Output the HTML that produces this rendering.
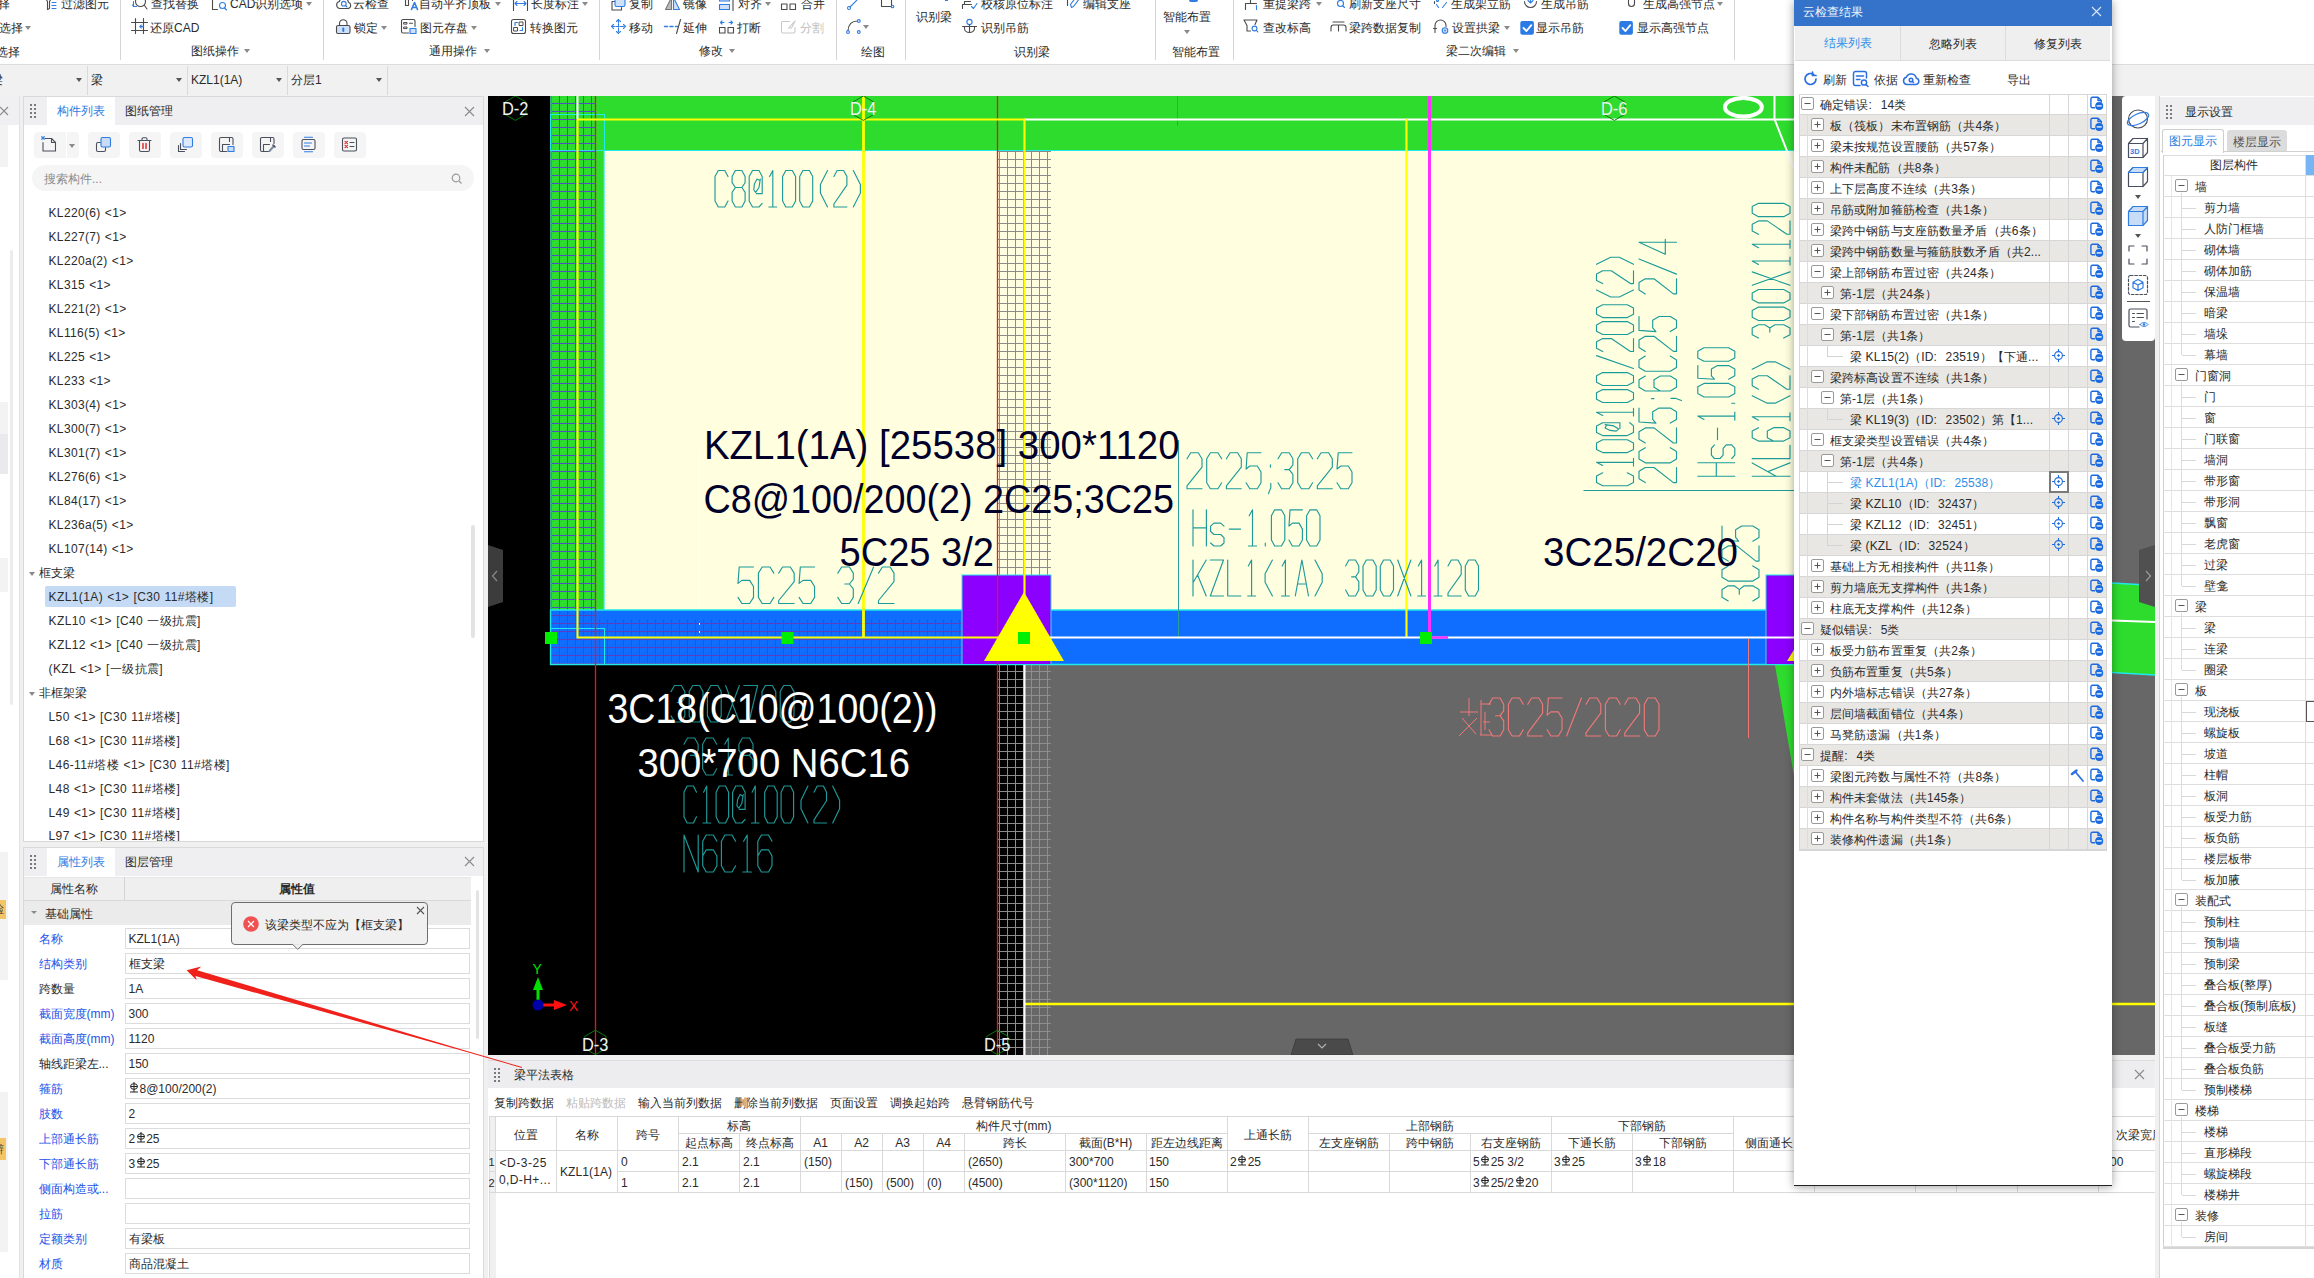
<!DOCTYPE html><html><head><meta charset="utf-8"><title>GTJ</title><style>html,body{margin:0;padding:0}body{width:2314px;height:1278px;position:relative;overflow:hidden;background:#fff;font-family:"Liberation Sans",sans-serif;font-size:12px}</style></head><body><div style="position:absolute;left:0px;top:0px;width:2314px;height:64px;background:#fff"></div><div style="position:absolute;left:0px;top:64px;width:2314px;height:1px;background:#dcdcdc"></div><div style="position:absolute;left:0px;top:65px;width:2314px;height:31px;background:#f1f1f1"></div><div style="position:absolute;left:120px;top:0px;width:1px;height:60px;background:#d4d4d4"></div><div style="position:absolute;left:323px;top:0px;width:1px;height:60px;background:#d4d4d4"></div><div style="position:absolute;left:599px;top:0px;width:1px;height:60px;background:#d4d4d4"></div><div style="position:absolute;left:836px;top:0px;width:1px;height:60px;background:#d4d4d4"></div><div style="position:absolute;left:905px;top:0px;width:1px;height:60px;background:#d4d4d4"></div><div style="position:absolute;left:1155px;top:0px;width:1px;height:60px;background:#d4d4d4"></div><div style="position:absolute;left:1233px;top:0px;width:1px;height:60px;background:#d4d4d4"></div><div style="position:absolute;left:1734px;top:0px;width:1px;height:60px;background:#d4d4d4"></div><span style="position:absolute;left:-2.5px;top:-4.5px;line-height:16px;font-size:12px;color:#2b2b2b;white-space:nowrap;">择</span><svg style="position:absolute;left:43px;top:-5px;overflow:visible" width="16" height="16" viewBox="-0.5 -0.5 16 16" fill="none" stroke-width="1.100" stroke-linecap="round" stroke-linejoin="round"><path d="M1 1H9L6 6V13L4 14V6Z" stroke="#4a4a4a"/><path d="M8.500 7H12.500M8.500 10H12.500M8.500 13H12.500" stroke="#2f7de1"/></svg><span style="position:absolute;left:61px;top:-4.5px;line-height:16px;font-size:12px;color:#2b2b2b;white-space:nowrap;">过滤图元</span><svg style="position:absolute;left:131px;top:-5px;overflow:visible" width="16" height="16" viewBox="-0.5 -0.5 16 16" fill="none" stroke-width="1.100" stroke-linecap="round" stroke-linejoin="round"><circle cx="9" cy="6" r="5" stroke="#4a4a4a"/><path d="M13 10L15.5 13.5" stroke="#4a4a4a"/><path d="M2 6V11H5M2 11L1 9.5" stroke="#2f7de1"/></svg><span style="position:absolute;left:151px;top:-4.5px;line-height:16px;font-size:12px;color:#2b2b2b;white-space:nowrap;">查找替换</span><svg style="position:absolute;left:211px;top:-5px;overflow:visible" width="16" height="16" viewBox="-0.5 -0.5 16 16" fill="none" stroke-width="1.100" stroke-linecap="round" stroke-linejoin="round"><path d="M6 14H1V1H12" stroke="#4a4a4a"/><circle cx="11" cy="10" r="3" stroke="#2f7de1"/><path d="M13 12.5L15 14.5M5 3H10" stroke="#2f7de1"/></svg><span style="position:absolute;left:230px;top:-4.5px;line-height:16px;font-size:12px;color:#2b2b2b;white-space:nowrap;">CAD识别选项</span><div style="position:absolute;left:306px;top:1.5px;border-left:3.5px solid transparent;border-right:3.5px solid transparent;border-top:4px solid #8a8a8a"></div><svg style="position:absolute;left:335px;top:-5px;overflow:visible" width="16" height="16" viewBox="-0.5 -0.5 16 16" fill="none" stroke-width="1.100" stroke-linecap="round" stroke-linejoin="round"><path d="M4 13H12.5A3.2 3.2 0 0 0 13 6.8A4.8 4.8 0 0 0 3.8 6A3.6 3.6 0 0 0 4 13Z" stroke="#4a4a4a"/><circle cx="8.3" cy="8.2" r="2.3" stroke="#2f7de1"/><path d="M10 10L11.5 11.5" stroke="#2f7de1"/></svg><span style="position:absolute;left:353px;top:-4.5px;line-height:16px;font-size:12px;color:#2b2b2b;white-space:nowrap;">云检查</span><svg style="position:absolute;left:403px;top:-5px;overflow:visible" width="16" height="16" viewBox="-0.5 -0.5 16 16" fill="none" stroke-width="1.100" stroke-linecap="round" stroke-linejoin="round"><path d="M2 1V10H5V1M9 1V5" stroke="#4a4a4a"/><path d="M8 14L11 7L14 14M9 12H13" stroke="#2f7de1" stroke-width="1.6"/></svg><span style="position:absolute;left:419px;top:-4.5px;line-height:16px;font-size:12px;color:#2b2b2b;white-space:nowrap;">自动平齐顶板</span><div style="position:absolute;left:495px;top:1.5px;border-left:3.5px solid transparent;border-right:3.5px solid transparent;border-top:4px solid #8a8a8a"></div><svg style="position:absolute;left:512px;top:-5px;overflow:visible" width="16" height="16" viewBox="-0.5 -0.5 16 16" fill="none" stroke-width="1.100" stroke-linecap="round" stroke-linejoin="round"><path d="M1 1V15M15 1V15" stroke="#4a4a4a"/><path d="M2.5 8H13.5M4.5 6L2.5 8L4.5 10M11.5 6L13.5 8L11.5 10" stroke="#2f7de1"/></svg><span style="position:absolute;left:531px;top:-4.5px;line-height:16px;font-size:12px;color:#2b2b2b;white-space:nowrap;">长度标注</span><div style="position:absolute;left:582px;top:1.5px;border-left:3.5px solid transparent;border-right:3.5px solid transparent;border-top:4px solid #8a8a8a"></div><svg style="position:absolute;left:610px;top:-5px;overflow:visible" width="16" height="16" viewBox="-0.5 -0.5 16 16" fill="none" stroke-width="1.100" stroke-linecap="round" stroke-linejoin="round"><path d="M4 6H1.5V14.5H11V12" stroke="#4a4a4a"/><rect x="4.5" y="1" width="10" height="10" rx="1.5" fill="#cfe0fa" stroke="#2f7de1"/></svg><span style="position:absolute;left:629px;top:-4.5px;line-height:16px;font-size:12px;color:#2b2b2b;white-space:nowrap;">复制</span><svg style="position:absolute;left:664px;top:-5px;overflow:visible" width="16" height="16" viewBox="-0.5 -0.5 16 16" fill="none" stroke-width="1.100" stroke-linecap="round" stroke-linejoin="round"><path d="M7 2L1 14H7Z" stroke="#777" fill="#bbb"/><path d="M9 2L15 14H9Z" stroke="#2f7de1" fill="#cfe0fa"/></svg><span style="position:absolute;left:683px;top:-4.5px;line-height:16px;font-size:12px;color:#2b2b2b;white-space:nowrap;">镜像</span><svg style="position:absolute;left:718px;top:-5px;overflow:visible" width="16" height="16" viewBox="-0.5 -0.5 16 16" fill="none" stroke-width="1.100" stroke-linecap="round" stroke-linejoin="round"><rect x="1" y="1" width="10" height="4.5" fill="#cfe0fa" stroke="#2f7de1"/><rect x="1" y="9" width="10" height="5" fill="#cfe0fa" stroke="#2f7de1"/><path d="M14.5 0V15" stroke="#4a4a4a"/></svg><span style="position:absolute;left:737.5px;top:-4.5px;line-height:16px;font-size:12px;color:#2b2b2b;white-space:nowrap;">对齐</span><div style="position:absolute;left:765px;top:1.5px;border-left:3.5px solid transparent;border-right:3.5px solid transparent;border-top:4px solid #8a8a8a"></div><svg style="position:absolute;left:780px;top:-5px;overflow:visible" width="16" height="16" viewBox="-0.5 -0.5 16 16" fill="none" stroke-width="1.100" stroke-linecap="round" stroke-linejoin="round"><rect x="1" y="8.5" width="5.5" height="5.5" stroke="#4a4a4a"/><rect x="9.5" y="8.5" width="5.5" height="5.5" stroke="#4a4a4a"/><path d="M3 4H6M10 4H13" stroke="#2f7de1"/></svg><span style="position:absolute;left:800.5px;top:-4.5px;line-height:16px;font-size:12px;color:#2b2b2b;white-space:nowrap;">合并</span><svg style="position:absolute;left:961px;top:-5px;overflow:visible" width="16" height="16" viewBox="-0.5 -0.5 16 16" fill="none" stroke-width="1.100" stroke-linecap="round" stroke-linejoin="round"><path d="M1 13V9H10M3 9V6H9" stroke="#4a4a4a"/><path d="M10 11L12 13L15.5 8" stroke="#2f7de1"/></svg><span style="position:absolute;left:981px;top:-4.5px;line-height:16px;font-size:12px;color:#2b2b2b;white-space:nowrap;">校核原位标注</span><svg style="position:absolute;left:1066px;top:-5px;overflow:visible" width="16" height="16" viewBox="-0.5 -0.5 16 16" fill="none" stroke-width="1.100" stroke-linecap="round" stroke-linejoin="round"><path d="M1 1V10" stroke="#4a4a4a"/><path d="M5 12L4 9L10 1L13 3L7 11Z" stroke="#2f7de1"/></svg><span style="position:absolute;left:1083px;top:-4.5px;line-height:16px;font-size:12px;color:#2b2b2b;white-space:nowrap;">编辑支座</span><svg style="position:absolute;left:1244px;top:-5px;overflow:visible" width="16" height="16" viewBox="-0.5 -0.5 16 16" fill="none" stroke-width="1.100" stroke-linecap="round" stroke-linejoin="round"><path d="M1 14V8H12M6 8V4L10 1" stroke="#4a4a4a"/><path d="M12 10V14" stroke="#2f7de1"/></svg><span style="position:absolute;left:1263.2px;top:-4.5px;line-height:16px;font-size:12px;color:#2b2b2b;white-space:nowrap;">重提梁跨</span><div style="position:absolute;left:1315.5px;top:1.5px;border-left:3.5px solid transparent;border-right:3.5px solid transparent;border-top:4px solid #8a8a8a"></div><svg style="position:absolute;left:1330px;top:-5px;overflow:visible" width="16" height="16" viewBox="-0.5 -0.5 16 16" fill="none" stroke-width="1.100" stroke-linecap="round" stroke-linejoin="round"><path d="M1 3L3 1M3 4L6 2" stroke="#4a4a4a"/><circle cx="10" cy="8" r="3" stroke="#2f7de1"/><path d="M12.5 10.5L14 12" stroke="#2f7de1"/></svg><span style="position:absolute;left:1348.8px;top:-4.5px;line-height:16px;font-size:12px;color:#2b2b2b;white-space:nowrap;">刷新支座尺寸</span><svg style="position:absolute;left:1433px;top:-5px;overflow:visible" width="16" height="16" viewBox="-0.5 -0.5 16 16" fill="none" stroke-width="1.100" stroke-linecap="round" stroke-linejoin="round"><path d="M1 8V1H14V4" stroke="#4a4a4a" stroke-dasharray="2 2"/><path d="M3 9L5 12M9 12L13 7" stroke="#2f7de1"/><circle cx="4" cy="5" r="1" stroke="#2f7de1"/></svg><span style="position:absolute;left:1451.3px;top:-4.5px;line-height:16px;font-size:12px;color:#2b2b2b;white-space:nowrap;">生成架立筋</span><svg style="position:absolute;left:1522px;top:-5px;overflow:visible" width="16" height="16" viewBox="-0.5 -0.5 16 16" fill="none" stroke-width="1.100" stroke-linecap="round" stroke-linejoin="round"><path d="M2 6A6 6 0 0 0 14 6" stroke="#4a4a4a"/><path d="M8 1V7M5.5 5L8 7.5L10.5 5" stroke="#2f7de1"/></svg><span style="position:absolute;left:1540.7px;top:-4.5px;line-height:16px;font-size:12px;color:#2b2b2b;white-space:nowrap;">生成吊筋</span><svg style="position:absolute;left:1623px;top:-5px;overflow:visible" width="16" height="16" viewBox="-0.5 -0.5 16 16" fill="none" stroke-width="1.100" stroke-linecap="round" stroke-linejoin="round"><path d="M2 1H14M5 1V8A3 3 0 0 0 11 8V1" stroke="#4a4a4a"/></svg><span style="position:absolute;left:1643px;top:-4.5px;line-height:16px;font-size:12px;color:#2b2b2b;white-space:nowrap;">生成高强节点</span><div style="position:absolute;left:1717px;top:1.5px;border-left:3.5px solid transparent;border-right:3.5px solid transparent;border-top:4px solid #8a8a8a"></div><svg style="position:absolute;left:846px;top:-6px;overflow:visible" width="16" height="16" viewBox="-0.5 -0.5 16 16" fill="none" stroke-width="1.100" stroke-linecap="round" stroke-linejoin="round"><path d="M3.5 12.5L14 2" stroke="#2f7de1"/><circle cx="2.5" cy="13.5" r="1.5" stroke="#2f7de1"/></svg><svg style="position:absolute;left:880px;top:-3px;overflow:visible" width="16" height="16" viewBox="-0.5 -0.5 16 16" fill="none" stroke-width="1.100" stroke-linecap="round" stroke-linejoin="round"><path d="M1 0V9H11V0" stroke="#4a4a4a"/><circle cx="12" cy="9" r="1.3" stroke="#2f7de1"/></svg><span style="position:absolute;left:-1px;top:19.5px;line-height:16px;font-size:12px;color:#2b2b2b;white-space:nowrap;">选择</span><div style="position:absolute;left:25px;top:25.5px;border-left:3.5px solid transparent;border-right:3.5px solid transparent;border-top:4px solid #8a8a8a"></div><svg style="position:absolute;left:131px;top:18px;overflow:visible" width="16" height="16" viewBox="-0.5 -0.5 16 16" fill="none" stroke-width="1.100" stroke-linecap="round" stroke-linejoin="round"><path d="M4 0V15M12 0V15M0 4H16M0 12H16" stroke="#4a4a4a"/><path d="M7.5 8L10 5.5V7.2H12.5V8.8H10V10.5Z" fill="#2f7de1" stroke="none"/></svg><span style="position:absolute;left:150px;top:19.5px;line-height:16px;font-size:12px;color:#2b2b2b;white-space:nowrap;">还原CAD</span><svg style="position:absolute;left:335px;top:18px;overflow:visible" width="16" height="16" viewBox="-0.5 -0.5 16 16" fill="none" stroke-width="1.100" stroke-linecap="round" stroke-linejoin="round"><path d="M4 7V4.5A3.8 3.8 0 0 1 11.5 4.5V7" stroke="#4a4a4a"/><rect x="1" y="7" width="13.5" height="8" rx="1.5" fill="#cfe0fa" stroke="#4a4a4a"/><path d="M7.8 10V12.5" stroke="#2f7de1" stroke-width="2"/></svg><span style="position:absolute;left:354px;top:19.5px;line-height:16px;font-size:12px;color:#2b2b2b;white-space:nowrap;">锁定</span><div style="position:absolute;left:381px;top:25.5px;border-left:3.5px solid transparent;border-right:3.5px solid transparent;border-top:4px solid #8a8a8a"></div><svg style="position:absolute;left:400px;top:18px;overflow:visible" width="16" height="16" viewBox="-0.5 -0.5 16 16" fill="none" stroke-width="1.100" stroke-linecap="round" stroke-linejoin="round"><path d="M8 14.5H2.5A1.5 1.5 0 0 1 1 13V2.5A1.5 1.5 0 0 1 2.5 1H13A1.5 1.5 0 0 1 14.5 2.5V8" stroke="#4a4a4a"/><rect x="3.5" y="4" width="3" height="1.6" stroke="#4a4a4a" stroke-width="1"/><path d="M9 4.8H12" stroke="#4a4a4a"/><rect x="3.5" y="8.5" width="3" height="1.6" stroke="#4a4a4a" stroke-width="1"/><rect x="9.5" y="10" width="6" height="5" fill="#cfe0fa" stroke="#2f7de1"/></svg><span style="position:absolute;left:420px;top:19.5px;line-height:16px;font-size:12px;color:#2b2b2b;white-space:nowrap;">图元存盘</span><div style="position:absolute;left:471px;top:25.5px;border-left:3.5px solid transparent;border-right:3.5px solid transparent;border-top:4px solid #8a8a8a"></div><svg style="position:absolute;left:510px;top:18px;overflow:visible" width="16" height="16" viewBox="-0.5 -0.5 16 16" fill="none" stroke-width="1.100" stroke-linecap="round" stroke-linejoin="round"><rect x="1" y="1" width="14" height="14" rx="2" stroke="#4a4a4a"/><rect x="9" y="3.5" width="3.5" height="3.5" stroke="#4a4a4a" stroke-width="1"/><rect x="3.5" y="9" width="3.5" height="3.5" stroke="#4a4a4a" stroke-width="1"/><path d="M7 4H4.5V7M12 9V12H9.5" stroke="#2f7de1"/></svg><span style="position:absolute;left:530px;top:19.5px;line-height:16px;font-size:12px;color:#2b2b2b;white-space:nowrap;">转换图元</span><svg style="position:absolute;left:610px;top:18px;overflow:visible" width="16" height="16" viewBox="-0.5 -0.5 16 16" fill="none" stroke-width="1.100" stroke-linecap="round" stroke-linejoin="round"><path d="M8 1V15M1 8H15M6 3L8 1L10 3M6 13L8 15L10 13M3 6L1 8L3 10M13 6L15 8L13 10" stroke="#2f7de1" stroke-dasharray="3.2 1.2"/></svg><span style="position:absolute;left:629.3px;top:19.5px;line-height:16px;font-size:12px;color:#2b2b2b;white-space:nowrap;">移动</span><svg style="position:absolute;left:664px;top:18px;overflow:visible" width="16" height="16" viewBox="-0.5 -0.5 16 16" fill="none" stroke-width="1.100" stroke-linecap="round" stroke-linejoin="round"><path d="M0 8H3M5.5 8H8.5M11 8H13" stroke="#2f7de1" stroke-width="1.5"/><path d="M16 1L12 15" stroke="#4a4a4a"/></svg><span style="position:absolute;left:683px;top:19.5px;line-height:16px;font-size:12px;color:#2b2b2b;white-space:nowrap;">延伸</span><svg style="position:absolute;left:718px;top:18px;overflow:visible" width="16" height="16" viewBox="-0.5 -0.5 16 16" fill="none" stroke-width="1.100" stroke-linecap="round" stroke-linejoin="round"><rect x="1" y="9" width="5.5" height="5.5" stroke="#4a4a4a"/><rect x="9.5" y="9" width="5.5" height="5.5" stroke="#4a4a4a"/><path d="M2 4H5.5M3.5 2.5L2 4L3.5 5.5M10.5 4H14M12.5 2.5L14 4L12.5 5.5" stroke="#2f7de1"/></svg><span style="position:absolute;left:737px;top:19.5px;line-height:16px;font-size:12px;color:#2b2b2b;white-space:nowrap;">打断</span><svg style="position:absolute;left:780px;top:18px;overflow:visible" width="16" height="16" viewBox="-0.5 -0.5 16 16" fill="none" stroke-width="1.100" stroke-linecap="round" stroke-linejoin="round"><path d="M9 3H2.5A1.5 1.5 0 0 0 1 4.5V13A1.5 1.5 0 0 0 2.5 14.5H13A1.5 1.5 0 0 0 14.5 13V9M8 9.5L14.5 2.5L11 9.5Z" stroke="#c9c9c9"/></svg><span style="position:absolute;left:800.3px;top:19.5px;line-height:16px;font-size:12px;color:#bdbdbd;white-space:nowrap;">分割</span><svg style="position:absolute;left:961px;top:18px;overflow:visible" width="16" height="16" viewBox="-0.5 -0.5 16 16" fill="none" stroke-width="1.100" stroke-linecap="round" stroke-linejoin="round"><circle cx="8" cy="3.500" r="2.600" stroke="#2f7de1"/><path d="M1 8H15M3 8V10A5 4 0 0 0 13 10V8M8 6.200V14" stroke="#4a4a4a"/></svg><span style="position:absolute;left:981px;top:19.5px;line-height:16px;font-size:12px;color:#2b2b2b;white-space:nowrap;">识别吊筋</span><svg style="position:absolute;left:1243px;top:18px;overflow:visible" width="16" height="16" viewBox="-0.5 -0.5 16 16" fill="none" stroke-width="1.100" stroke-linecap="round" stroke-linejoin="round"><path d="M0.500 1.500H13.500L11.500 6M0.500 1.500L3.500 7V12.500H7" stroke="#4a4a4a"/><circle cx="11" cy="10" r="2.400" stroke="#2f7de1"/><path d="M12.800 11.800L14.300 13.300" stroke="#2f7de1"/></svg><span style="position:absolute;left:1262.5px;top:19.5px;line-height:16px;font-size:12px;color:#2b2b2b;white-space:nowrap;">查改标高</span><svg style="position:absolute;left:1330px;top:18px;overflow:visible" width="16" height="16" viewBox="-0.5 -0.5 16 16" fill="none" stroke-width="1.100" stroke-linecap="round" stroke-linejoin="round"><path d="M2.500 3.500H13.500M0.500 12.500V9A2.500 2.500 0 0 1 3 6.500H13A2.500 2.500 0 0 1 15.500 9V12.500M8 6.500V12.500" stroke="#4a4a4a"/></svg><span style="position:absolute;left:1348.8px;top:19.5px;line-height:16px;font-size:12px;color:#2b2b2b;white-space:nowrap;">梁跨数据复制</span><svg style="position:absolute;left:1433px;top:18px;overflow:visible" width="16" height="16" viewBox="-0.5 -0.5 16 16" fill="none" stroke-width="1.100" stroke-linecap="round" stroke-linejoin="round"><path d="M1.500 14V7A5.500 5.500 0 0 1 12.500 7V8" stroke="#4a4a4a"/><path d="M0 10H3" stroke="#4a4a4a"/><circle cx="11.500" cy="12" r="2.800" stroke="#2f7de1" fill="#cfe0fa"/><circle cx="11.500" cy="12" r="0.900" fill="#2f7de1" stroke="none"/></svg><span style="position:absolute;left:1452.3px;top:19.5px;line-height:16px;font-size:12px;color:#2b2b2b;white-space:nowrap;">设置拱梁</span><div style="position:absolute;left:1504px;top:25.5px;border-left:3.5px solid transparent;border-right:3.5px solid transparent;border-top:4px solid #8a8a8a"></div><svg style="position:absolute;left:845px;top:18px;overflow:visible" width="16" height="16" viewBox="-0.5 -0.5 16 16" fill="none" stroke-width="1.100" stroke-linecap="round" stroke-linejoin="round"><path d="M2.5 12C3 6 6 2.5 12 2.5" stroke="#4a4a4a"/><circle cx="2.5" cy="13.5" r="1.4" stroke="#2f7de1"/><circle cx="13.3" cy="2.5" r="1.4" stroke="#2f7de1"/><circle cx="13.3" cy="13.5" r="1.4" stroke="#2f7de1"/></svg><div style="position:absolute;left:863px;top:24.5px;border-left:3.5px solid transparent;border-right:3.5px solid transparent;border-top:4px solid #8a8a8a"></div><svg style="position:absolute;left:1520px;top:20px;overflow:visible" width="15" height="15" viewBox="-0.5 -0.5 15 15" fill="none" stroke-width="1.100" stroke-linecap="round" stroke-linejoin="round"><rect x="-0.200" y="0.600" width="13.600" height="13.700" rx="2" fill="#2c7be5" stroke="none"/><path d="M3 7.500L6 10.500L10.800 4.600" stroke="#fff" stroke-width="1.800"/></svg><span style="position:absolute;left:1536.4px;top:20.0px;line-height:16px;font-size:12px;color:#2b2b2b;white-space:nowrap;">显示吊筋</span><svg style="position:absolute;left:1619px;top:20px;overflow:visible" width="15" height="15" viewBox="-0.5 -0.5 15 15" fill="none" stroke-width="1.100" stroke-linecap="round" stroke-linejoin="round"><rect x="-0.200" y="0.600" width="13.600" height="13.700" rx="2" fill="#2c7be5" stroke="none"/><path d="M3 7.500L6 10.500L10.800 4.600" stroke="#fff" stroke-width="1.800"/></svg><span style="position:absolute;left:1637px;top:20.0px;line-height:16px;font-size:12px;color:#2b2b2b;white-space:nowrap;">显示高强节点</span><span style="position:absolute;left:916px;top:8.5px;line-height:16px;font-size:12px;color:#2b2b2b;white-space:nowrap;">识别梁</span><div style="position:absolute;left:945px;top:0px;width:3px;height:1px;background:#2f7de1"></div><span style="position:absolute;left:1163px;top:9.0px;line-height:16px;font-size:12px;color:#2b2b2b;white-space:nowrap;">智能布置</span><div style="position:absolute;left:1184px;top:29.5px;border-left:3.5px solid transparent;border-right:3.5px solid transparent;border-top:4px solid #8a8a8a"></div><div style="position:absolute;left:1189px;top:0px;width:9px;height:2px;background:#2f7de1;border-radius:0 0 4px 4px"></div><span style="position:absolute;left:-4px;top:44.0px;line-height:16px;font-size:12px;color:#2b2b2b;white-space:nowrap;">选择</span><span style="position:absolute;left:191px;top:42.5px;line-height:16px;font-size:12px;color:#2b2b2b;white-space:nowrap;">图纸操作</span><div style="position:absolute;left:244px;top:48.5px;border-left:3.5px solid transparent;border-right:3.5px solid transparent;border-top:4px solid #8a8a8a"></div><span style="position:absolute;left:429px;top:42.5px;line-height:16px;font-size:12px;color:#2b2b2b;white-space:nowrap;">通用操作</span><div style="position:absolute;left:484px;top:48.5px;border-left:3.5px solid transparent;border-right:3.5px solid transparent;border-top:4px solid #8a8a8a"></div><span style="position:absolute;left:699px;top:42.5px;line-height:16px;font-size:12px;color:#2b2b2b;white-space:nowrap;">修改</span><div style="position:absolute;left:729px;top:48.5px;border-left:3.5px solid transparent;border-right:3.5px solid transparent;border-top:4px solid #8a8a8a"></div><span style="position:absolute;left:861px;top:44.0px;line-height:16px;font-size:12px;color:#2b2b2b;white-space:nowrap;">绘图</span><span style="position:absolute;left:1014px;top:44.0px;line-height:16px;font-size:12px;color:#2b2b2b;white-space:nowrap;">识别梁</span><span style="position:absolute;left:1172px;top:44.0px;line-height:16px;font-size:12px;color:#2b2b2b;white-space:nowrap;">智能布置</span><span style="position:absolute;left:1445.8px;top:42.5px;line-height:16px;font-size:12px;color:#2b2b2b;white-space:nowrap;">梁二次编辑</span><div style="position:absolute;left:1513px;top:48.5px;border-left:3.5px solid transparent;border-right:3.5px solid transparent;border-top:4px solid #8a8a8a"></div><div style="position:absolute;left:87px;top:66px;width:1px;height:29px;background:#dadada"></div><div style="position:absolute;left:187px;top:66px;width:1px;height:29px;background:#dadada"></div><div style="position:absolute;left:287px;top:66px;width:1px;height:29px;background:#dadada"></div><div style="position:absolute;left:386.5px;top:66px;width:1px;height:29px;background:#dadada"></div><span style="position:absolute;left:-9px;top:72.0px;line-height:16px;font-size:12px;color:#2b2b2b;white-space:nowrap;">梁</span><div style="position:absolute;left:76px;top:78px;border-left:3.5px solid transparent;border-right:3.5px solid transparent;border-top:4px solid #555"></div><span style="position:absolute;left:91px;top:72.0px;line-height:16px;font-size:12px;color:#2b2b2b;white-space:nowrap;">梁</span><div style="position:absolute;left:176px;top:78px;border-left:3.5px solid transparent;border-right:3.5px solid transparent;border-top:4px solid #555"></div><span style="position:absolute;left:191px;top:72.0px;line-height:16px;font-size:12px;color:#2b2b2b;white-space:nowrap;">KZL1(1A)</span><div style="position:absolute;left:276px;top:78px;border-left:3.5px solid transparent;border-right:3.5px solid transparent;border-top:4px solid #555"></div><span style="position:absolute;left:291px;top:72.0px;line-height:16px;font-size:12px;color:#2b2b2b;white-space:nowrap;">分层1</span><div style="position:absolute;left:376px;top:78px;border-left:3.5px solid transparent;border-right:3.5px solid transparent;border-top:4px solid #555"></div>
<div style="position:absolute;left:0px;top:96px;width:488px;height:1182px;background:#f0f0f0"></div><div style="position:absolute;left:0px;top:96px;width:19px;height:1182px;background:#fff"></div><div style="position:absolute;left:19px;top:96px;width:1px;height:1182px;background:#e2e2e2"></div><div style="position:absolute;left:0px;top:96px;width:19px;height:29px;background:#f0f0f2"></div><svg style="position:absolute;left:0px;top:107px;overflow:visible" width="8" height="8"><path d="M0 0L8 8M8 0L0 8" stroke="#8a8a8a" stroke-width="1.1"/></svg><div style="position:absolute;left:0px;top:125px;width:8px;height:42px;background:#f3f3f3"></div><div style="position:absolute;left:0px;top:402px;width:8px;height:34px;background:#f3f3f3"></div><div style="position:absolute;left:0px;top:434px;width:8px;height:40px;background:#e9e9ee"></div><div style="position:absolute;left:0px;top:558px;width:8px;height:34px;background:#f3f3f3"></div><div style="position:absolute;left:0px;top:852px;width:8px;height:128px;background:#f3f3f3"></div><div style="position:absolute;left:0px;top:1092px;width:8px;height:160px;background:#f3f3f3"></div><div style="position:absolute;left:10px;top:250px;width:3px;height:455px;background:#ececec;border-radius:2px"></div><div style="position:absolute;left:0px;top:900px;width:6px;height:19px;background:#f3c565"></div><div style="position:absolute;left:0px;top:1138px;width:6px;height:22px;background:#f3c565"></div><span style="position:absolute;left:-7px;top:901.0px;line-height:16px;font-size:11px;color:#444;white-space:nowrap;">检</span><span style="position:absolute;left:-7px;top:1141.0px;line-height:16px;font-size:11px;color:#444;white-space:nowrap;">辩</span><div style="position:absolute;left:23px;top:96px;width:461px;height:746px;background:#fff;border:1px solid #d9d9d9;box-sizing:border-box"></div><div style="position:absolute;left:24px;top:97px;width:459px;height:28px;background:#efeff1"></div><div style="position:absolute;left:47px;top:97px;width:68px;height:28px;background:#fff"></div><svg style="position:absolute;left:30px;top:104px" width="6" height="14"><rect x="0" y="0" width="2" height="2" fill="#7a7a7a"/><rect x="0" y="4" width="2" height="2" fill="#7a7a7a"/><rect x="0" y="8" width="2" height="2" fill="#7a7a7a"/><rect x="0" y="12" width="2" height="2" fill="#7a7a7a"/><rect x="4" y="0" width="2" height="2" fill="#7a7a7a"/><rect x="4" y="4" width="2" height="2" fill="#7a7a7a"/><rect x="4" y="8" width="2" height="2" fill="#7a7a7a"/><rect x="4" y="12" width="2" height="2" fill="#7a7a7a"/></svg><span style="position:absolute;left:57px;top:103.0px;line-height:16px;font-size:12px;color:#2f7de1;white-space:nowrap;">构件列表</span><span style="position:absolute;left:125px;top:103.0px;line-height:16px;font-size:12px;color:#2b2b2b;white-space:nowrap;">图纸管理</span><svg style="position:absolute;left:464.5px;top:106.5px;overflow:visible" width="9.0" height="9.0"><path d="M0 0L9.0 9.0M9.0 0L0 9.0" stroke="#8a8a8a" stroke-width="1.1"/></svg><div style="position:absolute;left:34px;top:132px;width:32px;height:26px;background:#f5f5f5;border-radius:4px 0 0 4px"></div><div style="position:absolute;left:66.5px;top:132px;width:12.5px;height:26px;background:#f5f5f5;border-radius:0 4px 4px 0"></div><div style="position:absolute;left:69px;top:143.5px;border-left:3.5px solid transparent;border-right:3.5px solid transparent;border-top:4px solid #8a8a8a"></div><svg style="position:absolute;left:41px;top:136px;overflow:visible" width="16" height="16" viewBox="-0.5 -0.5 16 16" fill="none" stroke-width="1.100" stroke-linecap="round" stroke-linejoin="round"><path d="M3.5 2H10L14 6V14.5H1.5V6" stroke="#4a4f5c"/><path d="M10 2V6H14" stroke="#4a4f5c"/><path d="M0 0L3 3M3 0L0 3M1.5 0V3M0 1.5H3" stroke="#2f7de1" stroke-width="0.9"/></svg><div style="position:absolute;left:88px;top:132px;width:32px;height:26px;background:#f5f5f5;border-radius:4px"></div><svg style="position:absolute;left:95px;top:136px;overflow:visible" width="16" height="16" viewBox="-0.5 -0.5 16 16" fill="none" stroke-width="1.100" stroke-linecap="round" stroke-linejoin="round"><path d="M5 6H2.5A1.5 1.5 0 0 0 1 7.5V13.5A1.5 1.5 0 0 0 2.5 15H8.5A1.5 1.5 0 0 0 10 13.5V11" stroke="#4a4f5c"/><rect x="5.5" y="1" width="9.5" height="9.5" rx="1.5" fill="#c9dcf7" stroke="#2f7de1"/></svg><div style="position:absolute;left:129px;top:132px;width:32px;height:26px;background:#f5f5f5;border-radius:4px"></div><svg style="position:absolute;left:136px;top:136px;overflow:visible" width="16" height="16" viewBox="-0.5 -0.5 16 16" fill="none" stroke-width="1.100" stroke-linecap="round" stroke-linejoin="round"><path d="M1.5 4H14.5M5.5 4V2.5A1.2 1.2 0 0 1 6.7 1.3H9.3A1.2 1.2 0 0 1 10.5 2.5V4M3 4V13.5A1.5 1.5 0 0 0 4.5 15H11.5A1.5 1.5 0 0 0 13 13.5V4" stroke="#4a4f5c"/><path d="M6.5 7V12M9.5 7V12" stroke="#e02020" stroke-width="1.4"/></svg><div style="position:absolute;left:170px;top:132px;width:32px;height:26px;background:#f5f5f5;border-radius:4px"></div><svg style="position:absolute;left:177px;top:136px;overflow:visible" width="16" height="16" viewBox="-0.5 -0.5 16 16" fill="none" stroke-width="1.100" stroke-linecap="round" stroke-linejoin="round"><path d="M3 7V13H9M1 9V15H7" stroke="#4a4f5c"/><rect x="5.5" y="1" width="9.5" height="9.5" rx="1.5" fill="#ddeafd" stroke="#2f7de1"/></svg><div style="position:absolute;left:211px;top:132px;width:32px;height:26px;background:#f5f5f5;border-radius:4px"></div><svg style="position:absolute;left:218px;top:136px;overflow:visible" width="16" height="16" viewBox="-0.5 -0.5 16 16" fill="none" stroke-width="1.100" stroke-linecap="round" stroke-linejoin="round"><path d="M8 15H2.5A1.5 1.5 0 0 1 1 13.500V2.500A1.5 1.5 0 0 1 2.5 1H13A1.5 1.5 0 0 1 14.5 2.500V8M4 15V8H11M11 1V5" stroke="#4a4f5c"/><rect x="9.500" y="10" width="6" height="5" fill="#c9dcf7" stroke="#2f7de1"/></svg><div style="position:absolute;left:252px;top:132px;width:32px;height:26px;background:#f5f5f5;border-radius:4px"></div><svg style="position:absolute;left:259px;top:136px;overflow:visible" width="16" height="16" viewBox="-0.5 -0.5 16 16" fill="none" stroke-width="1.100" stroke-linecap="round" stroke-linejoin="round"><path d="M9 15H2.5A1.5 1.5 0 0 1 1 13.500V2.500A1.5 1.5 0 0 1 2.5 1H13A1.5 1.5 0 0 1 14.5 2.500V7M4 15V8H10M11 1V5" stroke="#4a4f5c"/><path d="M10 14.500L14.500 9.500" stroke="#7d8aa3" stroke-width="2"/><path d="M13.5 8.500L15.500 10.500" stroke="#4a4f5c" stroke-width="1.6"/></svg><div style="position:absolute;left:293px;top:132px;width:32px;height:26px;background:#f5f5f5;border-radius:4px"></div><svg style="position:absolute;left:300px;top:136px;overflow:visible" width="16" height="16" viewBox="-0.5 -0.5 16 16" fill="none" stroke-width="1.100" stroke-linecap="round" stroke-linejoin="round"><rect x="1.5" y="3" width="13" height="10" rx="1.5" stroke="#4a4f5c"/><path d="M4 6.500H11M4 9.500H9" stroke="#2f7de1"/><path d="M4 0.700H12M4 15.300H12" stroke="#2f7de1"/></svg><div style="position:absolute;left:334px;top:132px;width:32px;height:26px;background:#f5f5f5;border-radius:4px"></div><svg style="position:absolute;left:341px;top:136px;overflow:visible" width="16" height="16" viewBox="-0.5 -0.5 16 16" fill="none" stroke-width="1.100" stroke-linecap="round" stroke-linejoin="round"><rect x="1" y="1.5" width="14" height="13" rx="1.5" stroke="#4a4f5c"/><path d="M8.500 6H12.500M8.500 10H12.500" stroke="#4a4f5c"/><path d="M3.500 4.800L6 7.200M6 4.800L3.500 7.200M3.500 8.800L6 11.200M6 8.800L3.500 11.200" stroke="#e02020" stroke-width="1.1"/></svg><div style="position:absolute;left:32px;top:165px;width:442px;height:26px;background:#f5f5f5;border-radius:13px"></div><span style="position:absolute;left:44px;top:170.5px;line-height:16px;font-size:12px;color:#8c8c8c;white-space:nowrap;">搜索构件...</span><svg style="position:absolute;left:451px;top:173px" width="12" height="12" fill="none" stroke="#9a9a9a" stroke-width="1.2"><circle cx="5" cy="5" r="3.800"/><path d="M8 8L10.500 10.500"/></svg><span style="position:absolute;left:48.5px;top:204.5px;line-height:16px;font-size:12px;color:#2b2b2b;white-space:nowrap;letter-spacing:0.35px;word-spacing:0.500px">KL220(6) &lt;1&gt;</span><span style="position:absolute;left:48.5px;top:228.5px;line-height:16px;font-size:12px;color:#2b2b2b;white-space:nowrap;letter-spacing:0.35px;word-spacing:0.500px">KL227(7) &lt;1&gt;</span><span style="position:absolute;left:48.5px;top:252.5px;line-height:16px;font-size:12px;color:#2b2b2b;white-space:nowrap;letter-spacing:0.35px;word-spacing:0.500px">KL220a(2) &lt;1&gt;</span><span style="position:absolute;left:48.5px;top:276.5px;line-height:16px;font-size:12px;color:#2b2b2b;white-space:nowrap;letter-spacing:0.35px;word-spacing:0.500px">KL315 &lt;1&gt;</span><span style="position:absolute;left:48.5px;top:300.5px;line-height:16px;font-size:12px;color:#2b2b2b;white-space:nowrap;letter-spacing:0.35px;word-spacing:0.500px">KL221(2) &lt;1&gt;</span><span style="position:absolute;left:48.5px;top:324.5px;line-height:16px;font-size:12px;color:#2b2b2b;white-space:nowrap;letter-spacing:0.35px;word-spacing:0.500px">KL116(5) &lt;1&gt;</span><span style="position:absolute;left:48.5px;top:348.5px;line-height:16px;font-size:12px;color:#2b2b2b;white-space:nowrap;letter-spacing:0.35px;word-spacing:0.500px">KL225 &lt;1&gt;</span><span style="position:absolute;left:48.5px;top:372.5px;line-height:16px;font-size:12px;color:#2b2b2b;white-space:nowrap;letter-spacing:0.35px;word-spacing:0.500px">KL233 &lt;1&gt;</span><span style="position:absolute;left:48.5px;top:396.5px;line-height:16px;font-size:12px;color:#2b2b2b;white-space:nowrap;letter-spacing:0.35px;word-spacing:0.500px">KL303(4) &lt;1&gt;</span><span style="position:absolute;left:48.5px;top:420.5px;line-height:16px;font-size:12px;color:#2b2b2b;white-space:nowrap;letter-spacing:0.35px;word-spacing:0.500px">KL300(7) &lt;1&gt;</span><span style="position:absolute;left:48.5px;top:444.5px;line-height:16px;font-size:12px;color:#2b2b2b;white-space:nowrap;letter-spacing:0.35px;word-spacing:0.500px">KL301(7) &lt;1&gt;</span><span style="position:absolute;left:48.5px;top:468.5px;line-height:16px;font-size:12px;color:#2b2b2b;white-space:nowrap;letter-spacing:0.35px;word-spacing:0.500px">KL276(6) &lt;1&gt;</span><span style="position:absolute;left:48.5px;top:492.5px;line-height:16px;font-size:12px;color:#2b2b2b;white-space:nowrap;letter-spacing:0.35px;word-spacing:0.500px">KL84(17) &lt;1&gt;</span><span style="position:absolute;left:48.5px;top:516.5px;line-height:16px;font-size:12px;color:#2b2b2b;white-space:nowrap;letter-spacing:0.35px;word-spacing:0.500px">KL236a(5) &lt;1&gt;</span><span style="position:absolute;left:48.5px;top:540.5px;line-height:16px;font-size:12px;color:#2b2b2b;white-space:nowrap;letter-spacing:0.35px;word-spacing:0.500px">KL107(14) &lt;1&gt;</span><div style="position:absolute;left:29px;top:571.5px;border-left:3.5px solid transparent;border-right:3.5px solid transparent;border-top:4px solid #8a8a8a"></div><span style="position:absolute;left:39px;top:564.5px;line-height:16px;font-size:12px;color:#2b2b2b;white-space:nowrap;">框支梁</span><div style="position:absolute;left:45px;top:586px;width:191px;height:21px;background:#c4daf5;border-radius:2px"></div><span style="position:absolute;left:48.5px;top:588.5px;line-height:16px;font-size:12px;color:#2b2b2b;white-space:nowrap;letter-spacing:0.4px;word-spacing:0.500px">KZL1(1A) &lt;1&gt; [C30 11#塔楼]</span><span style="position:absolute;left:48.5px;top:612.5px;line-height:16px;font-size:12px;color:#2b2b2b;white-space:nowrap;letter-spacing:0.4px;word-spacing:0.500px">KZL10 &lt;1&gt; [C40 一级抗震]</span><span style="position:absolute;left:48.5px;top:636.5px;line-height:16px;font-size:12px;color:#2b2b2b;white-space:nowrap;letter-spacing:0.4px;word-spacing:0.500px">KZL12 &lt;1&gt; [C40 一级抗震]</span><span style="position:absolute;left:48.5px;top:660.5px;line-height:16px;font-size:12px;color:#2b2b2b;white-space:nowrap;letter-spacing:0.4px;word-spacing:0.500px">(KZL &lt;1&gt; [一级抗震]</span><div style="position:absolute;left:29px;top:691.5px;border-left:3.5px solid transparent;border-right:3.5px solid transparent;border-top:4px solid #8a8a8a"></div><span style="position:absolute;left:39px;top:684.5px;line-height:16px;font-size:12px;color:#2b2b2b;white-space:nowrap;">非框架梁</span><span style="position:absolute;left:48.5px;top:708.5px;line-height:16px;font-size:12px;color:#2b2b2b;white-space:nowrap;letter-spacing:0.4px;word-spacing:0.500px">L50 &lt;1&gt; [C30 11#塔楼]</span><span style="position:absolute;left:48.5px;top:732.5px;line-height:16px;font-size:12px;color:#2b2b2b;white-space:nowrap;letter-spacing:0.4px;word-spacing:0.500px">L68 &lt;1&gt; [C30 11#塔楼]</span><span style="position:absolute;left:48.5px;top:756.5px;line-height:16px;font-size:12px;color:#2b2b2b;white-space:nowrap;letter-spacing:0.4px;word-spacing:0.500px">L46-11#塔楼 &lt;1&gt; [C30 11#塔楼]</span><span style="position:absolute;left:48.5px;top:780.5px;line-height:16px;font-size:12px;color:#2b2b2b;white-space:nowrap;letter-spacing:0.4px;word-spacing:0.500px">L48 &lt;1&gt; [C30 11#塔楼]</span><span style="position:absolute;left:48.5px;top:804.5px;line-height:16px;font-size:12px;color:#2b2b2b;white-space:nowrap;letter-spacing:0.4px;word-spacing:0.500px">L49 &lt;1&gt; [C30 11#塔楼]</span><div style="position:absolute;left:48.5px;top:828px;height:13px;overflow:hidden;width:300px"><span style="position:absolute;left:0;top:0;line-height:16px;font-size:12px;color:#2b2b2b;white-space:nowrap;letter-spacing:0.4px;word-spacing:0.500px">L97 &lt;1&gt; [C30 11#塔楼]</span></div><div style="position:absolute;left:471px;top:525px;width:4px;height:113px;background:#e3e3e3;border-radius:2px"></div><div style="position:absolute;left:23px;top:847px;width:461px;height:440px;background:#fff;border:1px solid #d9d9d9;box-sizing:border-box"></div><div style="position:absolute;left:24px;top:848px;width:459px;height:28px;background:#efeff1"></div><div style="position:absolute;left:47px;top:848px;width:68px;height:28px;background:#fff"></div><svg style="position:absolute;left:30px;top:854.5px" width="6" height="14"><rect x="0" y="0" width="2" height="2" fill="#7a7a7a"/><rect x="0" y="4" width="2" height="2" fill="#7a7a7a"/><rect x="0" y="8" width="2" height="2" fill="#7a7a7a"/><rect x="0" y="12" width="2" height="2" fill="#7a7a7a"/><rect x="4" y="0" width="2" height="2" fill="#7a7a7a"/><rect x="4" y="4" width="2" height="2" fill="#7a7a7a"/><rect x="4" y="8" width="2" height="2" fill="#7a7a7a"/><rect x="4" y="12" width="2" height="2" fill="#7a7a7a"/></svg><span style="position:absolute;left:57px;top:853.5px;line-height:16px;font-size:12px;color:#2f7de1;white-space:nowrap;">属性列表</span><span style="position:absolute;left:125px;top:853.5px;line-height:16px;font-size:12px;color:#2b2b2b;white-space:nowrap;">图层管理</span><svg style="position:absolute;left:464.5px;top:857.0px;overflow:visible" width="9.0" height="9.0"><path d="M0 0L9.0 9.0M9.0 0L0 9.0" stroke="#8a8a8a" stroke-width="1.1"/></svg><div style="position:absolute;left:24px;top:877px;width:447px;height:24px;background:#efefef;border-bottom:1px solid #d9d9d9;border-top:1px solid #e6e6e6;box-sizing:border-box"></div><div style="position:absolute;left:124px;top:877px;width:1px;height:23px;background:#d4d4d4"></div><span style="position:absolute;left:50px;top:881.0px;line-height:16px;font-size:12px;color:#2b2b2b;white-space:nowrap;">属性名称</span><span style="position:absolute;left:278.5px;top:881.0px;line-height:16px;font-size:12px;color:#2b2b2b;white-space:nowrap;font-weight:bold">属性值</span><div style="position:absolute;left:24px;top:901px;width:447px;height:23.5px;background:#ebebeb"></div><div style="position:absolute;left:31px;top:911px;border-left:3px solid transparent;border-right:3px solid transparent;border-top:3.500px solid #8a8a8a"></div><span style="position:absolute;left:44.5px;top:906.0px;line-height:16px;font-size:12px;color:#2b2b2b;white-space:nowrap;">基础属性</span><span style="position:absolute;left:38.5px;top:930.5px;line-height:16px;font-size:12px;color:#2352e8;white-space:nowrap;">名称</span><div style="position:absolute;left:125px;top:928.0px;width:345px;height:21px;border:1px solid #dcdcdc;box-sizing:border-box;background:#fff"></div><span style="position:absolute;left:128.5px;top:930.5px;line-height:16px;font-size:12px;color:#2b2b2b;white-space:nowrap;">KZL1(1A)</span><span style="position:absolute;left:38.5px;top:955.5px;line-height:16px;font-size:12px;color:#2352e8;white-space:nowrap;">结构类别</span><div style="position:absolute;left:125px;top:953.0px;width:345px;height:21px;border:1px solid #dcdcdc;box-sizing:border-box;background:#fff"></div><span style="position:absolute;left:128.5px;top:955.5px;line-height:16px;font-size:12px;color:#2b2b2b;white-space:nowrap;">框支梁</span><span style="position:absolute;left:38.5px;top:980.5px;line-height:16px;font-size:12px;color:#2b2b2b;white-space:nowrap;">跨数量</span><div style="position:absolute;left:125px;top:978.0px;width:345px;height:21px;border:1px solid #dcdcdc;box-sizing:border-box;background:#fff"></div><span style="position:absolute;left:128.5px;top:980.5px;line-height:16px;font-size:12px;color:#2b2b2b;white-space:nowrap;">1A</span><span style="position:absolute;left:38.5px;top:1005.5px;line-height:16px;font-size:12px;color:#2352e8;white-space:nowrap;">截面宽度(mm)</span><div style="position:absolute;left:125px;top:1003.0px;width:345px;height:21px;border:1px solid #dcdcdc;box-sizing:border-box;background:#fff"></div><span style="position:absolute;left:128.5px;top:1005.5px;line-height:16px;font-size:12px;color:#2b2b2b;white-space:nowrap;">300</span><span style="position:absolute;left:38.5px;top:1030.5px;line-height:16px;font-size:12px;color:#2352e8;white-space:nowrap;">截面高度(mm)</span><div style="position:absolute;left:125px;top:1028.0px;width:345px;height:21px;border:1px solid #dcdcdc;box-sizing:border-box;background:#fff"></div><span style="position:absolute;left:128.5px;top:1030.5px;line-height:16px;font-size:12px;color:#2b2b2b;white-space:nowrap;">1120</span><span style="position:absolute;left:38.5px;top:1055.5px;line-height:16px;font-size:12px;color:#2b2b2b;white-space:nowrap;">轴线距梁左...</span><div style="position:absolute;left:125px;top:1053.0px;width:345px;height:21px;border:1px solid #dcdcdc;box-sizing:border-box;background:#fff"></div><span style="position:absolute;left:128.5px;top:1055.5px;line-height:16px;font-size:12px;color:#2b2b2b;white-space:nowrap;">150</span><span style="position:absolute;left:38.5px;top:1080.5px;line-height:16px;font-size:12px;color:#2352e8;white-space:nowrap;">箍筋</span><div style="position:absolute;left:125px;top:1078.0px;width:345px;height:21px;border:1px solid #dcdcdc;box-sizing:border-box;background:#fff"></div><svg style="position:absolute;left:129.0px;top:1081.5px" width="10" height="11" viewBox="0 0 10 11" fill="none" stroke="#222" stroke-width="1"><path d="M5 0V10M1 10H9"/><ellipse cx="5" cy="4.500" rx="3.500" ry="2.800"/><path d="M1.500 4.500H8.500"/></svg><span style="position:absolute;left:139.5px;top:1080.5px;line-height:16px;font-size:12px;color:#2b2b2b;white-space:nowrap;">8@100/200(2)</span><span style="position:absolute;left:38.5px;top:1105.5px;line-height:16px;font-size:12px;color:#2352e8;white-space:nowrap;">肢数</span><div style="position:absolute;left:125px;top:1103.0px;width:345px;height:21px;border:1px solid #dcdcdc;box-sizing:border-box;background:#fff"></div><span style="position:absolute;left:128.5px;top:1105.5px;line-height:16px;font-size:12px;color:#2b2b2b;white-space:nowrap;">2</span><span style="position:absolute;left:38.5px;top:1130.5px;line-height:16px;font-size:12px;color:#2352e8;white-space:nowrap;">上部通长筋</span><div style="position:absolute;left:125px;top:1128.0px;width:345px;height:21px;border:1px solid #dcdcdc;box-sizing:border-box;background:#fff"></div><span style="position:absolute;left:128.5px;top:1130.5px;line-height:16px;font-size:12px;color:#2b2b2b;white-space:nowrap;">2</span><svg style="position:absolute;left:135.67px;top:1131.5px" width="10" height="11" viewBox="0 0 10 11" fill="none" stroke="#222" stroke-width="1"><path d="M5 0V10M1 10H9"/><ellipse cx="5" cy="4.500" rx="3.500" ry="2.800"/><path d="M1.500 4.500H8.500"/></svg><span style="position:absolute;left:146.17px;top:1130.5px;line-height:16px;font-size:12px;color:#2b2b2b;white-space:nowrap;">25</span><span style="position:absolute;left:38.5px;top:1155.5px;line-height:16px;font-size:12px;color:#2352e8;white-space:nowrap;">下部通长筋</span><div style="position:absolute;left:125px;top:1153.0px;width:345px;height:21px;border:1px solid #dcdcdc;box-sizing:border-box;background:#fff"></div><span style="position:absolute;left:128.5px;top:1155.5px;line-height:16px;font-size:12px;color:#2b2b2b;white-space:nowrap;">3</span><svg style="position:absolute;left:135.67px;top:1156.5px" width="10" height="11" viewBox="0 0 10 11" fill="none" stroke="#222" stroke-width="1"><path d="M5 0V10M1 10H9"/><ellipse cx="5" cy="4.500" rx="3.500" ry="2.800"/><path d="M1.500 4.500H8.500"/></svg><span style="position:absolute;left:146.17px;top:1155.5px;line-height:16px;font-size:12px;color:#2b2b2b;white-space:nowrap;">25</span><span style="position:absolute;left:38.5px;top:1180.5px;line-height:16px;font-size:12px;color:#2352e8;white-space:nowrap;">侧面构造或...</span><div style="position:absolute;left:125px;top:1178.0px;width:345px;height:21px;border:1px solid #dcdcdc;box-sizing:border-box;background:#fff"></div><span style="position:absolute;left:38.5px;top:1205.5px;line-height:16px;font-size:12px;color:#2352e8;white-space:nowrap;">拉筋</span><div style="position:absolute;left:125px;top:1203.0px;width:345px;height:21px;border:1px solid #dcdcdc;box-sizing:border-box;background:#fff"></div><span style="position:absolute;left:38.5px;top:1230.5px;line-height:16px;font-size:12px;color:#2352e8;white-space:nowrap;">定额类别</span><div style="position:absolute;left:125px;top:1228.0px;width:345px;height:21px;border:1px solid #dcdcdc;box-sizing:border-box;background:#fff"></div><span style="position:absolute;left:128.5px;top:1230.5px;line-height:16px;font-size:12px;color:#2b2b2b;white-space:nowrap;">有梁板</span><span style="position:absolute;left:38.5px;top:1255.5px;line-height:16px;font-size:12px;color:#2352e8;white-space:nowrap;">材质</span><div style="position:absolute;left:125px;top:1253.0px;width:345px;height:21px;border:1px solid #dcdcdc;box-sizing:border-box;background:#fff"></div><span style="position:absolute;left:128.5px;top:1255.5px;line-height:16px;font-size:12px;color:#2b2b2b;white-space:nowrap;">商品混凝土</span><div style="position:absolute;left:476px;top:890px;width:3px;height:149px;background:#e3e3e3;border-radius:2px"></div><div style="position:absolute;left:231px;top:902px;width:197px;height:43px;background:#f0f0f0;border:1px solid #6e6e6e;border-radius:4px;box-sizing:border-box"></div><svg style="position:absolute;left:290px;top:943px" width="16" height="8"><path d="M2.500 1.300L7.700 6.300L13 1.300" fill="#f0f0f0" stroke="#6e6e6e" stroke-width="1"/><path d="M3.300 0.800H12.200" stroke="#f0f0f0" stroke-width="1.800"/></svg><svg style="position:absolute;left:243px;top:916px" width="16" height="16"><circle cx="8" cy="8" r="7.800" fill="#f05252"/><path d="M5 5L11 11M11 5L5 11" stroke="#fff" stroke-width="1.150"/></svg><span style="position:absolute;left:264.5px;top:916.5px;line-height:16px;font-size:12px;color:#2b2b2b;white-space:nowrap;">该梁类型不应为【框支梁】</span><svg style="position:absolute;left:416.5px;top:906.5px;overflow:visible" width="7.0" height="7.0"><path d="M0 0L7.0 7.0M7.0 0L0 7.0" stroke="#555" stroke-width="1.1"/></svg>
<svg style="position:absolute;left:488px;top:96px" width="1667" height="959" viewBox="488 96 1667 959"><defs><pattern id="hg" x="547" y="99" width="8" height="8" patternUnits="userSpaceOnUse"><path d="M4.5 0V8M0 4.5H8" stroke="#5050c0" stroke-width="1" fill="none" shape-rendering="crispEdges"/></pattern><pattern id="hc" x="547" y="99" width="8" height="8" patternUnits="userSpaceOnUse"><path d="M4.5 0V8M0 4.5H8" stroke="#8a8a8a" stroke-width="1" fill="none" shape-rendering="crispEdges"/></pattern><pattern id="hk" x="547" y="99" width="8" height="8" patternUnits="userSpaceOnUse"><path d="M4.5 0V8M0 4.5H8" stroke="#8c8c8c" stroke-width="1" fill="none" shape-rendering="crispEdges"/></pattern><pattern id="hy" x="547" y="99" width="8" height="8" patternUnits="userSpaceOnUse"><path d="M4.5 0V8M0 4.5H8" stroke="#8e8e8e" stroke-width="1" fill="none" shape-rendering="crispEdges"/></pattern><pattern id="hb" x="547" y="99" width="8" height="8" patternUnits="userSpaceOnUse"><path d="M4.5 0V8M0 4.5H8" stroke="#5a40c0" stroke-width="1" fill="none" shape-rendering="crispEdges"/></pattern></defs><rect x="488" y="96" width="1667" height="959" fill="#000"/><rect x="1024" y="665" width="1131" height="390" fill="#676767"/><rect x="1800" y="96" width="355" height="600" fill="#676767"/><rect x="550" y="96" width="1250" height="55" fill="#2edc2e"/><rect x="550" y="151" width="54" height="459" fill="#2edc2e"/><rect x="604" y="151" width="1196" height="459" fill="#ffffdf"/><rect x="550.5" y="96" width="1.500" height="514" fill="#3a8ae0"/><rect x="552" y="96" width="43" height="514" fill="url(#hg)"/><rect x="998" y="151" width="53" height="424" fill="url(#hc)"/><rect x="998" y="665" width="26" height="390" fill="url(#hk)"/><rect x="1024" y="665" width="27" height="390" fill="url(#hy)"/><polygon points="2112,583 2155,585.5 2155,675 2112,672.5" fill="#2edc2e"/><path d="M2112 583 L2155 585.5 M2112 672.5 L2155 675" stroke="#1fe9e9" stroke-width="1.5"/><path d="M2112 620.5 L2155 622" stroke="#fff" stroke-width="2"/><polygon points="1775,665 1800,665 1800,800 1794,776" fill="#2edc2e"/><path d="M595 150.5 H1800" stroke="#1fe9e9" stroke-width="1.2"/><path d="M604 151 V610" stroke="#1fe9e9" stroke-width="1.2"/><rect x="550.5" y="114.5" width="54" height="36" fill="none" stroke="#1fe9e9" stroke-width="1"/><rect x="550" y="610" width="1250" height="55" fill="#0f6eff"/><rect x="552" y="611" width="43" height="53" fill="url(#hb)"/><rect x="595" y="619.500" width="367" height="44.500" fill="url(#hb)"/><path d="M550 610 H1800 M550 664.5 H1800 M550.5 610 V665" stroke="#1fe9e9" stroke-width="1.3" fill="none"/><rect x="550.5" y="628.5" width="54" height="36" fill="none" stroke="#1fe9e9" stroke-width="1"/><rect x="962" y="575" width="89" height="89.5" fill="#8c00ff" stroke="#1fe9e9" stroke-width="1"/><rect x="1766" y="575" width="40" height="89.5" fill="#8c00ff" stroke="#1fe9e9" stroke-width="1"/><path d="M595.5 96 V1055 M997.5 96 V1055" stroke="#f01414" stroke-width="1.3"/><path d="M1177.5 96 V126 M1178.5 440 V639" stroke="#2a9d9d" stroke-width="1"/><path d="M577.5 96 V119 M1024 119.5 H1794 M1774.5 96 V119 L1794.5 170" stroke="#fff" stroke-width="2" fill="none"/><ellipse cx="1743.4" cy="107.2" rx="18.400" ry="9.300" fill="none" stroke="#fff" stroke-width="4"/><path d="M699.5 452 V609" stroke="#fff" stroke-width="1"/><path d="M699.5 623 V625 M699.5 631 V633" stroke="#fff" stroke-width="1"/><path d="M577.5 119.5 H1024.5 V638 M577.5 119 V637.5 H1024 M1406.5 119 V638" stroke="#ffff00" stroke-width="2.100" fill="none"/><path d="M863.5 96 V638" stroke="#ffff00" stroke-width="2.800" fill="none"/><path d="M1024 1004 H2155" stroke="#ffff00" stroke-width="2.6"/><path d="M1429.5 96 V637.5" stroke="#ff30ff" stroke-width="3" fill="none"/><path d="M1040 637.5 H1800" stroke="#fff" stroke-width="2"/><path d="M1024.5 665 V1055" stroke="#fff" stroke-width="2"/><path d="M1429 637.5 H1448" stroke="#ff30ff" stroke-width="2.500"/><polygon points="1024,592 1064,661 984,661" fill="#ffff00"/><polygon points="1787,661 1800,640 1800,661" fill="#ffff00"/><rect x="545" y="632" width="12" height="12" fill="#00ef00"/><rect x="781.5" y="632" width="12" height="12" fill="#00ef00"/><rect x="1018" y="632" width="12" height="12" fill="#00ef00"/><rect x="1420" y="632" width="12" height="12" fill="#00ef00"/><path d="M1748.5 639 V738" stroke="#f07878" stroke-width="1"/><polygon points="515.4,96.0 526.0,102.10000000000001 526.0,114.3 515.4,120.4 504.79999999999995,114.3 504.79999999999995,102.10000000000001" fill="none" stroke="#0a7a0a" stroke-width="1"/><polygon points="863.4,96.0 874.0,102.10000000000001 874.0,114.3 863.4,120.4 852.8,114.3 852.8,102.10000000000001" fill="none" stroke="#0a7a0a" stroke-width="1"/><polygon points="1614.4,96.0 1625.0,102.10000000000001 1625.0,114.3 1614.4,120.4 1603.8000000000002,114.3 1603.8000000000002,102.10000000000001" fill="none" stroke="#0a7a0a" stroke-width="1"/><polygon points="595.4,1030.2 606.0,1036.3000000000002 606.0,1048.5 595.4,1054.6000000000001 584.8,1048.5 584.8,1036.3000000000002" fill="none" stroke="#0a7a0a" stroke-width="1"/><polygon points="997.4,1030.2 1008.0,1036.3000000000002 1008.0,1048.5 997.4,1054.6000000000001 986.8,1048.5 986.8,1036.3000000000002" fill="none" stroke="#0a7a0a" stroke-width="1"/><path transform="translate(715 207)" d="M13.0 -30.4 L9.8 -36.5 L3.3 -36.5 L0.0 -30.4 L0.0 -6.1 L3.3 0.0 L9.8 0.0 L13.0 -6.1 M20.4 -19.5 L17.1 -24.3 L17.1 -30.4 L20.4 -36.5 L26.9 -36.5 L30.1 -30.4 L30.1 -24.3 L26.9 -19.5 L20.4 -19.5 L17.1 -14.6 L17.1 -6.1 L20.4 0.0 L26.9 0.0 L30.1 -6.1 L30.1 -14.6 L26.9 -19.5 M47.2 -3.6 L44.0 0.0 L37.5 0.0 L34.2 -6.1 L34.2 -30.4 L37.5 -36.5 L44.0 -36.5 L47.2 -30.4 L47.2 -13.4 L41.4 -13.4 M44.6 -26.8 L42.0 -28.0 L39.4 -23.1 L38.8 -17.0 L40.7 -14.6 L44.0 -19.5 L45.3 -28.0 M54.6 -30.4 L57.8 -36.5 L57.8 0.0 M53.9 0.0 L61.7 0.0 M70.8 0.0 L77.3 0.0 L80.6 -6.1 L80.6 -30.4 L77.3 -36.5 L70.8 -36.5 L67.6 -30.4 L67.6 -6.1 L70.8 0.0 M87.9 0.0 L94.4 0.0 L97.7 -6.1 L97.7 -30.4 L94.4 -36.5 L87.9 -36.5 L84.7 -30.4 L84.7 -6.1 L87.9 0.0 M112.5 -36.5 L105.4 -22.5 L105.4 -14.0 L112.5 0.0 M118.9 -30.4 L122.1 -36.5 L128.6 -36.5 L131.9 -30.4 L131.9 -21.9 L118.9 -3.0 L118.9 0.0 L131.9 0.0 M138.3 -36.5 L145.4 -22.5 L145.4 -14.0 L138.3 0.0" fill="none" stroke="#1d9a9a" stroke-width="1.15" stroke-linecap="round" stroke-linejoin="round"/><path transform="translate(738 603.5)" d="M15.5 -36.5 L1.2 -36.5 L0.0 -20.1 L3.9 -23.1 L11.6 -23.1 L15.5 -17.0 L15.5 -6.1 L11.6 0.0 L3.9 0.0 L0.0 -6.1 M35.8 -30.4 L32.0 -36.5 L24.2 -36.5 L20.4 -30.4 L20.4 -6.1 L24.2 0.0 L32.0 0.0 L35.8 -6.1 M40.7 -30.4 L44.6 -36.5 L52.3 -36.5 L56.2 -30.4 L56.2 -21.9 L40.7 -3.0 L40.7 0.0 L56.2 0.0 M76.6 -36.5 L62.3 -36.5 L61.1 -20.1 L65.0 -23.1 L72.7 -23.1 L76.6 -17.0 L76.6 -6.1 L72.7 0.0 L65.0 0.0 L61.1 -6.1 M99.8 -30.4 L103.7 -36.5 L111.4 -36.5 L115.3 -30.4 L115.3 -24.3 L111.4 -19.5 L106.8 -19.5 M111.4 -19.5 L115.3 -14.6 L115.3 -6.1 L111.4 0.0 L103.7 0.0 L99.8 -6.1 M120.2 0.0 L135.6 -36.5 M140.5 -30.4 L144.4 -36.5 L152.1 -36.5 L156.0 -30.4 L156.0 -21.9 L140.5 -3.0 L140.5 0.0 L156.0 0.0" fill="none" stroke="#1d9a9a" stroke-width="1.15" stroke-linecap="round" stroke-linejoin="round"/><path transform="translate(1187 488.8)" d="M0.0 -30.0 L3.7 -36.0 L11.2 -36.0 L15.0 -30.0 L15.0 -21.6 L0.0 -3.0 L0.0 0.0 L15.0 0.0 M34.7 -30.0 L30.9 -36.0 L23.4 -36.0 L19.7 -30.0 L19.7 -6.0 L23.4 0.0 L30.9 0.0 L34.7 -6.0 M39.4 -30.0 L43.1 -36.0 L50.6 -36.0 L54.3 -30.0 L54.3 -21.6 L39.4 -3.0 L39.4 0.0 L54.3 0.0 M74.0 -36.0 L60.2 -36.0 L59.1 -19.8 L62.8 -22.8 L70.3 -22.8 L74.0 -16.8 L74.0 -6.0 L70.3 0.0 L62.8 0.0 L59.1 -6.0 M83.4 -21.6 L83.4 -24.0 M83.8 -5.4 L83.8 -1.2 L81.5 4.8 M91.0 -30.0 L94.7 -36.0 L102.2 -36.0 L105.9 -30.0 L105.9 -24.0 L102.2 -19.2 L97.7 -19.2 M102.2 -19.2 L105.9 -14.4 L105.9 -6.0 L102.2 0.0 L94.7 0.0 L91.0 -6.0 M125.6 -30.0 L121.9 -36.0 L114.4 -36.0 L110.7 -30.0 L110.7 -6.0 L114.4 0.0 L121.9 0.0 L125.6 -6.0 M130.3 -30.0 L134.1 -36.0 L141.6 -36.0 L145.3 -30.0 L145.3 -21.6 L130.3 -3.0 L130.3 0.0 L145.3 0.0 M165.0 -36.0 L151.2 -36.0 L150.0 -19.8 L153.8 -22.8 L161.3 -22.8 L165.0 -16.8 L165.0 -6.0 L161.3 0.0 L153.8 0.0 L150.0 -6.0" fill="none" stroke="#1d9a9a" stroke-width="1.15" stroke-linecap="round" stroke-linejoin="round"/><path transform="translate(1193 546)" d="M0.0 0.0 L0.0 -36.2 M13.4 0.0 L13.4 -36.2 M0.0 -18.1 L13.4 -18.1 M31.0 -19.9 L27.7 -22.9 L21.0 -22.9 L17.6 -19.9 L17.6 -14.5 L21.0 -11.5 L27.7 -11.5 L31.0 -8.4 L31.0 -3.0 L27.7 0.0 L21.0 0.0 L17.6 -3.0 M36.2 -16.9 L47.6 -16.9 M56.2 -30.2 L59.5 -36.2 L59.5 0.0 M55.5 0.0 L63.6 0.0 M72.3 0.0 L72.3 -3.0 M81.7 0.0 L88.4 0.0 L91.8 -6.0 L91.8 -30.2 L88.4 -36.2 L81.7 -36.2 L78.4 -30.2 L78.4 -6.0 L81.7 0.0 M109.4 -36.2 L97.0 -36.2 L96.0 -19.9 L99.3 -22.9 L106.0 -22.9 L109.4 -16.9 L109.4 -6.0 L106.0 0.0 L99.3 0.0 L96.0 -6.0 M117.0 0.0 L123.7 0.0 L127.0 -6.0 L127.0 -30.2 L123.7 -36.2 L117.0 -36.2 L113.6 -30.2 L113.6 -6.0 L117.0 0.0" fill="none" stroke="#1d9a9a" stroke-width="1.15" stroke-linecap="round" stroke-linejoin="round"/><path transform="translate(1193 596)" d="M0.0 0.0 L0.0 -36.0 M13.2 -36.0 L0.0 -13.2 M4.6 -21.0 L13.2 0.0 M17.3 -36.0 L30.5 -36.0 L17.3 0.0 L30.5 0.0 M34.7 -36.0 L34.7 0.0 L47.9 0.0 M55.3 -30.0 L58.6 -36.0 L58.6 0.0 M54.7 0.0 L62.6 0.0 M79.4 -36.0 L72.1 -22.2 L72.1 -13.8 L79.4 0.0 M89.2 -30.0 L92.4 -36.0 L92.4 0.0 M88.5 0.0 L96.4 0.0 M102.3 0.0 L108.9 -36.0 L115.5 0.0 M104.6 -12.0 L113.2 -12.0 M122.0 -36.0 L129.2 -22.2 L129.2 -13.8 L122.0 0.0 M152.6 -30.0 L155.9 -36.0 L162.5 -36.0 L165.8 -30.0 L165.8 -24.0 L162.5 -19.2 L158.6 -19.2 M162.5 -19.2 L165.8 -14.4 L165.8 -6.0 L162.5 0.0 L155.9 0.0 L152.6 -6.0 M173.3 0.0 L179.9 0.0 L183.2 -6.0 L183.2 -30.0 L179.9 -36.0 L173.3 -36.0 L170.0 -30.0 L170.0 -6.0 L173.3 0.0 M190.6 0.0 L197.2 0.0 L200.5 -6.0 L200.5 -30.0 L197.2 -36.0 L190.6 -36.0 L187.3 -30.0 L187.3 -6.0 L190.6 0.0 M204.7 0.0 L217.9 -36.0 M204.7 -36.0 L217.9 0.0 M225.3 -30.0 L228.6 -36.0 L228.6 0.0 M224.7 0.0 L232.6 0.0 M241.8 -30.0 L245.1 -36.0 L245.1 0.0 M241.1 0.0 L249.0 0.0 M255.0 -30.0 L258.3 -36.0 L264.9 -36.0 L268.2 -30.0 L268.2 -21.6 L255.0 -3.0 L255.0 0.0 L268.2 0.0 M275.6 0.0 L282.2 0.0 L285.5 -6.0 L285.5 -30.0 L282.2 -36.0 L275.6 -36.0 L272.3 -30.0 L272.3 -6.0 L275.6 0.0" fill="none" stroke="#1d9a9a" stroke-width="1.15" stroke-linecap="round" stroke-linejoin="round"/><path transform="translate(671 722)" d="M0.0 -30.4 L3.5 -36.5 L10.4 -36.5 L13.8 -30.4 L13.8 -24.3 L10.4 -19.5 L6.2 -19.5 M10.4 -19.5 L13.8 -14.6 L13.8 -6.1 L10.4 0.0 L3.5 0.0 L0.0 -6.1 M21.7 0.0 L28.6 0.0 L32.0 -6.1 L32.0 -30.4 L28.6 -36.5 L21.7 -36.5 L18.2 -30.4 L18.2 -6.1 L21.7 0.0 M39.8 0.0 L46.8 0.0 L50.2 -6.1 L50.2 -30.4 L46.8 -36.5 L39.8 -36.5 L36.4 -30.4 L36.4 -6.1 L39.8 0.0 M54.6 0.0 L68.4 -36.5 M54.6 -36.5 L68.4 0.0 M72.8 -36.5 L86.6 -36.5 L78.0 0.0 M94.4 0.0 L101.3 0.0 L104.8 -6.1 L104.8 -30.4 L101.3 -36.5 L94.4 -36.5 L91.0 -30.4 L91.0 -6.1 L94.4 0.0 M112.6 0.0 L119.5 0.0 L123.0 -6.1 L123.0 -30.4 L119.5 -36.5 L112.6 -36.5 L109.2 -30.4 L109.2 -6.1 L112.6 0.0" fill="none" stroke="#1f8f8f" stroke-width="1.15" stroke-linecap="round" stroke-linejoin="round"/><path transform="translate(684 775)" d="M0.0 -30.8 L3.5 -37.0 L10.6 -37.0 L14.1 -30.8 L14.1 -24.7 L10.6 -19.7 L6.4 -19.7 M10.6 -19.7 L14.1 -14.8 L14.1 -6.2 L10.6 0.0 L3.5 0.0 L0.0 -6.2 M32.7 -30.8 L29.2 -37.0 L22.1 -37.0 L18.6 -30.8 L18.6 -6.2 L22.1 0.0 L29.2 0.0 L32.7 -6.2 M40.7 -30.8 L44.3 -37.0 L44.3 0.0 M40.0 0.0 L48.5 0.0 M58.4 -19.7 L54.9 -24.7 L54.9 -30.8 L58.4 -37.0 L65.5 -37.0 L69.0 -30.8 L69.0 -24.7 L65.5 -19.7 L58.4 -19.7 L54.9 -14.8 L54.9 -6.2 L58.4 0.0 L65.5 0.0 L69.0 -6.2 L69.0 -14.8 L65.5 -19.7" fill="none" stroke="#1f8f8f" stroke-width="1.15" stroke-linecap="round" stroke-linejoin="round"/><path transform="translate(684 823)" d="M12.5 -30.8 L9.4 -37.0 L3.1 -37.0 L0.0 -30.8 L0.0 -6.2 L3.1 0.0 L9.4 0.0 L12.5 -6.2 M19.6 -30.8 L22.7 -37.0 L22.7 0.0 M19.0 0.0 L26.5 0.0 M35.2 0.0 L41.5 0.0 L44.6 -6.2 L44.6 -30.8 L41.5 -37.0 L35.2 -37.0 L32.1 -30.8 L32.1 -6.2 L35.2 0.0 M61.1 -3.7 L57.9 0.0 L51.7 0.0 L48.6 -6.2 L48.6 -30.8 L51.7 -37.0 L57.9 -37.0 L61.1 -30.8 L61.1 -13.6 L55.4 -13.6 M58.6 -27.1 L56.1 -28.4 L53.6 -23.4 L52.9 -17.3 L54.8 -14.8 L57.9 -19.7 L59.2 -28.4 M68.1 -30.8 L71.3 -37.0 L71.3 0.0 M67.5 0.0 L75.0 0.0 M83.8 0.0 L90.0 0.0 L93.2 -6.2 L93.2 -30.8 L90.0 -37.0 L83.8 -37.0 L80.7 -30.8 L80.7 -6.2 L83.8 0.0 M100.2 0.0 L106.5 0.0 L109.6 -6.2 L109.6 -30.8 L106.5 -37.0 L100.2 -37.0 L97.1 -30.8 L97.1 -6.2 L100.2 0.0 M123.9 -37.0 L117.0 -22.8 L117.0 -14.2 L123.9 0.0 M130.0 -30.8 L133.2 -37.0 L139.4 -37.0 L142.5 -30.8 L142.5 -22.2 L130.0 -3.1 L130.0 0.0 L142.5 0.0 M148.7 -37.0 L155.6 -22.8 L155.6 -14.2 L148.7 0.0" fill="none" stroke="#1f9a9a" stroke-width="1.15" stroke-linecap="round" stroke-linejoin="round"/><path transform="translate(684 872)" d="M0.0 0.0 L0.0 -37.0 L14.2 0.0 L14.2 -37.0 M32.9 -30.8 L29.3 -37.0 L22.2 -37.0 L18.7 -30.8 L18.7 -6.2 L22.2 0.0 L29.3 0.0 L32.9 -6.2 L32.9 -16.0 L29.3 -22.2 L22.2 -22.2 L18.7 -16.0 M51.6 -30.8 L48.0 -37.0 L40.9 -37.0 L37.4 -30.8 L37.4 -6.2 L40.9 0.0 L48.0 0.0 L51.6 -6.2 M59.6 -30.8 L63.2 -37.0 L63.2 0.0 M58.9 0.0 L67.4 0.0 M88.0 -30.8 L84.5 -37.0 L77.4 -37.0 L73.8 -30.8 L73.8 -6.2 L77.4 0.0 L84.5 0.0 L88.0 -6.2 L88.0 -16.0 L84.5 -22.2 L77.4 -22.2 L73.8 -16.0" fill="none" stroke="#1f9a9a" stroke-width="1.15" stroke-linecap="round" stroke-linejoin="round"/><path transform="translate(1489 736)" d="M0.0 -31.7 L3.7 -38.0 L11.1 -38.0 L14.7 -31.7 L14.7 -25.3 L11.1 -20.3 L6.6 -20.3 M11.1 -20.3 L14.7 -15.2 L14.7 -6.3 L11.1 0.0 L3.7 0.0 L0.0 -6.3 M34.2 -31.7 L30.5 -38.0 L23.1 -38.0 L19.4 -31.7 L19.4 -6.3 L23.1 0.0 L30.5 0.0 L34.2 -6.3 M38.8 -31.7 L42.5 -38.0 L49.9 -38.0 L53.6 -31.7 L53.6 -22.8 L38.8 -3.2 L38.8 0.0 L53.6 0.0 M73.0 -38.0 L59.3 -38.0 L58.2 -20.9 L61.9 -24.1 L69.3 -24.1 L73.0 -17.7 L73.0 -6.3 L69.3 0.0 L61.9 0.0 L58.2 -6.3 M77.6 0.0 L92.4 -38.0 M97.0 -31.7 L100.7 -38.0 L108.1 -38.0 L111.8 -31.7 L111.8 -22.8 L97.0 -3.2 L97.0 0.0 L111.8 0.0 M131.2 -31.7 L127.5 -38.0 L120.1 -38.0 L116.4 -31.7 L116.4 -6.3 L120.1 0.0 L127.5 0.0 L131.2 -6.3 M135.8 -31.7 L139.5 -38.0 L146.9 -38.0 L150.6 -31.7 L150.6 -22.8 L135.8 -3.2 L135.8 0.0 L150.6 0.0 M158.9 0.0 L166.3 0.0 L170.0 -6.3 L170.0 -31.7 L166.3 -38.0 L158.9 -38.0 L155.3 -31.7 L155.3 -6.3 L158.9 0.0" fill="none" stroke="#f07878" stroke-width="1.15" stroke-linecap="round" stroke-linejoin="round"/><path d="M1460 712 H1478 M1469 698 V716 M1462 718 L1476 734 M1477 718 L1459 736 M1481 700 V735 M1481 704 H1491 M1485 712 V730 M1483 722 H1490 M1480 735 H1492" stroke="#f07878" stroke-width="1" fill="none"/><path transform="translate(1633.5 485.7) rotate(-90)" d="M12.9 -30.8 L9.7 -37.0 L3.2 -37.0 L0.0 -30.8 L0.0 -6.2 L3.2 0.0 L9.7 0.0 L12.9 -6.2 M20.2 -30.8 L23.4 -37.0 L23.4 0.0 M19.6 0.0 L27.3 0.0 M36.3 0.0 L42.8 0.0 L46.0 -6.2 L46.0 -30.8 L42.8 -37.0 L36.3 -37.0 L33.1 -30.8 L33.1 -6.2 L36.3 0.0 M63.0 -3.7 L59.8 0.0 L53.3 0.0 L50.1 -6.2 L50.1 -30.8 L53.3 -37.0 L59.8 -37.0 L63.0 -30.8 L63.0 -13.6 L57.2 -13.6 M60.4 -27.1 L57.8 -28.4 L55.3 -23.4 L54.6 -17.3 L56.6 -14.8 L59.8 -19.7 L61.1 -28.4 M70.3 -30.8 L73.5 -37.0 L73.5 0.0 M69.7 0.0 L77.4 0.0 M86.4 0.0 L92.9 0.0 L96.1 -6.2 L96.1 -30.8 L92.9 -37.0 L86.4 -37.0 L83.2 -30.8 L83.2 -6.2 L86.4 0.0 M103.4 0.0 L109.9 0.0 L113.1 -6.2 L113.1 -30.8 L109.9 -37.0 L103.4 -37.0 L100.2 -30.8 L100.2 -6.2 L103.4 0.0 M117.2 0.0 L130.1 -37.0 M134.2 -30.8 L137.4 -37.0 L143.9 -37.0 L147.1 -30.8 L147.1 -22.2 L134.2 -3.1 L134.2 0.0 L147.1 0.0 M154.4 0.0 L160.8 0.0 L164.1 -6.2 L164.1 -30.8 L160.8 -37.0 L154.4 -37.0 L151.2 -30.8 L151.2 -6.2 L154.4 0.0 M171.4 0.0 L177.8 0.0 L181.0 -6.2 L181.0 -30.8 L177.8 -37.0 L171.4 -37.0 L168.1 -30.8 L168.1 -6.2 L171.4 0.0 M195.8 -37.0 L188.7 -22.8 L188.7 -14.2 L195.8 0.0 M202.1 -30.8 L205.3 -37.0 L211.8 -37.0 L215.0 -30.8 L215.0 -22.2 L202.1 -3.1 L202.1 0.0 L215.0 0.0 M221.4 -37.0 L228.5 -22.8 L228.5 -14.2 L221.4 0.0" fill="none" stroke="#1d9a9a" stroke-width="1.15" stroke-linecap="round" stroke-linejoin="round"/><path transform="translate(1676.5 482.6) rotate(-90)" d="M0.0 -31.2 L3.8 -37.5 L11.3 -37.5 L15.1 -31.2 L15.1 -22.5 L0.0 -3.1 L0.0 0.0 L15.1 0.0 M34.9 -31.2 L31.1 -37.5 L23.6 -37.5 L19.8 -31.2 L19.8 -6.2 L23.6 0.0 L31.1 0.0 L34.9 -6.2 M39.6 -31.2 L43.4 -37.5 L50.9 -37.5 L54.7 -31.2 L54.7 -22.5 L39.6 -3.1 L39.6 0.0 L54.7 0.0 M74.5 -37.5 L60.6 -37.5 L59.5 -20.6 L63.2 -23.8 L70.8 -23.8 L74.5 -17.5 L74.5 -6.2 L70.8 0.0 L63.2 0.0 L59.5 -6.2 M84.0 -22.5 L84.0 -25.0 M84.3 -5.6 L84.3 -1.2 L82.1 5.0 M106.6 -31.2 L102.9 -37.5 L95.3 -37.5 L91.6 -31.2 L91.6 -6.2 L95.3 0.0 L102.9 0.0 L106.6 -6.2 L106.6 -16.2 L102.9 -22.5 L95.3 -22.5 L91.6 -16.2 M126.5 -31.2 L122.7 -37.5 L115.2 -37.5 L111.4 -31.2 L111.4 -6.2 L115.2 0.0 L122.7 0.0 L126.5 -6.2 M131.2 -31.2 L135.0 -37.5 L142.5 -37.5 L146.3 -31.2 L146.3 -22.5 L131.2 -3.1 L131.2 0.0 L146.3 0.0 M166.1 -37.5 L152.2 -37.5 L151.0 -20.6 L154.8 -23.8 L162.3 -23.8 L166.1 -17.5 L166.1 -6.2 L162.3 0.0 L154.8 0.0 L151.0 -6.2 M188.7 -31.2 L192.5 -37.5 L200.0 -37.5 L203.8 -31.2 L203.8 -22.5 L188.7 -3.1 L188.7 0.0 L203.8 0.0 M208.5 0.0 L223.6 -37.5 M240.4 0.0 L240.4 -37.5 L228.3 -11.2 L243.4 -11.2" fill="none" stroke="#1d9a9a" stroke-width="1.15" stroke-linecap="round" stroke-linejoin="round"/><path transform="translate(1734.8 476.3) rotate(-90)" d="M0.0 0.0 L0.0 -37.0 M13.5 0.0 L13.5 -37.0 M0.0 -18.5 L13.5 -18.5 M31.4 -20.4 L28.0 -23.4 L21.2 -23.4 L17.8 -20.4 L17.8 -14.8 L21.2 -11.7 L28.0 -11.7 L31.4 -8.6 L31.4 -3.1 L28.0 0.0 L21.2 0.0 L17.8 -3.1 M36.7 -17.3 L48.2 -17.3 M56.9 -30.8 L60.2 -37.0 L60.2 0.0 M56.2 0.0 L64.3 0.0 M73.1 0.0 L73.1 -3.1 M82.7 0.0 L89.5 0.0 L92.9 -6.2 L92.9 -30.8 L89.5 -37.0 L82.7 -37.0 L79.3 -30.8 L79.3 -6.2 L82.7 0.0 M110.7 -37.0 L98.1 -37.0 L97.1 -20.4 L100.5 -23.4 L107.3 -23.4 L110.7 -17.3 L110.7 -6.2 L107.3 0.0 L100.5 0.0 L97.1 -6.2 M118.3 0.0 L125.1 0.0 L128.5 -6.2 L128.5 -30.8 L125.1 -37.0 L118.3 -37.0 L115.0 -30.8 L115.0 -6.2 L118.3 0.0" fill="none" stroke="#1d9a9a" stroke-width="1.15" stroke-linecap="round" stroke-linejoin="round"/><path transform="translate(1790 476.3) rotate(-90)" d="M0.0 0.0 L0.0 -37.8 M13.4 -37.8 L0.0 -13.9 M4.7 -22.1 L13.4 0.0 M17.6 -37.8 L17.6 0.0 L31.0 0.0 M48.6 -31.5 L45.2 -37.8 L38.5 -37.8 L35.2 -31.5 L35.2 -6.3 L38.5 0.0 L45.2 0.0 L48.6 -6.3 L48.6 -16.4 L45.2 -22.7 L38.5 -22.7 L35.2 -16.4 M56.1 -31.5 L59.5 -37.8 L59.5 0.0 M55.5 0.0 L63.5 0.0 M80.6 -37.8 L73.2 -23.3 L73.2 -14.5 L80.6 0.0 M87.1 -31.5 L90.5 -37.8 L97.2 -37.8 L100.5 -31.5 L100.5 -22.7 L87.1 -3.1 L87.1 0.0 L100.5 0.0 M107.1 -37.8 L114.4 -23.3 L114.4 -14.5 L107.1 0.0 M138.2 -31.5 L141.5 -37.8 L148.2 -37.8 L151.5 -31.5 L151.5 -25.2 L148.2 -20.2 L144.2 -20.2 M148.2 -20.2 L151.5 -15.1 L151.5 -6.3 L148.2 0.0 L141.5 0.0 L138.2 -6.3 M159.1 0.0 L165.8 0.0 L169.2 -6.3 L169.2 -31.5 L165.8 -37.8 L159.1 -37.8 L155.8 -31.5 L155.8 -6.3 L159.1 0.0 M176.7 0.0 L183.4 0.0 L186.8 -6.3 L186.8 -31.5 L183.4 -37.8 L176.7 -37.8 L173.4 -31.5 L173.4 -6.3 L176.7 0.0 M191.0 0.0 L204.4 -37.8 M191.0 -37.8 L204.4 0.0 M211.9 -31.5 L215.3 -37.8 L215.3 0.0 M211.3 0.0 L219.3 0.0 M228.6 -31.5 L232.0 -37.8 L232.0 0.0 M228.0 0.0 L236.0 0.0 M242.0 -31.5 L245.4 -37.8 L252.1 -37.8 L255.4 -31.5 L255.4 -22.7 L242.0 -3.1 L242.0 0.0 L255.4 0.0 M263.0 0.0 L269.7 0.0 L273.0 -6.3 L273.0 -31.5 L269.7 -37.8 L263.0 -37.8 L259.6 -31.5 L259.6 -6.3 L263.0 0.0" fill="none" stroke="#1d9a9a" stroke-width="1.15" stroke-linecap="round" stroke-linejoin="round"/><path transform="translate(1759 601) rotate(-90)" d="M0.0 -30.8 L3.8 -37.0 L11.4 -37.0 L15.2 -30.8 L15.2 -24.7 L11.4 -19.7 L6.8 -19.7 M11.4 -19.7 L15.2 -14.8 L15.2 -6.2 L11.4 0.0 L3.8 0.0 L0.0 -6.2 M35.1 -30.8 L31.3 -37.0 L23.7 -37.0 L19.9 -30.8 L19.9 -6.2 L23.7 0.0 L31.3 0.0 L35.1 -6.2 M39.9 -30.8 L43.7 -37.0 L51.3 -37.0 L55.1 -30.8 L55.1 -22.2 L39.9 -3.1 L39.9 0.0 L55.1 0.0 M75.0 -37.0 L61.0 -37.0 L59.8 -20.4 L63.6 -23.4 L71.2 -23.4 L75.0 -17.3 L75.0 -6.2 L71.2 0.0 L63.6 0.0 L59.8 -6.2" fill="none" stroke="#1d9a9a" stroke-width="1.15" stroke-linecap="round" stroke-linejoin="round"/><path d="M1583.5 490.5 H1800" stroke="#1d9a9a" stroke-width="1"/><path d="M538 1005 V988" stroke="#00e000" stroke-width="3"/><polygon points="538,977 533,990 543,990" fill="#00e000"/><path d="M538 1005 H556" stroke="#ff1010" stroke-width="3"/><polygon points="567,1005 554,1000 554,1010" fill="#ff1010"/><circle cx="538" cy="1005" r="5.5" fill="#0000a8"/><polygon points="488,545 503,550 503,602 488,607" fill="#3c3c3c"/><path d="M497 571 L492.5 576 L497 581" stroke="#8a8a8a" stroke-width="1.2" fill="none"/><polygon points="2155,545 2139,550 2139,602 2155,607" fill="#505050"/><path d="M2146 571 L2150.5 576 L2146 581" stroke="#9a9a9a" stroke-width="1.2" fill="none"/><polygon points="1291,1055 1296,1039 1348,1039 1353,1055" fill="#4a4a4a" stroke="#333" stroke-width="0.6"/><path d="M1318 1044 L1322 1048 L1326 1044" stroke="#b0b0b0" stroke-width="1.2" fill="none"/><g font-family='"Liberation Sans", sans-serif'><text x="704" y="458.7" font-size="41" fill="#00002a" textLength="475.5" lengthAdjust="spacingAndGlyphs">KZL1(1A) [25538] 300*1120</text><text x="703.5" y="512.6" font-size="41" fill="#00002a" textLength="470.5" lengthAdjust="spacingAndGlyphs">C8@100/200(2) 2C25;3C25</text><text x="839.5" y="565.6" font-size="41" fill="#00002a" textLength="154.5" lengthAdjust="spacingAndGlyphs">5C25 3/2</text><text x="1543" y="566.2" font-size="41.5" fill="#00002a" textLength="195" lengthAdjust="spacingAndGlyphs">3C25/2C20</text><text x="607.5" y="723.4" font-size="42" fill="#fff" textLength="330" lengthAdjust="spacingAndGlyphs">3C18(C10@100(2))</text><text x="637.5" y="776.7" font-size="41.5" fill="#fff" textLength="272.5" lengthAdjust="spacingAndGlyphs">300*700 N6C16</text><text x="502" y="114.8" font-size="18.600" fill="#f2f2f2" textLength="26.500" lengthAdjust="spacingAndGlyphs">D-2</text><text x="850" y="114.8" font-size="18.600" fill="#f2f2f2" textLength="26.500" lengthAdjust="spacingAndGlyphs">D-4</text><text x="1601" y="114.8" font-size="18.600" fill="#f2f2f2" textLength="26.500" lengthAdjust="spacingAndGlyphs">D-6</text><text x="582" y="1050.8" font-size="18.600" fill="#f2f2f2" textLength="26.500" lengthAdjust="spacingAndGlyphs">D-3</text><text x="984" y="1050.8" font-size="18.600" fill="#f2f2f2" textLength="26.500" lengthAdjust="spacingAndGlyphs">D-5</text><text x="532.5" y="973.5" font-size="14" fill="#00e000">Y</text><text x="569" y="1010.5" font-size="14" fill="#ff1010">X</text></g></svg>
<div style="position:absolute;left:488px;top:1055px;width:1667px;height:223px;background:#fff"></div><div style="position:absolute;left:488px;top:1055px;width:1667px;height:5px;background:#f0f0f0"></div><div style="position:absolute;left:488px;top:1059.5px;width:1667px;height:28px;background:#ededef;border-top:1px solid #dcdcdc;box-sizing:border-box"></div><svg style="position:absolute;left:494px;top:1067.5px" width="6" height="14"><rect x="0" y="0" width="2" height="2" fill="#7a7a7a"/><rect x="0" y="4" width="2" height="2" fill="#7a7a7a"/><rect x="0" y="8" width="2" height="2" fill="#7a7a7a"/><rect x="0" y="12" width="2" height="2" fill="#7a7a7a"/><rect x="4" y="0" width="2" height="2" fill="#7a7a7a"/><rect x="4" y="4" width="2" height="2" fill="#7a7a7a"/><rect x="4" y="8" width="2" height="2" fill="#7a7a7a"/><rect x="4" y="12" width="2" height="2" fill="#7a7a7a"/></svg><span style="position:absolute;left:514px;top:1066.5px;line-height:16px;font-size:12px;color:#2b2b2b;white-space:nowrap;">梁平法表格</span><svg style="position:absolute;left:2134.5px;top:1070.0px;overflow:visible" width="9.0" height="9.0"><path d="M0 0L9.0 9.0M9.0 0L0 9.0" stroke="#8a8a8a" stroke-width="1.1"/></svg><span style="position:absolute;left:494px;top:1094.5px;line-height:16px;font-size:12px;color:#2b2b2b;white-space:nowrap;">复制跨数据</span><span style="position:absolute;left:566px;top:1094.5px;line-height:16px;font-size:12px;color:#bcbcbc;white-space:nowrap;">粘贴跨数据</span><span style="position:absolute;left:638px;top:1094.5px;line-height:16px;font-size:12px;color:#2b2b2b;white-space:nowrap;">输入当前列数据</span><span style="position:absolute;left:734px;top:1094.5px;line-height:16px;font-size:12px;color:#2b2b2b;white-space:nowrap;">删除当前列数据</span><span style="position:absolute;left:830px;top:1094.5px;line-height:16px;font-size:12px;color:#2b2b2b;white-space:nowrap;">页面设置</span><span style="position:absolute;left:890px;top:1094.5px;line-height:16px;font-size:12px;color:#2b2b2b;white-space:nowrap;">调换起始跨</span><span style="position:absolute;left:962px;top:1094.5px;line-height:16px;font-size:12px;color:#2b2b2b;white-space:nowrap;">悬臂钢筋代号</span><div style="position:absolute;left:489px;top:1116.5px;width:6.5px;height:676px;background:#f0f0f0"></div><div style="position:absolute;left:489px;top:1115.5px;width:1666px;height:1px;background:#d9d9d9"></div><div style="position:absolute;left:489px;top:1149.5px;width:1666px;height:1px;background:#d9d9d9"></div><div style="position:absolute;left:617px;top:1170.5px;width:1538px;height:1px;background:#d9d9d9"></div><div style="position:absolute;left:489px;top:1170.5px;width:7px;height:1px;background:#d9d9d9"></div><div style="position:absolute;left:489px;top:1191.5px;width:1666px;height:1px;background:#d9d9d9"></div><div style="position:absolute;left:678px;top:1132.5px;width:122px;height:1px;background:#d9d9d9"></div><div style="position:absolute;left:800px;top:1132.5px;width:427px;height:1px;background:#d9d9d9"></div><div style="position:absolute;left:1308px;top:1132.5px;width:243px;height:1px;background:#d9d9d9"></div><div style="position:absolute;left:1551px;top:1132.5px;width:182px;height:1px;background:#d9d9d9"></div><div style="position:absolute;left:495px;top:1115.5px;width:1px;height:76.0px;background:#d9d9d9"></div><div style="position:absolute;left:556px;top:1115.5px;width:1px;height:76.0px;background:#d9d9d9"></div><div style="position:absolute;left:617px;top:1115.5px;width:1px;height:76.0px;background:#d9d9d9"></div><div style="position:absolute;left:678px;top:1115.5px;width:1px;height:76.0px;background:#d9d9d9"></div><div style="position:absolute;left:739px;top:1132.5px;width:1px;height:59.0px;background:#d9d9d9"></div><div style="position:absolute;left:800px;top:1115.5px;width:1px;height:76.0px;background:#d9d9d9"></div><div style="position:absolute;left:841px;top:1132.5px;width:1px;height:59.0px;background:#d9d9d9"></div><div style="position:absolute;left:882px;top:1132.5px;width:1px;height:59.0px;background:#d9d9d9"></div><div style="position:absolute;left:923px;top:1132.5px;width:1px;height:59.0px;background:#d9d9d9"></div><div style="position:absolute;left:964px;top:1132.5px;width:1px;height:59.0px;background:#d9d9d9"></div><div style="position:absolute;left:1065px;top:1132.5px;width:1px;height:59.0px;background:#d9d9d9"></div><div style="position:absolute;left:1146px;top:1132.5px;width:1px;height:59.0px;background:#d9d9d9"></div><div style="position:absolute;left:1227px;top:1115.5px;width:1px;height:76.0px;background:#d9d9d9"></div><div style="position:absolute;left:1308px;top:1115.5px;width:1px;height:76.0px;background:#d9d9d9"></div><div style="position:absolute;left:1389px;top:1132.5px;width:1px;height:59.0px;background:#d9d9d9"></div><div style="position:absolute;left:1470px;top:1132.5px;width:1px;height:59.0px;background:#d9d9d9"></div><div style="position:absolute;left:1551px;top:1115.5px;width:1px;height:76.0px;background:#d9d9d9"></div><div style="position:absolute;left:1632px;top:1132.5px;width:1px;height:59.0px;background:#d9d9d9"></div><div style="position:absolute;left:1733px;top:1115.5px;width:1px;height:76.0px;background:#d9d9d9"></div><div style="position:absolute;left:1814px;top:1132.5px;width:1px;height:59.0px;background:#d9d9d9"></div><div style="position:absolute;left:1915px;top:1132.5px;width:1px;height:59.0px;background:#d9d9d9"></div><div style="position:absolute;left:1956px;top:1132.5px;width:1px;height:59.0px;background:#d9d9d9"></div><div style="position:absolute;left:2017px;top:1132.5px;width:1px;height:59.0px;background:#d9d9d9"></div><div style="position:absolute;left:2098px;top:1115.5px;width:1px;height:76.0px;background:#d9d9d9"></div><div style="position:absolute;left:489px;top:1115.5px;width:1px;height:756.0px;background:#d9d9d9"></div><span style="position:absolute;left:495px;width:61px;top:1126.5px;line-height:16px;font-size:12px;color:#2b2b2b;text-align:center;white-space:nowrap">位置</span><span style="position:absolute;left:556px;width:61px;top:1126.5px;line-height:16px;font-size:12px;color:#2b2b2b;text-align:center;white-space:nowrap">名称</span><span style="position:absolute;left:617px;width:61px;top:1126.5px;line-height:16px;font-size:12px;color:#2b2b2b;text-align:center;white-space:nowrap">跨号</span><span style="position:absolute;left:678px;width:122px;top:1117.5px;line-height:16px;font-size:12px;color:#2b2b2b;text-align:center;white-space:nowrap">标高</span><span style="position:absolute;left:800px;width:427px;top:1117.5px;line-height:16px;font-size:12px;color:#2b2b2b;text-align:center;white-space:nowrap">构件尺寸(mm)</span><span style="position:absolute;left:1227px;width:81px;top:1126.5px;line-height:16px;font-size:12px;color:#2b2b2b;text-align:center;white-space:nowrap">上通长筋</span><span style="position:absolute;left:1308px;width:243px;top:1117.5px;line-height:16px;font-size:12px;color:#2b2b2b;text-align:center;white-space:nowrap">上部钢筋</span><span style="position:absolute;left:1551px;width:182px;top:1117.5px;line-height:16px;font-size:12px;color:#2b2b2b;text-align:center;white-space:nowrap">下部钢筋</span><span style="position:absolute;left:678px;width:61px;top:1134.5px;line-height:16px;font-size:12px;color:#2b2b2b;text-align:center;white-space:nowrap">起点标高</span><span style="position:absolute;left:739px;width:61px;top:1134.5px;line-height:16px;font-size:12px;color:#2b2b2b;text-align:center;white-space:nowrap">终点标高</span><span style="position:absolute;left:800px;width:41px;top:1134.5px;line-height:16px;font-size:12px;color:#2b2b2b;text-align:center;white-space:nowrap">A1</span><span style="position:absolute;left:841px;width:41px;top:1134.5px;line-height:16px;font-size:12px;color:#2b2b2b;text-align:center;white-space:nowrap">A2</span><span style="position:absolute;left:882px;width:41px;top:1134.5px;line-height:16px;font-size:12px;color:#2b2b2b;text-align:center;white-space:nowrap">A3</span><span style="position:absolute;left:923px;width:41px;top:1134.5px;line-height:16px;font-size:12px;color:#2b2b2b;text-align:center;white-space:nowrap">A4</span><span style="position:absolute;left:964px;width:101px;top:1134.5px;line-height:16px;font-size:12px;color:#2b2b2b;text-align:center;white-space:nowrap">跨长</span><span style="position:absolute;left:1065px;width:81px;top:1134.5px;line-height:16px;font-size:12px;color:#2b2b2b;text-align:center;white-space:nowrap">截面(B*H)</span><span style="position:absolute;left:1146px;width:81px;top:1134.5px;line-height:16px;font-size:12px;color:#2b2b2b;text-align:center;white-space:nowrap">距左边线距离</span><span style="position:absolute;left:1308px;width:81px;top:1134.5px;line-height:16px;font-size:12px;color:#2b2b2b;text-align:center;white-space:nowrap">左支座钢筋</span><span style="position:absolute;left:1389px;width:81px;top:1134.5px;line-height:16px;font-size:12px;color:#2b2b2b;text-align:center;white-space:nowrap">跨中钢筋</span><span style="position:absolute;left:1470px;width:81px;top:1134.5px;line-height:16px;font-size:12px;color:#2b2b2b;text-align:center;white-space:nowrap">右支座钢筋</span><span style="position:absolute;left:1551px;width:81px;top:1134.5px;line-height:16px;font-size:12px;color:#2b2b2b;text-align:center;white-space:nowrap">下通长筋</span><span style="position:absolute;left:1632px;width:101px;top:1134.5px;line-height:16px;font-size:12px;color:#2b2b2b;text-align:center;white-space:nowrap">下部钢筋</span><span style="position:absolute;left:1745px;top:1134.5px;line-height:16px;font-size:12px;color:#2b2b2b;white-space:nowrap;">侧面通长</span><span style="position:absolute;left:2116px;top:1126.5px;line-height:16px;font-size:12px;color:#2b2b2b;white-space:nowrap;">次梁宽度</span><span style="position:absolute;left:488.5px;top:1153.5px;line-height:16px;font-size:11px;color:#2b2b2b;white-space:nowrap;">1</span><span style="position:absolute;left:488.5px;top:1174.5px;line-height:16px;font-size:11px;color:#2b2b2b;white-space:nowrap;">2</span><span style="position:absolute;left:499.5px;top:1154.5px;line-height:16px;font-size:12px;color:#2b2b2b;white-space:nowrap;letter-spacing:0.55px">&lt;D-3-25</span><span style="position:absolute;left:499px;top:1171.5px;line-height:16px;font-size:12px;color:#2b2b2b;white-space:nowrap;letter-spacing:0.4px">0,D-H+...</span><span style="position:absolute;left:560px;top:1163.5px;line-height:16px;font-size:12px;color:#2b2b2b;white-space:nowrap;letter-spacing:0.1px">KZL1(1A)</span><span style="position:absolute;left:621px;top:1153.5px;line-height:16px;font-size:12px;color:#2b2b2b;white-space:nowrap;">0</span><span style="position:absolute;left:682px;top:1153.5px;line-height:16px;font-size:12px;color:#2b2b2b;white-space:nowrap;">2.1</span><span style="position:absolute;left:743px;top:1153.5px;line-height:16px;font-size:12px;color:#2b2b2b;white-space:nowrap;">2.1</span><span style="position:absolute;left:804px;top:1153.5px;line-height:16px;font-size:12px;color:#2b2b2b;white-space:nowrap;">(150)</span><span style="position:absolute;left:968px;top:1153.5px;line-height:16px;font-size:12px;color:#2b2b2b;white-space:nowrap;">(2650)</span><span style="position:absolute;left:1069px;top:1153.5px;line-height:16px;font-size:12px;color:#2b2b2b;white-space:nowrap;">300*700</span><span style="position:absolute;left:1149px;top:1153.5px;line-height:16px;font-size:12px;color:#2b2b2b;white-space:nowrap;">150</span><span style="position:absolute;left:621px;top:1174.5px;line-height:16px;font-size:12px;color:#2b2b2b;white-space:nowrap;">1</span><span style="position:absolute;left:682px;top:1174.5px;line-height:16px;font-size:12px;color:#2b2b2b;white-space:nowrap;">2.1</span><span style="position:absolute;left:743px;top:1174.5px;line-height:16px;font-size:12px;color:#2b2b2b;white-space:nowrap;">2.1</span><span style="position:absolute;left:845px;top:1174.5px;line-height:16px;font-size:12px;color:#2b2b2b;white-space:nowrap;">(150)</span><span style="position:absolute;left:886px;top:1174.5px;line-height:16px;font-size:12px;color:#2b2b2b;white-space:nowrap;">(500)</span><span style="position:absolute;left:927px;top:1174.5px;line-height:16px;font-size:12px;color:#2b2b2b;white-space:nowrap;">(0)</span><span style="position:absolute;left:968px;top:1174.5px;line-height:16px;font-size:12px;color:#2b2b2b;white-space:nowrap;">(4500)</span><span style="position:absolute;left:1069px;top:1174.5px;line-height:16px;font-size:12px;color:#2b2b2b;white-space:nowrap;">(300*1120)</span><span style="position:absolute;left:1149px;top:1174.5px;line-height:16px;font-size:12px;color:#2b2b2b;white-space:nowrap;">150</span><span style="position:absolute;left:1230px;top:1153.5px;line-height:16px;font-size:12px;color:#2b2b2b;white-space:nowrap;">2</span><svg style="position:absolute;left:1237.17px;top:1154.5px" width="10" height="11" viewBox="0 0 10 11" fill="none" stroke="#222" stroke-width="1"><path d="M5 0V10M1 10H9"/><ellipse cx="5" cy="4.500" rx="3.500" ry="2.800"/><path d="M1.500 4.500H8.500"/></svg><span style="position:absolute;left:1247.67px;top:1153.5px;line-height:16px;font-size:12px;color:#2b2b2b;white-space:nowrap;">25</span><span style="position:absolute;left:1473px;top:1153.5px;line-height:16px;font-size:12px;color:#2b2b2b;white-space:nowrap;">5</span><svg style="position:absolute;left:1480.17px;top:1154.5px" width="10" height="11" viewBox="0 0 10 11" fill="none" stroke="#222" stroke-width="1"><path d="M5 0V10M1 10H9"/><ellipse cx="5" cy="4.500" rx="3.500" ry="2.800"/><path d="M1.500 4.500H8.500"/></svg><span style="position:absolute;left:1490.67px;top:1153.5px;line-height:16px;font-size:12px;color:#2b2b2b;white-space:nowrap;">25 3/2</span><span style="position:absolute;left:1554px;top:1153.5px;line-height:16px;font-size:12px;color:#2b2b2b;white-space:nowrap;">3</span><svg style="position:absolute;left:1561.17px;top:1154.5px" width="10" height="11" viewBox="0 0 10 11" fill="none" stroke="#222" stroke-width="1"><path d="M5 0V10M1 10H9"/><ellipse cx="5" cy="4.500" rx="3.500" ry="2.800"/><path d="M1.500 4.500H8.500"/></svg><span style="position:absolute;left:1571.67px;top:1153.5px;line-height:16px;font-size:12px;color:#2b2b2b;white-space:nowrap;">25</span><span style="position:absolute;left:1635px;top:1153.5px;line-height:16px;font-size:12px;color:#2b2b2b;white-space:nowrap;">3</span><svg style="position:absolute;left:1642.17px;top:1154.5px" width="10" height="11" viewBox="0 0 10 11" fill="none" stroke="#222" stroke-width="1"><path d="M5 0V10M1 10H9"/><ellipse cx="5" cy="4.500" rx="3.500" ry="2.800"/><path d="M1.500 4.500H8.500"/></svg><span style="position:absolute;left:1652.67px;top:1153.5px;line-height:16px;font-size:12px;color:#2b2b2b;white-space:nowrap;">18</span><span style="position:absolute;left:1473px;top:1174.5px;line-height:16px;font-size:12px;color:#2b2b2b;white-space:nowrap;">3</span><svg style="position:absolute;left:1480.17px;top:1175.5px" width="10" height="11" viewBox="0 0 10 11" fill="none" stroke="#222" stroke-width="1"><path d="M5 0V10M1 10H9"/><ellipse cx="5" cy="4.500" rx="3.500" ry="2.800"/><path d="M1.500 4.500H8.500"/></svg><span style="position:absolute;left:1490.67px;top:1174.5px;line-height:16px;font-size:12px;color:#2b2b2b;white-space:nowrap;">25/2</span><svg style="position:absolute;left:1514.52px;top:1175.5px" width="10" height="11" viewBox="0 0 10 11" fill="none" stroke="#222" stroke-width="1"><path d="M5 0V10M1 10H9"/><ellipse cx="5" cy="4.500" rx="3.500" ry="2.800"/><path d="M1.500 4.500H8.500"/></svg><span style="position:absolute;left:1525.02px;top:1174.5px;line-height:16px;font-size:12px;color:#2b2b2b;white-space:nowrap;">20</span><span style="position:absolute;left:2110px;top:1153.5px;line-height:16px;font-size:12px;color:#2b2b2b;white-space:nowrap;">00</span>
<svg style="position:absolute;left:0;top:0;pointer-events:none" width="2314" height="1278"><polygon points="186.600,970.200 201.200,966.600 197.200,970.200 465.240,1050.520 522.100,1067.100 521.900,1067.900 464.960,1051.480 195.400,975.900 196.700,980.200" fill="#f0201a"/></svg>
<div style="position:absolute;left:2122px;top:96px;width:33px;height:245px;background:#fff;border-radius:4px 0 4px 4px"></div><svg style="position:absolute;left:2127px;top:107.5px;overflow:visible" width="22" height="22" viewBox="0 0 22 22" fill="none" stroke-width="1.200" stroke-linejoin="round" stroke-linecap="round"><ellipse cx="11" cy="11" rx="9.500" ry="9" stroke="#4a4f5c"/><ellipse cx="11" cy="11" rx="11.500" ry="5" transform="rotate(-25 11 11)" stroke="#2f7de1"/></svg><svg style="position:absolute;left:2127px;top:137px;overflow:visible" width="22" height="22" viewBox="0 0 22 22" fill="none" stroke-width="1.200" stroke-linejoin="round" stroke-linecap="round"><path d="M1.500 6.500H16V20.500H1.500ZM1.500 6.500L6 1.500H20.500V15.500L16 20.500M16 6.500L20.500 1.500" stroke="#4a4f5c"/><text x="3" y="17" font-size="7.500" font-weight="bold" fill="#2f7de1" stroke="none" font-family='"Liberation Sans",sans-serif'>3D</text></svg><svg style="position:absolute;left:2127px;top:166px;overflow:visible" width="22" height="22" viewBox="0 0 22 22" fill="none" stroke-width="1.200" stroke-linejoin="round" stroke-linecap="round"><path d="M1.500 6.500H16V20.500H1.500ZM1.500 6.500L6 1.500H20.500V15.500L16 20.500M16 6.500L20.500 1.500" stroke="#4a4f5c"/><path d="M1.500 6.500L6 1.500H20.500L16 6.500Z" fill="#c9dcf7" stroke="#2f7de1" stroke-width="1.200"/></svg><svg style="position:absolute;left:2127px;top:205px;overflow:visible" width="22" height="22" viewBox="0 0 22 22" fill="none" stroke-width="1.200" stroke-linejoin="round" stroke-linecap="round"><path d="M1.500 6.500H16V20.500H1.500ZM1.500 6.500L6 1.500H20.500V15.500L16 20.500M16 6.500L20.500 1.500" stroke="#2f7de1" fill="#c9dcf7"/></svg><svg style="position:absolute;left:2127px;top:244px;overflow:visible" width="22" height="22" viewBox="0 0 22 22" fill="none" stroke-width="1.200" stroke-linejoin="round" stroke-linecap="round"><path d="M2 7V2H7M15 2H20V7M20 15V20H15M7 20H2V15" stroke="#4a4f5c"/></svg><svg style="position:absolute;left:2127px;top:273.5px;overflow:visible" width="22" height="22" viewBox="0 0 22 22" fill="none" stroke-width="1.200" stroke-linejoin="round" stroke-linecap="round"><rect x="1.500" y="1.500" width="19" height="19" rx="2" stroke="#4a4f5c" stroke-dasharray="2.500 1.800"/><path d="M11 5.500L16 8.200V13.800L11 16.500L6 13.800V8.200ZM6 8.200L11 11L16 8.200M11 11V16.500" stroke="#2f7de1"/></svg><svg style="position:absolute;left:2127px;top:306.5px;overflow:visible" width="22" height="22" viewBox="0 0 22 22" fill="none" stroke-width="1.200" stroke-linejoin="round" stroke-linecap="round"><path d="M12 20H3.500A1.500 1.500 0 0 1 2 18.500V3.500A1.500 1.500 0 0 1 3.500 2H18.500A1.500 1.500 0 0 1 20 3.500V12" stroke="#4a4f5c"/><path d="M5.500 6.500H7.500M10 6.500H16.500M5.500 10.500H7.500M10 10.500H16.500M5.500 14.500H7.500" stroke="#4a4f5c" stroke-width="1"/><path d="M13 17.500C14.500 15 19.500 15 21 17.500C19.500 20 14.500 20 13 17.500Z" stroke="#2f7de1" stroke-width="1"/><circle cx="17" cy="17.500" r="1.200" fill="#2f7de1" stroke="none"/></svg><div style="position:absolute;left:2134.5px;top:194.5px;border-left:3.5px solid transparent;border-right:3.5px solid transparent;border-top:4px solid #555"></div><div style="position:absolute;left:2134.5px;top:233.5px;border-left:3.5px solid transparent;border-right:3.5px solid transparent;border-top:4px solid #555"></div><div style="position:absolute;left:2127px;top:301px;width:23px;height:1px;background:#555"></div><div style="position:absolute;left:2155px;top:96px;width:159px;height:1182px;background:#f0f0f0"></div><div style="position:absolute;left:2159px;top:96px;width:155px;height:1182px;background:#fff;border-left:1px solid #d6d6d6;box-sizing:border-box"></div><div style="position:absolute;left:2160px;top:97px;width:154px;height:28px;background:#efeff1"></div><svg style="position:absolute;left:2166px;top:104.5px" width="6" height="14"><rect x="0" y="0" width="2" height="2" fill="#7a7a7a"/><rect x="0" y="4" width="2" height="2" fill="#7a7a7a"/><rect x="0" y="8" width="2" height="2" fill="#7a7a7a"/><rect x="0" y="12" width="2" height="2" fill="#7a7a7a"/><rect x="4" y="0" width="2" height="2" fill="#7a7a7a"/><rect x="4" y="4" width="2" height="2" fill="#7a7a7a"/><rect x="4" y="8" width="2" height="2" fill="#7a7a7a"/><rect x="4" y="12" width="2" height="2" fill="#7a7a7a"/></svg><span style="position:absolute;left:2185px;top:103.5px;line-height:16px;font-size:12px;color:#2b2b2b;white-space:nowrap;">显示设置</span><div style="position:absolute;left:2227px;top:130px;width:60px;height:21px;background:#dcdcdc;border-radius:3px 3px 0 0"></div><span style="position:absolute;left:2233px;top:133.5px;line-height:16px;font-size:12px;color:#555;white-space:nowrap;">楼层显示</span><div style="position:absolute;left:2160.5px;top:151px;width:154px;height:1px;background:#d0d0d0"></div><div style="position:absolute;left:2162px;top:128.5px;width:61.5px;height:24px;background:#fff;border:1px solid #cfcfcf;border-bottom:none;border-radius:3px 3px 0 0;box-sizing:border-box"></div><span style="position:absolute;left:2168.5px;top:132.5px;line-height:16px;font-size:12px;color:#2f7de1;white-space:nowrap;">图元显示</span><div style="position:absolute;left:2163px;top:154.5px;width:151px;height:1093px;border:1px solid #dedede;border-right:none;box-sizing:border-box"></div><div style="position:absolute;left:2163px;top:154.5px;width:1px;height:1093px;background:#cfcfcf"></div><div style="position:absolute;left:2163px;top:1246.5px;width:151px;height:2px;background:#d5d5d5"></div><div style="position:absolute;left:2305px;top:154.5px;width:9px;height:21px;background:#76b4f4"></div><div style="position:absolute;left:2305px;top:154.5px;width:1px;height:1092px;background:#dedede"></div><span style="position:absolute;left:2210px;top:157.0px;line-height:16px;font-size:12px;color:#2b2b2b;white-space:nowrap;">图层构件</span><div style="position:absolute;left:2163px;top:175.0px;width:151px;height:1px;background:#dedede"></div><div style="position:absolute;left:2163px;top:196.0px;width:151px;height:1px;background:#dedede"></div><div style="position:absolute;left:2163px;top:217.0px;width:151px;height:1px;background:#dedede"></div><div style="position:absolute;left:2163px;top:238.0px;width:151px;height:1px;background:#dedede"></div><div style="position:absolute;left:2163px;top:259.0px;width:151px;height:1px;background:#dedede"></div><div style="position:absolute;left:2163px;top:280.0px;width:151px;height:1px;background:#dedede"></div><div style="position:absolute;left:2163px;top:301.0px;width:151px;height:1px;background:#dedede"></div><div style="position:absolute;left:2163px;top:322.0px;width:151px;height:1px;background:#dedede"></div><div style="position:absolute;left:2163px;top:343.0px;width:151px;height:1px;background:#dedede"></div><div style="position:absolute;left:2163px;top:364.0px;width:151px;height:1px;background:#dedede"></div><div style="position:absolute;left:2163px;top:385.0px;width:151px;height:1px;background:#dedede"></div><div style="position:absolute;left:2163px;top:406.0px;width:151px;height:1px;background:#dedede"></div><div style="position:absolute;left:2163px;top:427.0px;width:151px;height:1px;background:#dedede"></div><div style="position:absolute;left:2163px;top:448.0px;width:151px;height:1px;background:#dedede"></div><div style="position:absolute;left:2163px;top:469.0px;width:151px;height:1px;background:#dedede"></div><div style="position:absolute;left:2163px;top:490.0px;width:151px;height:1px;background:#dedede"></div><div style="position:absolute;left:2163px;top:511.0px;width:151px;height:1px;background:#dedede"></div><div style="position:absolute;left:2163px;top:532.0px;width:151px;height:1px;background:#dedede"></div><div style="position:absolute;left:2163px;top:553.0px;width:151px;height:1px;background:#dedede"></div><div style="position:absolute;left:2163px;top:574.0px;width:151px;height:1px;background:#dedede"></div><div style="position:absolute;left:2163px;top:595.0px;width:151px;height:1px;background:#dedede"></div><div style="position:absolute;left:2163px;top:616.0px;width:151px;height:1px;background:#dedede"></div><div style="position:absolute;left:2163px;top:637.0px;width:151px;height:1px;background:#dedede"></div><div style="position:absolute;left:2163px;top:658.0px;width:151px;height:1px;background:#dedede"></div><div style="position:absolute;left:2163px;top:679.0px;width:151px;height:1px;background:#dedede"></div><div style="position:absolute;left:2163px;top:700.0px;width:151px;height:1px;background:#dedede"></div><div style="position:absolute;left:2163px;top:721.0px;width:151px;height:1px;background:#dedede"></div><div style="position:absolute;left:2163px;top:742.0px;width:151px;height:1px;background:#dedede"></div><div style="position:absolute;left:2163px;top:763.0px;width:151px;height:1px;background:#dedede"></div><div style="position:absolute;left:2163px;top:784.0px;width:151px;height:1px;background:#dedede"></div><div style="position:absolute;left:2163px;top:805.0px;width:151px;height:1px;background:#dedede"></div><div style="position:absolute;left:2163px;top:826.0px;width:151px;height:1px;background:#dedede"></div><div style="position:absolute;left:2163px;top:847.0px;width:151px;height:1px;background:#dedede"></div><div style="position:absolute;left:2163px;top:868.0px;width:151px;height:1px;background:#dedede"></div><div style="position:absolute;left:2163px;top:889.0px;width:151px;height:1px;background:#dedede"></div><div style="position:absolute;left:2163px;top:910.0px;width:151px;height:1px;background:#dedede"></div><div style="position:absolute;left:2163px;top:931.0px;width:151px;height:1px;background:#dedede"></div><div style="position:absolute;left:2163px;top:952.0px;width:151px;height:1px;background:#dedede"></div><div style="position:absolute;left:2163px;top:973.0px;width:151px;height:1px;background:#dedede"></div><div style="position:absolute;left:2163px;top:994.0px;width:151px;height:1px;background:#dedede"></div><div style="position:absolute;left:2163px;top:1015.0px;width:151px;height:1px;background:#dedede"></div><div style="position:absolute;left:2163px;top:1036.0px;width:151px;height:1px;background:#dedede"></div><div style="position:absolute;left:2163px;top:1057.0px;width:151px;height:1px;background:#dedede"></div><div style="position:absolute;left:2163px;top:1078.0px;width:151px;height:1px;background:#dedede"></div><div style="position:absolute;left:2163px;top:1099.0px;width:151px;height:1px;background:#dedede"></div><div style="position:absolute;left:2163px;top:1120.0px;width:151px;height:1px;background:#dedede"></div><div style="position:absolute;left:2163px;top:1141.0px;width:151px;height:1px;background:#dedede"></div><div style="position:absolute;left:2163px;top:1162.0px;width:151px;height:1px;background:#dedede"></div><div style="position:absolute;left:2163px;top:1183.0px;width:151px;height:1px;background:#dedede"></div><div style="position:absolute;left:2163px;top:1204.0px;width:151px;height:1px;background:#dedede"></div><div style="position:absolute;left:2163px;top:1225.0px;width:151px;height:1px;background:#dedede"></div><div style="position:absolute;left:2163px;top:1246.0px;width:151px;height:1px;background:#dedede"></div><div style="position:absolute;left:2171px;top:175.5px;width:1px;height:1071px;background:#e6e6e6"></div><svg style="position:absolute;left:2175px;top:179.3px" width="13" height="13"><rect x="0.500" y="0.500" width="12" height="12" rx="1.500" fill="#fff" stroke="#9a9a9a"/><path d="M3.500 6.5H9.5" stroke="#555" stroke-width="1"/></svg><span style="position:absolute;left:2194.5px;top:178.5px;line-height:16px;font-size:12px;color:#2b2b2b;white-space:nowrap;">墙</span><div style="position:absolute;left:2181px;top:192.5px;width:1px;height:4.5px;background:#dcdcdc"></div><div style="position:absolute;left:2181px;top:197.0px;width:1px;height:21px;background:#dcdcdc"></div><div style="position:absolute;left:2182px;top:207.5px;width:14px;height:1px;background:#d8d8d8"></div><span style="position:absolute;left:2204px;top:199.5px;line-height:16px;font-size:12px;color:#2b2b2b;white-space:nowrap;">剪力墙</span><div style="position:absolute;left:2181px;top:218.0px;width:1px;height:21px;background:#dcdcdc"></div><div style="position:absolute;left:2182px;top:228.5px;width:14px;height:1px;background:#d8d8d8"></div><span style="position:absolute;left:2204px;top:220.5px;line-height:16px;font-size:12px;color:#2b2b2b;white-space:nowrap;">人防门框墙</span><div style="position:absolute;left:2181px;top:239.0px;width:1px;height:21px;background:#dcdcdc"></div><div style="position:absolute;left:2182px;top:249.5px;width:14px;height:1px;background:#d8d8d8"></div><span style="position:absolute;left:2204px;top:241.5px;line-height:16px;font-size:12px;color:#2b2b2b;white-space:nowrap;">砌体墙</span><div style="position:absolute;left:2181px;top:260.0px;width:1px;height:21px;background:#dcdcdc"></div><div style="position:absolute;left:2182px;top:270.5px;width:14px;height:1px;background:#d8d8d8"></div><span style="position:absolute;left:2204px;top:262.5px;line-height:16px;font-size:12px;color:#2b2b2b;white-space:nowrap;">砌体加筋</span><div style="position:absolute;left:2181px;top:281.0px;width:1px;height:21px;background:#dcdcdc"></div><div style="position:absolute;left:2182px;top:291.5px;width:14px;height:1px;background:#d8d8d8"></div><span style="position:absolute;left:2204px;top:283.5px;line-height:16px;font-size:12px;color:#2b2b2b;white-space:nowrap;">保温墙</span><div style="position:absolute;left:2181px;top:302.0px;width:1px;height:21px;background:#dcdcdc"></div><div style="position:absolute;left:2182px;top:312.5px;width:14px;height:1px;background:#d8d8d8"></div><span style="position:absolute;left:2204px;top:304.5px;line-height:16px;font-size:12px;color:#2b2b2b;white-space:nowrap;">暗梁</span><div style="position:absolute;left:2181px;top:323.0px;width:1px;height:21px;background:#dcdcdc"></div><div style="position:absolute;left:2182px;top:333.5px;width:14px;height:1px;background:#d8d8d8"></div><span style="position:absolute;left:2204px;top:325.5px;line-height:16px;font-size:12px;color:#2b2b2b;white-space:nowrap;">墙垛</span><div style="position:absolute;left:2181px;top:344.0px;width:1px;height:10.5px;background:#dcdcdc"></div><div style="position:absolute;left:2182px;top:354.5px;width:14px;height:1px;background:#d8d8d8"></div><span style="position:absolute;left:2204px;top:346.5px;line-height:16px;font-size:12px;color:#2b2b2b;white-space:nowrap;">幕墙</span><svg style="position:absolute;left:2175px;top:368.3px" width="13" height="13"><rect x="0.500" y="0.500" width="12" height="12" rx="1.500" fill="#fff" stroke="#9a9a9a"/><path d="M3.500 6.5H9.5" stroke="#555" stroke-width="1"/></svg><span style="position:absolute;left:2194.5px;top:367.5px;line-height:16px;font-size:12px;color:#2b2b2b;white-space:nowrap;">门窗洞</span><div style="position:absolute;left:2181px;top:381.5px;width:1px;height:4.5px;background:#dcdcdc"></div><div style="position:absolute;left:2181px;top:386.0px;width:1px;height:21px;background:#dcdcdc"></div><div style="position:absolute;left:2182px;top:396.5px;width:14px;height:1px;background:#d8d8d8"></div><span style="position:absolute;left:2204px;top:388.5px;line-height:16px;font-size:12px;color:#2b2b2b;white-space:nowrap;">门</span><div style="position:absolute;left:2181px;top:407.0px;width:1px;height:21px;background:#dcdcdc"></div><div style="position:absolute;left:2182px;top:417.5px;width:14px;height:1px;background:#d8d8d8"></div><span style="position:absolute;left:2204px;top:409.5px;line-height:16px;font-size:12px;color:#2b2b2b;white-space:nowrap;">窗</span><div style="position:absolute;left:2181px;top:428.0px;width:1px;height:21px;background:#dcdcdc"></div><div style="position:absolute;left:2182px;top:438.5px;width:14px;height:1px;background:#d8d8d8"></div><span style="position:absolute;left:2204px;top:430.5px;line-height:16px;font-size:12px;color:#2b2b2b;white-space:nowrap;">门联窗</span><div style="position:absolute;left:2181px;top:449.0px;width:1px;height:21px;background:#dcdcdc"></div><div style="position:absolute;left:2182px;top:459.5px;width:14px;height:1px;background:#d8d8d8"></div><span style="position:absolute;left:2204px;top:451.5px;line-height:16px;font-size:12px;color:#2b2b2b;white-space:nowrap;">墙洞</span><div style="position:absolute;left:2181px;top:470.0px;width:1px;height:21px;background:#dcdcdc"></div><div style="position:absolute;left:2182px;top:480.5px;width:14px;height:1px;background:#d8d8d8"></div><span style="position:absolute;left:2204px;top:472.5px;line-height:16px;font-size:12px;color:#2b2b2b;white-space:nowrap;">带形窗</span><div style="position:absolute;left:2181px;top:491.0px;width:1px;height:21px;background:#dcdcdc"></div><div style="position:absolute;left:2182px;top:501.5px;width:14px;height:1px;background:#d8d8d8"></div><span style="position:absolute;left:2204px;top:493.5px;line-height:16px;font-size:12px;color:#2b2b2b;white-space:nowrap;">带形洞</span><div style="position:absolute;left:2181px;top:512.0px;width:1px;height:21px;background:#dcdcdc"></div><div style="position:absolute;left:2182px;top:522.5px;width:14px;height:1px;background:#d8d8d8"></div><span style="position:absolute;left:2204px;top:514.5px;line-height:16px;font-size:12px;color:#2b2b2b;white-space:nowrap;">飘窗</span><div style="position:absolute;left:2181px;top:533.0px;width:1px;height:21px;background:#dcdcdc"></div><div style="position:absolute;left:2182px;top:543.5px;width:14px;height:1px;background:#d8d8d8"></div><span style="position:absolute;left:2204px;top:535.5px;line-height:16px;font-size:12px;color:#2b2b2b;white-space:nowrap;">老虎窗</span><div style="position:absolute;left:2181px;top:554.0px;width:1px;height:21px;background:#dcdcdc"></div><div style="position:absolute;left:2182px;top:564.5px;width:14px;height:1px;background:#d8d8d8"></div><span style="position:absolute;left:2204px;top:556.5px;line-height:16px;font-size:12px;color:#2b2b2b;white-space:nowrap;">过梁</span><div style="position:absolute;left:2181px;top:575.0px;width:1px;height:10.5px;background:#dcdcdc"></div><div style="position:absolute;left:2182px;top:585.5px;width:14px;height:1px;background:#d8d8d8"></div><span style="position:absolute;left:2204px;top:577.5px;line-height:16px;font-size:12px;color:#2b2b2b;white-space:nowrap;">壁龛</span><svg style="position:absolute;left:2175px;top:599.3px" width="13" height="13"><rect x="0.500" y="0.500" width="12" height="12" rx="1.500" fill="#fff" stroke="#9a9a9a"/><path d="M3.500 6.5H9.5" stroke="#555" stroke-width="1"/></svg><span style="position:absolute;left:2194.5px;top:598.5px;line-height:16px;font-size:12px;color:#2b2b2b;white-space:nowrap;">梁</span><div style="position:absolute;left:2181px;top:612.5px;width:1px;height:4.5px;background:#dcdcdc"></div><div style="position:absolute;left:2181px;top:617.0px;width:1px;height:21px;background:#dcdcdc"></div><div style="position:absolute;left:2182px;top:627.5px;width:14px;height:1px;background:#d8d8d8"></div><span style="position:absolute;left:2204px;top:619.5px;line-height:16px;font-size:12px;color:#2b2b2b;white-space:nowrap;">梁</span><div style="position:absolute;left:2181px;top:638.0px;width:1px;height:21px;background:#dcdcdc"></div><div style="position:absolute;left:2182px;top:648.5px;width:14px;height:1px;background:#d8d8d8"></div><span style="position:absolute;left:2204px;top:640.5px;line-height:16px;font-size:12px;color:#2b2b2b;white-space:nowrap;">连梁</span><div style="position:absolute;left:2181px;top:659.0px;width:1px;height:10.5px;background:#dcdcdc"></div><div style="position:absolute;left:2182px;top:669.5px;width:14px;height:1px;background:#d8d8d8"></div><span style="position:absolute;left:2204px;top:661.5px;line-height:16px;font-size:12px;color:#2b2b2b;white-space:nowrap;">圈梁</span><svg style="position:absolute;left:2175px;top:683.3px" width="13" height="13"><rect x="0.500" y="0.500" width="12" height="12" rx="1.500" fill="#fff" stroke="#9a9a9a"/><path d="M3.500 6.5H9.5" stroke="#555" stroke-width="1"/></svg><span style="position:absolute;left:2194.5px;top:682.5px;line-height:16px;font-size:12px;color:#2b2b2b;white-space:nowrap;">板</span><div style="position:absolute;left:2181px;top:696.5px;width:1px;height:4.5px;background:#dcdcdc"></div><div style="position:absolute;left:2181px;top:701.0px;width:1px;height:21px;background:#dcdcdc"></div><div style="position:absolute;left:2182px;top:711.5px;width:14px;height:1px;background:#d8d8d8"></div><span style="position:absolute;left:2204px;top:703.5px;line-height:16px;font-size:12px;color:#2b2b2b;white-space:nowrap;">现浇板</span><div style="position:absolute;left:2181px;top:722.0px;width:1px;height:21px;background:#dcdcdc"></div><div style="position:absolute;left:2182px;top:732.5px;width:14px;height:1px;background:#d8d8d8"></div><span style="position:absolute;left:2204px;top:724.5px;line-height:16px;font-size:12px;color:#2b2b2b;white-space:nowrap;">螺旋板</span><div style="position:absolute;left:2181px;top:743.0px;width:1px;height:21px;background:#dcdcdc"></div><div style="position:absolute;left:2182px;top:753.5px;width:14px;height:1px;background:#d8d8d8"></div><span style="position:absolute;left:2204px;top:745.5px;line-height:16px;font-size:12px;color:#2b2b2b;white-space:nowrap;">坡道</span><div style="position:absolute;left:2181px;top:764.0px;width:1px;height:21px;background:#dcdcdc"></div><div style="position:absolute;left:2182px;top:774.5px;width:14px;height:1px;background:#d8d8d8"></div><span style="position:absolute;left:2204px;top:766.5px;line-height:16px;font-size:12px;color:#2b2b2b;white-space:nowrap;">柱帽</span><div style="position:absolute;left:2181px;top:785.0px;width:1px;height:21px;background:#dcdcdc"></div><div style="position:absolute;left:2182px;top:795.5px;width:14px;height:1px;background:#d8d8d8"></div><span style="position:absolute;left:2204px;top:787.5px;line-height:16px;font-size:12px;color:#2b2b2b;white-space:nowrap;">板洞</span><div style="position:absolute;left:2181px;top:806.0px;width:1px;height:21px;background:#dcdcdc"></div><div style="position:absolute;left:2182px;top:816.5px;width:14px;height:1px;background:#d8d8d8"></div><span style="position:absolute;left:2204px;top:808.5px;line-height:16px;font-size:12px;color:#2b2b2b;white-space:nowrap;">板受力筋</span><div style="position:absolute;left:2181px;top:827.0px;width:1px;height:21px;background:#dcdcdc"></div><div style="position:absolute;left:2182px;top:837.5px;width:14px;height:1px;background:#d8d8d8"></div><span style="position:absolute;left:2204px;top:829.5px;line-height:16px;font-size:12px;color:#2b2b2b;white-space:nowrap;">板负筋</span><div style="position:absolute;left:2181px;top:848.0px;width:1px;height:21px;background:#dcdcdc"></div><div style="position:absolute;left:2182px;top:858.5px;width:14px;height:1px;background:#d8d8d8"></div><span style="position:absolute;left:2204px;top:850.5px;line-height:16px;font-size:12px;color:#2b2b2b;white-space:nowrap;">楼层板带</span><div style="position:absolute;left:2181px;top:869.0px;width:1px;height:10.5px;background:#dcdcdc"></div><div style="position:absolute;left:2182px;top:879.5px;width:14px;height:1px;background:#d8d8d8"></div><span style="position:absolute;left:2204px;top:871.5px;line-height:16px;font-size:12px;color:#2b2b2b;white-space:nowrap;">板加腋</span><svg style="position:absolute;left:2175px;top:893.3px" width="13" height="13"><rect x="0.500" y="0.500" width="12" height="12" rx="1.500" fill="#fff" stroke="#9a9a9a"/><path d="M3.500 6.5H9.5" stroke="#555" stroke-width="1"/></svg><span style="position:absolute;left:2194.5px;top:892.5px;line-height:16px;font-size:12px;color:#2b2b2b;white-space:nowrap;">装配式</span><div style="position:absolute;left:2181px;top:906.5px;width:1px;height:4.5px;background:#dcdcdc"></div><div style="position:absolute;left:2181px;top:911.0px;width:1px;height:21px;background:#dcdcdc"></div><div style="position:absolute;left:2182px;top:921.5px;width:14px;height:1px;background:#d8d8d8"></div><span style="position:absolute;left:2204px;top:913.5px;line-height:16px;font-size:12px;color:#2b2b2b;white-space:nowrap;">预制柱</span><div style="position:absolute;left:2181px;top:932.0px;width:1px;height:21px;background:#dcdcdc"></div><div style="position:absolute;left:2182px;top:942.5px;width:14px;height:1px;background:#d8d8d8"></div><span style="position:absolute;left:2204px;top:934.5px;line-height:16px;font-size:12px;color:#2b2b2b;white-space:nowrap;">预制墙</span><div style="position:absolute;left:2181px;top:953.0px;width:1px;height:21px;background:#dcdcdc"></div><div style="position:absolute;left:2182px;top:963.5px;width:14px;height:1px;background:#d8d8d8"></div><span style="position:absolute;left:2204px;top:955.5px;line-height:16px;font-size:12px;color:#2b2b2b;white-space:nowrap;">预制梁</span><div style="position:absolute;left:2181px;top:974.0px;width:1px;height:21px;background:#dcdcdc"></div><div style="position:absolute;left:2182px;top:984.5px;width:14px;height:1px;background:#d8d8d8"></div><span style="position:absolute;left:2204px;top:976.5px;line-height:16px;font-size:12px;color:#2b2b2b;white-space:nowrap;">叠合板(整厚)</span><div style="position:absolute;left:2181px;top:995.0px;width:1px;height:21px;background:#dcdcdc"></div><div style="position:absolute;left:2182px;top:1005.5px;width:14px;height:1px;background:#d8d8d8"></div><span style="position:absolute;left:2204px;top:997.5px;line-height:16px;font-size:12px;color:#2b2b2b;white-space:nowrap;">叠合板(预制底板)</span><div style="position:absolute;left:2181px;top:1016.0px;width:1px;height:21px;background:#dcdcdc"></div><div style="position:absolute;left:2182px;top:1026.5px;width:14px;height:1px;background:#d8d8d8"></div><span style="position:absolute;left:2204px;top:1018.5px;line-height:16px;font-size:12px;color:#2b2b2b;white-space:nowrap;">板缝</span><div style="position:absolute;left:2181px;top:1037.0px;width:1px;height:21px;background:#dcdcdc"></div><div style="position:absolute;left:2182px;top:1047.5px;width:14px;height:1px;background:#d8d8d8"></div><span style="position:absolute;left:2204px;top:1039.5px;line-height:16px;font-size:12px;color:#2b2b2b;white-space:nowrap;">叠合板受力筋</span><div style="position:absolute;left:2181px;top:1058.0px;width:1px;height:21px;background:#dcdcdc"></div><div style="position:absolute;left:2182px;top:1068.5px;width:14px;height:1px;background:#d8d8d8"></div><span style="position:absolute;left:2204px;top:1060.5px;line-height:16px;font-size:12px;color:#2b2b2b;white-space:nowrap;">叠合板负筋</span><div style="position:absolute;left:2181px;top:1079.0px;width:1px;height:10.5px;background:#dcdcdc"></div><div style="position:absolute;left:2182px;top:1089.5px;width:14px;height:1px;background:#d8d8d8"></div><span style="position:absolute;left:2204px;top:1081.5px;line-height:16px;font-size:12px;color:#2b2b2b;white-space:nowrap;">预制楼梯</span><svg style="position:absolute;left:2175px;top:1103.3px" width="13" height="13"><rect x="0.500" y="0.500" width="12" height="12" rx="1.500" fill="#fff" stroke="#9a9a9a"/><path d="M3.500 6.5H9.5" stroke="#555" stroke-width="1"/></svg><span style="position:absolute;left:2194.5px;top:1102.5px;line-height:16px;font-size:12px;color:#2b2b2b;white-space:nowrap;">楼梯</span><div style="position:absolute;left:2181px;top:1116.5px;width:1px;height:4.5px;background:#dcdcdc"></div><div style="position:absolute;left:2181px;top:1121.0px;width:1px;height:21px;background:#dcdcdc"></div><div style="position:absolute;left:2182px;top:1131.5px;width:14px;height:1px;background:#d8d8d8"></div><span style="position:absolute;left:2204px;top:1123.5px;line-height:16px;font-size:12px;color:#2b2b2b;white-space:nowrap;">楼梯</span><div style="position:absolute;left:2181px;top:1142.0px;width:1px;height:21px;background:#dcdcdc"></div><div style="position:absolute;left:2182px;top:1152.5px;width:14px;height:1px;background:#d8d8d8"></div><span style="position:absolute;left:2204px;top:1144.5px;line-height:16px;font-size:12px;color:#2b2b2b;white-space:nowrap;">直形梯段</span><div style="position:absolute;left:2181px;top:1163.0px;width:1px;height:21px;background:#dcdcdc"></div><div style="position:absolute;left:2182px;top:1173.5px;width:14px;height:1px;background:#d8d8d8"></div><span style="position:absolute;left:2204px;top:1165.5px;line-height:16px;font-size:12px;color:#2b2b2b;white-space:nowrap;">螺旋梯段</span><div style="position:absolute;left:2181px;top:1184.0px;width:1px;height:10.5px;background:#dcdcdc"></div><div style="position:absolute;left:2182px;top:1194.5px;width:14px;height:1px;background:#d8d8d8"></div><span style="position:absolute;left:2204px;top:1186.5px;line-height:16px;font-size:12px;color:#2b2b2b;white-space:nowrap;">楼梯井</span><svg style="position:absolute;left:2175px;top:1208.3px" width="13" height="13"><rect x="0.500" y="0.500" width="12" height="12" rx="1.500" fill="#fff" stroke="#9a9a9a"/><path d="M3.500 6.5H9.5" stroke="#555" stroke-width="1"/></svg><span style="position:absolute;left:2194.5px;top:1207.5px;line-height:16px;font-size:12px;color:#2b2b2b;white-space:nowrap;">装修</span><div style="position:absolute;left:2181px;top:1221.5px;width:1px;height:4.5px;background:#dcdcdc"></div><div style="position:absolute;left:2181px;top:1226.0px;width:1px;height:10.5px;background:#dcdcdc"></div><div style="position:absolute;left:2182px;top:1236.5px;width:14px;height:1px;background:#d8d8d8"></div><span style="position:absolute;left:2204px;top:1228.5px;line-height:16px;font-size:12px;color:#2b2b2b;white-space:nowrap;">房间</span><div style="position:absolute;left:2305.5px;top:701px;width:10px;height:21px;border:1.500px solid #555;box-sizing:border-box"></div>
<div style="position:absolute;left:1794px;top:0px;width:318px;height:1186px;background:#fff;box-shadow:0 1px 9px rgba(0,0,0,0.380);border-bottom:1px solid #222;box-sizing:border-box"></div><div style="position:absolute;left:1794px;top:0px;width:318px;height:26px;background:#3473c9"></div><span style="position:absolute;left:1803px;top:3.5px;line-height:16px;font-size:12px;color:#eef3fb;white-space:nowrap;">云检查结果</span><svg style="position:absolute;left:2092.0px;top:7.0px;overflow:visible" width="9.0" height="9.0"><path d="M0 0L9.0 9.0M9.0 0L0 9.0" stroke="#dde8f8" stroke-width="1.1"/></svg><div style="position:absolute;left:1795px;top:26px;width:315px;height:35px;background:#efefef;border-bottom:1px solid #dddddd;box-sizing:border-box"></div><div style="position:absolute;left:1900px;top:26px;width:1px;height:35px;background:#dcdcdc"></div><div style="position:absolute;left:2005px;top:26px;width:1px;height:35px;background:#dcdcdc"></div><span style="position:absolute;left:1824px;top:35.0px;line-height:16px;font-size:12px;color:#2f8fe8;white-space:nowrap;">结果列表</span><span style="position:absolute;left:1929px;top:36.0px;line-height:16px;font-size:12px;color:#2b2b2b;white-space:nowrap;">忽略列表</span><span style="position:absolute;left:2034px;top:36.0px;line-height:16px;font-size:12px;color:#2b2b2b;white-space:nowrap;">修复列表</span><svg style="position:absolute;left:1803px;top:71px" width="16" height="16" fill="none" stroke="#2b6fe0" stroke-width="1.700" stroke-linecap="round"><path d="M13 8A5.500 5.500 0 1 1 10.800 3.600"/><path d="M9.500 1V4.500H13" stroke-linejoin="round"/></svg><span style="position:absolute;left:1823px;top:71.5px;line-height:16px;font-size:12px;color:#2b2b2b;white-space:nowrap;">刷新</span><svg style="position:absolute;left:1852px;top:70px" width="18" height="18" fill="none" stroke="#2b6fe0" stroke-width="1.500" stroke-linecap="round"><path d="M8 15.500H3.500A2 2 0 0 1 1.500 13.500V3.500A2 2 0 0 1 3.500 1.500H12.500A2 2 0 0 1 14.500 3.500V8"/><path d="M4.500 6H11.500M4.500 9.500H8"/><circle cx="12" cy="12.500" r="2.600"/><path d="M14 14.500L16 16.500"/></svg><span style="position:absolute;left:1873.5px;top:71.5px;line-height:16px;font-size:12px;color:#2b2b2b;white-space:nowrap;">依据</span><svg style="position:absolute;left:1902px;top:71px" width="18" height="16" fill="none" stroke="#2b6fe0" stroke-width="1.500" stroke-linecap="round"><path d="M4.500 13.500H14A3.200 3.200 0 0 0 14.300 7.200A5.200 5.200 0 0 0 4.300 6.300A3.700 3.700 0 0 0 4.500 13.500Z"/><circle cx="9" cy="9" r="1.800"/><path d="M10.300 10.300L11.500 11.500"/></svg><span style="position:absolute;left:1923px;top:71.5px;line-height:16px;font-size:12px;color:#2b2b2b;white-space:nowrap;">重新检查</span><span style="position:absolute;left:2007px;top:71.5px;line-height:16px;font-size:12px;color:#2b2b2b;white-space:nowrap;">导出</span><div style="position:absolute;left:1799px;top:93.5px;width:308px;height:757px;border:1px solid #d6d6d6;box-sizing:border-box;background:#fff"></div><div style="position:absolute;left:1800px;top:114.0px;width:306px;height:1px;background:#d6d6d6"></div><svg style="position:absolute;left:1801px;top:97.0px" width="13" height="13"><rect x="0.500" y="0.500" width="12" height="12" rx="1.500" fill="#fff" stroke="#9a9a9a"/><path d="M3.500 6.5H9.5" stroke="#555" stroke-width="1"/></svg><span style="position:absolute;left:1820px;top:96.5px;line-height:16px;font-size:12px;color:#2b2b2b;white-space:nowrap;letter-spacing:0.120px">确定错误:<span style="display:inline-block;width:8.700px"></span>14类</span><svg style="position:absolute;left:2089px;top:96px" width="15" height="15"><path d="M6 11.700H3.400A1.500 1.500 0 0 1 1.900 10.200V2.800A1.500 1.500 0 0 1 3.400 1.300H9L12.300 4.600V6.500M9 1.300V4.600H12.300" stroke="#1a6be0" stroke-width="1.400" fill="none" stroke-linejoin="round"/><circle cx="10.200" cy="9.900" r="4" fill="#1a6be0"/><path d="M7.700 9.900H12.700" stroke="#fff" stroke-width="1.300"/></svg><div style="position:absolute;left:1800px;top:115.0px;width:306px;height:20.5px;background:#e9e7e3"></div><div style="position:absolute;left:1800px;top:135.0px;width:306px;height:1px;background:#d6d6d6"></div><div style="position:absolute;left:1806.5px;top:114.5px;width:1px;height:21px;background:#dcdcdc"></div><svg style="position:absolute;left:1811px;top:118.0px" width="13" height="13"><rect x="0.500" y="0.500" width="12" height="12" rx="1.500" fill="#fff" stroke="#9a9a9a"/><path d="M3.500 6.5H9.5M6.5 3.500V9.5" stroke="#555" stroke-width="1"/></svg><span style="position:absolute;left:1830px;top:117.5px;line-height:16px;font-size:12px;color:#2b2b2b;white-space:nowrap;letter-spacing:0.120px">板（筏板）未布置钢筋（共4条）</span><svg style="position:absolute;left:2089px;top:117px" width="15" height="15"><path d="M6 11.700H3.400A1.500 1.500 0 0 1 1.900 10.200V2.800A1.500 1.500 0 0 1 3.400 1.300H9L12.300 4.600V6.500M9 1.300V4.600H12.300" stroke="#1a6be0" stroke-width="1.400" fill="none" stroke-linejoin="round"/><circle cx="10.200" cy="9.900" r="4" fill="#1a6be0"/><path d="M7.700 9.900H12.700" stroke="#fff" stroke-width="1.300"/></svg><div style="position:absolute;left:1800px;top:156.0px;width:306px;height:1px;background:#d6d6d6"></div><div style="position:absolute;left:1806.5px;top:135.5px;width:1px;height:21px;background:#dcdcdc"></div><svg style="position:absolute;left:1811px;top:139.0px" width="13" height="13"><rect x="0.500" y="0.500" width="12" height="12" rx="1.500" fill="#fff" stroke="#9a9a9a"/><path d="M3.500 6.5H9.5M6.5 3.500V9.5" stroke="#555" stroke-width="1"/></svg><span style="position:absolute;left:1830px;top:138.5px;line-height:16px;font-size:12px;color:#2b2b2b;white-space:nowrap;letter-spacing:0.120px">梁未按规范设置腰筋（共57条）</span><svg style="position:absolute;left:2089px;top:138px" width="15" height="15"><path d="M6 11.700H3.400A1.500 1.500 0 0 1 1.900 10.200V2.800A1.500 1.500 0 0 1 3.400 1.300H9L12.300 4.600V6.500M9 1.300V4.600H12.300" stroke="#1a6be0" stroke-width="1.400" fill="none" stroke-linejoin="round"/><circle cx="10.200" cy="9.900" r="4" fill="#1a6be0"/><path d="M7.700 9.900H12.700" stroke="#fff" stroke-width="1.300"/></svg><div style="position:absolute;left:1800px;top:157.0px;width:306px;height:20.5px;background:#e9e7e3"></div><div style="position:absolute;left:1800px;top:177.0px;width:306px;height:1px;background:#d6d6d6"></div><div style="position:absolute;left:1806.5px;top:156.5px;width:1px;height:21px;background:#dcdcdc"></div><svg style="position:absolute;left:1811px;top:160.0px" width="13" height="13"><rect x="0.500" y="0.500" width="12" height="12" rx="1.500" fill="#fff" stroke="#9a9a9a"/><path d="M3.500 6.5H9.5M6.5 3.500V9.5" stroke="#555" stroke-width="1"/></svg><span style="position:absolute;left:1830px;top:159.5px;line-height:16px;font-size:12px;color:#2b2b2b;white-space:nowrap;letter-spacing:0.120px">构件未配筋（共8条）</span><svg style="position:absolute;left:2089px;top:159px" width="15" height="15"><path d="M6 11.700H3.400A1.500 1.500 0 0 1 1.900 10.200V2.800A1.500 1.500 0 0 1 3.400 1.300H9L12.300 4.600V6.500M9 1.300V4.600H12.300" stroke="#1a6be0" stroke-width="1.400" fill="none" stroke-linejoin="round"/><circle cx="10.200" cy="9.900" r="4" fill="#1a6be0"/><path d="M7.700 9.900H12.700" stroke="#fff" stroke-width="1.300"/></svg><div style="position:absolute;left:1800px;top:198.0px;width:306px;height:1px;background:#d6d6d6"></div><div style="position:absolute;left:1806.5px;top:177.5px;width:1px;height:21px;background:#dcdcdc"></div><svg style="position:absolute;left:1811px;top:181.0px" width="13" height="13"><rect x="0.500" y="0.500" width="12" height="12" rx="1.500" fill="#fff" stroke="#9a9a9a"/><path d="M3.500 6.5H9.5M6.5 3.500V9.5" stroke="#555" stroke-width="1"/></svg><span style="position:absolute;left:1830px;top:180.5px;line-height:16px;font-size:12px;color:#2b2b2b;white-space:nowrap;letter-spacing:0.120px">上下层高度不连续（共3条）</span><svg style="position:absolute;left:2089px;top:180px" width="15" height="15"><path d="M6 11.700H3.400A1.500 1.500 0 0 1 1.900 10.200V2.800A1.500 1.500 0 0 1 3.400 1.300H9L12.300 4.600V6.500M9 1.300V4.600H12.300" stroke="#1a6be0" stroke-width="1.400" fill="none" stroke-linejoin="round"/><circle cx="10.200" cy="9.900" r="4" fill="#1a6be0"/><path d="M7.700 9.900H12.700" stroke="#fff" stroke-width="1.300"/></svg><div style="position:absolute;left:1800px;top:199.0px;width:306px;height:20.5px;background:#e9e7e3"></div><div style="position:absolute;left:1800px;top:219.0px;width:306px;height:1px;background:#d6d6d6"></div><div style="position:absolute;left:1806.5px;top:198.5px;width:1px;height:21px;background:#dcdcdc"></div><svg style="position:absolute;left:1811px;top:202.0px" width="13" height="13"><rect x="0.500" y="0.500" width="12" height="12" rx="1.500" fill="#fff" stroke="#9a9a9a"/><path d="M3.500 6.5H9.5M6.5 3.500V9.5" stroke="#555" stroke-width="1"/></svg><span style="position:absolute;left:1830px;top:201.5px;line-height:16px;font-size:12px;color:#2b2b2b;white-space:nowrap;letter-spacing:0.120px">吊筋或附加箍筋检查（共1条）</span><svg style="position:absolute;left:2089px;top:201px" width="15" height="15"><path d="M6 11.700H3.400A1.500 1.500 0 0 1 1.900 10.200V2.800A1.500 1.500 0 0 1 3.400 1.300H9L12.300 4.600V6.500M9 1.300V4.600H12.300" stroke="#1a6be0" stroke-width="1.400" fill="none" stroke-linejoin="round"/><circle cx="10.200" cy="9.900" r="4" fill="#1a6be0"/><path d="M7.700 9.900H12.700" stroke="#fff" stroke-width="1.300"/></svg><div style="position:absolute;left:1800px;top:240.0px;width:306px;height:1px;background:#d6d6d6"></div><div style="position:absolute;left:1806.5px;top:219.5px;width:1px;height:21px;background:#dcdcdc"></div><svg style="position:absolute;left:1811px;top:223.0px" width="13" height="13"><rect x="0.500" y="0.500" width="12" height="12" rx="1.500" fill="#fff" stroke="#9a9a9a"/><path d="M3.500 6.5H9.5M6.5 3.500V9.5" stroke="#555" stroke-width="1"/></svg><span style="position:absolute;left:1830px;top:222.5px;line-height:16px;font-size:12px;color:#2b2b2b;white-space:nowrap;letter-spacing:0.120px">梁跨中钢筋与支座筋数量矛盾（共6条）</span><svg style="position:absolute;left:2089px;top:222px" width="15" height="15"><path d="M6 11.700H3.400A1.500 1.500 0 0 1 1.900 10.200V2.800A1.500 1.500 0 0 1 3.400 1.300H9L12.300 4.600V6.500M9 1.300V4.600H12.300" stroke="#1a6be0" stroke-width="1.400" fill="none" stroke-linejoin="round"/><circle cx="10.200" cy="9.900" r="4" fill="#1a6be0"/><path d="M7.700 9.900H12.700" stroke="#fff" stroke-width="1.300"/></svg><div style="position:absolute;left:1800px;top:241.0px;width:306px;height:20.5px;background:#e9e7e3"></div><div style="position:absolute;left:1800px;top:261.0px;width:306px;height:1px;background:#d6d6d6"></div><div style="position:absolute;left:1806.5px;top:240.5px;width:1px;height:21px;background:#dcdcdc"></div><svg style="position:absolute;left:1811px;top:244.0px" width="13" height="13"><rect x="0.500" y="0.500" width="12" height="12" rx="1.500" fill="#fff" stroke="#9a9a9a"/><path d="M3.500 6.5H9.5M6.5 3.500V9.5" stroke="#555" stroke-width="1"/></svg><span style="position:absolute;left:1830px;top:243.5px;line-height:16px;font-size:12px;color:#2b2b2b;white-space:nowrap;letter-spacing:0.120px">梁跨中钢筋数量与箍筋肢数矛盾（共2...</span><svg style="position:absolute;left:2089px;top:243px" width="15" height="15"><path d="M6 11.700H3.400A1.500 1.500 0 0 1 1.900 10.200V2.800A1.500 1.500 0 0 1 3.400 1.300H9L12.300 4.600V6.500M9 1.300V4.600H12.300" stroke="#1a6be0" stroke-width="1.400" fill="none" stroke-linejoin="round"/><circle cx="10.200" cy="9.900" r="4" fill="#1a6be0"/><path d="M7.700 9.900H12.700" stroke="#fff" stroke-width="1.300"/></svg><div style="position:absolute;left:1800px;top:282.0px;width:306px;height:1px;background:#d6d6d6"></div><div style="position:absolute;left:1806.5px;top:261.5px;width:1px;height:21px;background:#dcdcdc"></div><svg style="position:absolute;left:1811px;top:265.0px" width="13" height="13"><rect x="0.500" y="0.500" width="12" height="12" rx="1.500" fill="#fff" stroke="#9a9a9a"/><path d="M3.500 6.5H9.5" stroke="#555" stroke-width="1"/></svg><span style="position:absolute;left:1830px;top:264.5px;line-height:16px;font-size:12px;color:#2b2b2b;white-space:nowrap;letter-spacing:0.120px">梁上部钢筋布置过密（共24条）</span><svg style="position:absolute;left:2089px;top:264px" width="15" height="15"><path d="M6 11.700H3.400A1.500 1.500 0 0 1 1.900 10.200V2.800A1.500 1.500 0 0 1 3.400 1.300H9L12.300 4.600V6.500M9 1.300V4.600H12.300" stroke="#1a6be0" stroke-width="1.400" fill="none" stroke-linejoin="round"/><circle cx="10.200" cy="9.900" r="4" fill="#1a6be0"/><path d="M7.700 9.900H12.700" stroke="#fff" stroke-width="1.300"/></svg><div style="position:absolute;left:1800px;top:283.0px;width:306px;height:20.5px;background:#e9e7e3"></div><div style="position:absolute;left:1800px;top:303.0px;width:306px;height:1px;background:#d6d6d6"></div><div style="position:absolute;left:1806.5px;top:282.5px;width:1px;height:21px;background:#dcdcdc"></div><svg style="position:absolute;left:1821px;top:286.0px" width="13" height="13"><rect x="0.500" y="0.500" width="12" height="12" rx="1.500" fill="#fff" stroke="#9a9a9a"/><path d="M3.500 6.5H9.5M6.5 3.500V9.5" stroke="#555" stroke-width="1"/></svg><span style="position:absolute;left:1840px;top:285.5px;line-height:16px;font-size:12px;color:#2b2b2b;white-space:nowrap;letter-spacing:0.120px">第-1层（共24条）</span><svg style="position:absolute;left:2089px;top:285px" width="15" height="15"><path d="M6 11.700H3.400A1.500 1.500 0 0 1 1.900 10.200V2.800A1.500 1.500 0 0 1 3.400 1.300H9L12.300 4.600V6.500M9 1.300V4.600H12.300" stroke="#1a6be0" stroke-width="1.400" fill="none" stroke-linejoin="round"/><circle cx="10.200" cy="9.900" r="4" fill="#1a6be0"/><path d="M7.700 9.900H12.700" stroke="#fff" stroke-width="1.300"/></svg><div style="position:absolute;left:1800px;top:324.0px;width:306px;height:1px;background:#d6d6d6"></div><div style="position:absolute;left:1806.5px;top:303.5px;width:1px;height:21px;background:#dcdcdc"></div><svg style="position:absolute;left:1811px;top:307.0px" width="13" height="13"><rect x="0.500" y="0.500" width="12" height="12" rx="1.500" fill="#fff" stroke="#9a9a9a"/><path d="M3.500 6.5H9.5" stroke="#555" stroke-width="1"/></svg><span style="position:absolute;left:1830px;top:306.5px;line-height:16px;font-size:12px;color:#2b2b2b;white-space:nowrap;letter-spacing:0.120px">梁下部钢筋布置过密（共1条）</span><svg style="position:absolute;left:2089px;top:306px" width="15" height="15"><path d="M6 11.700H3.400A1.500 1.500 0 0 1 1.900 10.200V2.800A1.500 1.500 0 0 1 3.400 1.300H9L12.300 4.600V6.500M9 1.300V4.600H12.300" stroke="#1a6be0" stroke-width="1.400" fill="none" stroke-linejoin="round"/><circle cx="10.200" cy="9.900" r="4" fill="#1a6be0"/><path d="M7.700 9.900H12.700" stroke="#fff" stroke-width="1.300"/></svg><div style="position:absolute;left:1800px;top:325.0px;width:306px;height:20.5px;background:#e9e7e3"></div><div style="position:absolute;left:1800px;top:345.0px;width:306px;height:1px;background:#d6d6d6"></div><div style="position:absolute;left:1806.5px;top:324.5px;width:1px;height:21px;background:#dcdcdc"></div><svg style="position:absolute;left:1821px;top:328.0px" width="13" height="13"><rect x="0.500" y="0.500" width="12" height="12" rx="1.500" fill="#fff" stroke="#9a9a9a"/><path d="M3.500 6.5H9.5" stroke="#555" stroke-width="1"/></svg><span style="position:absolute;left:1840px;top:327.5px;line-height:16px;font-size:12px;color:#2b2b2b;white-space:nowrap;letter-spacing:0.120px">第-1层（共1条）</span><svg style="position:absolute;left:2089px;top:327px" width="15" height="15"><path d="M6 11.700H3.400A1.500 1.500 0 0 1 1.900 10.200V2.800A1.500 1.500 0 0 1 3.400 1.300H9L12.300 4.600V6.500M9 1.300V4.600H12.300" stroke="#1a6be0" stroke-width="1.400" fill="none" stroke-linejoin="round"/><circle cx="10.200" cy="9.900" r="4" fill="#1a6be0"/><path d="M7.700 9.900H12.700" stroke="#fff" stroke-width="1.300"/></svg><div style="position:absolute;left:1800px;top:366.0px;width:306px;height:1px;background:#d6d6d6"></div><div style="position:absolute;left:1806.5px;top:345.5px;width:1px;height:21px;background:#dcdcdc"></div><div style="position:absolute;left:1827px;top:345.5px;width:1px;height:10.5px;background:#d4d4d4"></div><div style="position:absolute;left:1827px;top:356.0px;width:16px;height:1px;background:#d4d4d4"></div><span style="position:absolute;left:1850px;top:348.5px;line-height:16px;font-size:12px;color:#2b2b2b;white-space:nowrap;letter-spacing:0.120px">梁 KL15(2)（ID:<span style="display:inline-block;width:8.700px"></span>23519）【下通...</span><svg style="position:absolute;left:2051px;top:348px" width="14" height="14" viewBox="-0.5 -0.5 14 14"><circle cx="7" cy="7" r="3.900" stroke="#1a6be0" stroke-width="1.100" fill="none"/><path d="M7 5.400L8.600 7L7 8.600L5.400 7Z" fill="#1a6be0"/><path d="M7 0.500V3M7 11V13.500M0.500 7H3M11 7H13.500" stroke="#1a6be0" stroke-width="1.100"/></svg><svg style="position:absolute;left:2089px;top:348px" width="15" height="15"><path d="M6 11.700H3.400A1.500 1.500 0 0 1 1.900 10.200V2.800A1.500 1.500 0 0 1 3.400 1.300H9L12.300 4.600V6.500M9 1.300V4.600H12.300" stroke="#1a6be0" stroke-width="1.400" fill="none" stroke-linejoin="round"/><circle cx="10.200" cy="9.900" r="4" fill="#1a6be0"/><path d="M7.700 9.900H12.700" stroke="#fff" stroke-width="1.300"/></svg><div style="position:absolute;left:1800px;top:367.0px;width:306px;height:20.5px;background:#e9e7e3"></div><div style="position:absolute;left:1800px;top:387.0px;width:306px;height:1px;background:#d6d6d6"></div><div style="position:absolute;left:1806.5px;top:366.5px;width:1px;height:21px;background:#dcdcdc"></div><svg style="position:absolute;left:1811px;top:370.0px" width="13" height="13"><rect x="0.500" y="0.500" width="12" height="12" rx="1.500" fill="#fff" stroke="#9a9a9a"/><path d="M3.500 6.5H9.5" stroke="#555" stroke-width="1"/></svg><span style="position:absolute;left:1830px;top:369.5px;line-height:16px;font-size:12px;color:#2b2b2b;white-space:nowrap;letter-spacing:0.120px">梁跨标高设置不连续（共1条）</span><svg style="position:absolute;left:2089px;top:369px" width="15" height="15"><path d="M6 11.700H3.400A1.500 1.500 0 0 1 1.900 10.200V2.800A1.500 1.500 0 0 1 3.400 1.300H9L12.300 4.600V6.500M9 1.300V4.600H12.300" stroke="#1a6be0" stroke-width="1.400" fill="none" stroke-linejoin="round"/><circle cx="10.200" cy="9.900" r="4" fill="#1a6be0"/><path d="M7.700 9.900H12.700" stroke="#fff" stroke-width="1.300"/></svg><div style="position:absolute;left:1800px;top:408.0px;width:306px;height:1px;background:#d6d6d6"></div><div style="position:absolute;left:1806.5px;top:387.5px;width:1px;height:21px;background:#dcdcdc"></div><svg style="position:absolute;left:1821px;top:391.0px" width="13" height="13"><rect x="0.500" y="0.500" width="12" height="12" rx="1.500" fill="#fff" stroke="#9a9a9a"/><path d="M3.500 6.5H9.5" stroke="#555" stroke-width="1"/></svg><span style="position:absolute;left:1840px;top:390.5px;line-height:16px;font-size:12px;color:#2b2b2b;white-space:nowrap;letter-spacing:0.120px">第-1层（共1条）</span><svg style="position:absolute;left:2089px;top:390px" width="15" height="15"><path d="M6 11.700H3.400A1.500 1.500 0 0 1 1.900 10.200V2.800A1.500 1.500 0 0 1 3.400 1.300H9L12.300 4.600V6.500M9 1.300V4.600H12.300" stroke="#1a6be0" stroke-width="1.400" fill="none" stroke-linejoin="round"/><circle cx="10.200" cy="9.900" r="4" fill="#1a6be0"/><path d="M7.700 9.900H12.700" stroke="#fff" stroke-width="1.300"/></svg><div style="position:absolute;left:1800px;top:409.0px;width:306px;height:20.5px;background:#e9e7e3"></div><div style="position:absolute;left:1800px;top:429.0px;width:306px;height:1px;background:#d6d6d6"></div><div style="position:absolute;left:1806.5px;top:408.5px;width:1px;height:21px;background:#dcdcdc"></div><div style="position:absolute;left:1827px;top:408.5px;width:1px;height:10.5px;background:#d4d4d4"></div><div style="position:absolute;left:1827px;top:419.0px;width:16px;height:1px;background:#d4d4d4"></div><span style="position:absolute;left:1850px;top:411.5px;line-height:16px;font-size:12px;color:#2b2b2b;white-space:nowrap;letter-spacing:0.120px">梁 KL19(3)（ID:<span style="display:inline-block;width:8.700px"></span>23502）第【1...</span><svg style="position:absolute;left:2051px;top:411px" width="14" height="14" viewBox="-0.5 -0.5 14 14"><circle cx="7" cy="7" r="3.900" stroke="#1a6be0" stroke-width="1.100" fill="none"/><path d="M7 5.400L8.600 7L7 8.600L5.400 7Z" fill="#1a6be0"/><path d="M7 0.500V3M7 11V13.500M0.500 7H3M11 7H13.500" stroke="#1a6be0" stroke-width="1.100"/></svg><svg style="position:absolute;left:2089px;top:411px" width="15" height="15"><path d="M6 11.700H3.400A1.500 1.500 0 0 1 1.900 10.200V2.800A1.500 1.500 0 0 1 3.400 1.300H9L12.300 4.600V6.500M9 1.300V4.600H12.300" stroke="#1a6be0" stroke-width="1.400" fill="none" stroke-linejoin="round"/><circle cx="10.200" cy="9.900" r="4" fill="#1a6be0"/><path d="M7.700 9.900H12.700" stroke="#fff" stroke-width="1.300"/></svg><div style="position:absolute;left:1800px;top:450.0px;width:306px;height:1px;background:#d6d6d6"></div><div style="position:absolute;left:1806.5px;top:429.5px;width:1px;height:21px;background:#dcdcdc"></div><svg style="position:absolute;left:1811px;top:433.0px" width="13" height="13"><rect x="0.500" y="0.500" width="12" height="12" rx="1.500" fill="#fff" stroke="#9a9a9a"/><path d="M3.500 6.5H9.5" stroke="#555" stroke-width="1"/></svg><span style="position:absolute;left:1830px;top:432.5px;line-height:16px;font-size:12px;color:#2b2b2b;white-space:nowrap;letter-spacing:0.120px">框支梁类型设置错误（共4条）</span><svg style="position:absolute;left:2089px;top:432px" width="15" height="15"><path d="M6 11.700H3.400A1.500 1.500 0 0 1 1.900 10.200V2.800A1.500 1.500 0 0 1 3.400 1.300H9L12.300 4.600V6.500M9 1.300V4.600H12.300" stroke="#1a6be0" stroke-width="1.400" fill="none" stroke-linejoin="round"/><circle cx="10.200" cy="9.900" r="4" fill="#1a6be0"/><path d="M7.700 9.900H12.700" stroke="#fff" stroke-width="1.300"/></svg><div style="position:absolute;left:1800px;top:451.0px;width:306px;height:20.5px;background:#e9e7e3"></div><div style="position:absolute;left:1800px;top:471.0px;width:306px;height:1px;background:#d6d6d6"></div><div style="position:absolute;left:1806.5px;top:450.5px;width:1px;height:21px;background:#dcdcdc"></div><svg style="position:absolute;left:1821px;top:454.0px" width="13" height="13"><rect x="0.500" y="0.500" width="12" height="12" rx="1.500" fill="#fff" stroke="#9a9a9a"/><path d="M3.500 6.5H9.5" stroke="#555" stroke-width="1"/></svg><span style="position:absolute;left:1840px;top:453.5px;line-height:16px;font-size:12px;color:#2b2b2b;white-space:nowrap;letter-spacing:0.120px">第-1层（共4条）</span><svg style="position:absolute;left:2089px;top:453px" width="15" height="15"><path d="M6 11.700H3.400A1.500 1.500 0 0 1 1.900 10.200V2.800A1.500 1.500 0 0 1 3.400 1.300H9L12.300 4.600V6.500M9 1.300V4.600H12.300" stroke="#1a6be0" stroke-width="1.400" fill="none" stroke-linejoin="round"/><circle cx="10.200" cy="9.900" r="4" fill="#1a6be0"/><path d="M7.700 9.900H12.700" stroke="#fff" stroke-width="1.300"/></svg><div style="position:absolute;left:1800px;top:492.0px;width:306px;height:1px;background:#d6d6d6"></div><div style="position:absolute;left:1806.5px;top:471.5px;width:1px;height:21px;background:#dcdcdc"></div><div style="position:absolute;left:1827px;top:471.5px;width:1px;height:21px;background:#d4d4d4"></div><div style="position:absolute;left:1827px;top:482.0px;width:16px;height:1px;background:#d4d4d4"></div><span style="position:absolute;left:1850px;top:474.5px;line-height:16px;font-size:12px;color:#2f8fe8;white-space:nowrap;letter-spacing:0.120px">梁 KZL1(1A)（ID:<span style="display:inline-block;width:8.700px"></span>25538）</span><svg style="position:absolute;left:2051px;top:474px" width="14" height="14" viewBox="-0.5 -0.5 14 14"><circle cx="7" cy="7" r="3.900" stroke="#1a6be0" stroke-width="1.100" fill="none"/><path d="M7 5.400L8.600 7L7 8.600L5.400 7Z" fill="#1a6be0"/><path d="M7 0.500V3M7 11V13.500M0.500 7H3M11 7H13.500" stroke="#1a6be0" stroke-width="1.100"/></svg><svg style="position:absolute;left:2089px;top:474px" width="15" height="15"><path d="M6 11.700H3.400A1.500 1.500 0 0 1 1.900 10.200V2.800A1.500 1.500 0 0 1 3.400 1.300H9L12.300 4.600V6.500M9 1.300V4.600H12.300" stroke="#1a6be0" stroke-width="1.400" fill="none" stroke-linejoin="round"/><circle cx="10.200" cy="9.900" r="4" fill="#1a6be0"/><path d="M7.700 9.900H12.700" stroke="#fff" stroke-width="1.300"/></svg><div style="position:absolute;left:1800px;top:493.0px;width:306px;height:20.5px;background:#e9e7e3"></div><div style="position:absolute;left:1800px;top:513.0px;width:306px;height:1px;background:#d6d6d6"></div><div style="position:absolute;left:1806.5px;top:492.5px;width:1px;height:21px;background:#dcdcdc"></div><div style="position:absolute;left:1827px;top:492.5px;width:1px;height:21px;background:#d4d4d4"></div><div style="position:absolute;left:1827px;top:503.0px;width:16px;height:1px;background:#d4d4d4"></div><span style="position:absolute;left:1850px;top:495.5px;line-height:16px;font-size:12px;color:#2b2b2b;white-space:nowrap;letter-spacing:0.120px">梁 KZL10（ID:<span style="display:inline-block;width:8.700px"></span>32437）</span><svg style="position:absolute;left:2051px;top:495px" width="14" height="14" viewBox="-0.5 -0.5 14 14"><circle cx="7" cy="7" r="3.900" stroke="#1a6be0" stroke-width="1.100" fill="none"/><path d="M7 5.400L8.600 7L7 8.600L5.400 7Z" fill="#1a6be0"/><path d="M7 0.500V3M7 11V13.500M0.500 7H3M11 7H13.500" stroke="#1a6be0" stroke-width="1.100"/></svg><svg style="position:absolute;left:2089px;top:495px" width="15" height="15"><path d="M6 11.700H3.400A1.500 1.500 0 0 1 1.900 10.200V2.800A1.500 1.500 0 0 1 3.400 1.300H9L12.300 4.600V6.500M9 1.300V4.600H12.300" stroke="#1a6be0" stroke-width="1.400" fill="none" stroke-linejoin="round"/><circle cx="10.200" cy="9.900" r="4" fill="#1a6be0"/><path d="M7.700 9.900H12.700" stroke="#fff" stroke-width="1.300"/></svg><div style="position:absolute;left:1800px;top:534.0px;width:306px;height:1px;background:#d6d6d6"></div><div style="position:absolute;left:1806.5px;top:513.5px;width:1px;height:21px;background:#dcdcdc"></div><div style="position:absolute;left:1827px;top:513.5px;width:1px;height:21px;background:#d4d4d4"></div><div style="position:absolute;left:1827px;top:524.0px;width:16px;height:1px;background:#d4d4d4"></div><span style="position:absolute;left:1850px;top:516.5px;line-height:16px;font-size:12px;color:#2b2b2b;white-space:nowrap;letter-spacing:0.120px">梁 KZL12（ID:<span style="display:inline-block;width:8.700px"></span>32451）</span><svg style="position:absolute;left:2051px;top:516px" width="14" height="14" viewBox="-0.5 -0.5 14 14"><circle cx="7" cy="7" r="3.900" stroke="#1a6be0" stroke-width="1.100" fill="none"/><path d="M7 5.400L8.600 7L7 8.600L5.400 7Z" fill="#1a6be0"/><path d="M7 0.500V3M7 11V13.500M0.500 7H3M11 7H13.500" stroke="#1a6be0" stroke-width="1.100"/></svg><svg style="position:absolute;left:2089px;top:516px" width="15" height="15"><path d="M6 11.700H3.400A1.500 1.500 0 0 1 1.900 10.200V2.800A1.500 1.500 0 0 1 3.400 1.300H9L12.300 4.600V6.500M9 1.300V4.600H12.300" stroke="#1a6be0" stroke-width="1.400" fill="none" stroke-linejoin="round"/><circle cx="10.200" cy="9.900" r="4" fill="#1a6be0"/><path d="M7.700 9.900H12.700" stroke="#fff" stroke-width="1.300"/></svg><div style="position:absolute;left:1800px;top:535.0px;width:306px;height:20.5px;background:#e9e7e3"></div><div style="position:absolute;left:1800px;top:555.0px;width:306px;height:1px;background:#d6d6d6"></div><div style="position:absolute;left:1806.5px;top:534.5px;width:1px;height:21px;background:#dcdcdc"></div><div style="position:absolute;left:1827px;top:534.5px;width:1px;height:10.5px;background:#d4d4d4"></div><div style="position:absolute;left:1827px;top:545.0px;width:16px;height:1px;background:#d4d4d4"></div><span style="position:absolute;left:1850px;top:537.5px;line-height:16px;font-size:12px;color:#2b2b2b;white-space:nowrap;letter-spacing:0.120px">梁 (KZL（ID:<span style="display:inline-block;width:8.700px"></span>32524）</span><svg style="position:absolute;left:2051px;top:537px" width="14" height="14" viewBox="-0.5 -0.5 14 14"><circle cx="7" cy="7" r="3.900" stroke="#1a6be0" stroke-width="1.100" fill="none"/><path d="M7 5.400L8.600 7L7 8.600L5.400 7Z" fill="#1a6be0"/><path d="M7 0.500V3M7 11V13.500M0.500 7H3M11 7H13.500" stroke="#1a6be0" stroke-width="1.100"/></svg><svg style="position:absolute;left:2089px;top:537px" width="15" height="15"><path d="M6 11.700H3.400A1.500 1.500 0 0 1 1.900 10.200V2.800A1.500 1.500 0 0 1 3.400 1.300H9L12.300 4.600V6.500M9 1.300V4.600H12.300" stroke="#1a6be0" stroke-width="1.400" fill="none" stroke-linejoin="round"/><circle cx="10.200" cy="9.900" r="4" fill="#1a6be0"/><path d="M7.700 9.900H12.700" stroke="#fff" stroke-width="1.300"/></svg><div style="position:absolute;left:1800px;top:576.0px;width:306px;height:1px;background:#d6d6d6"></div><div style="position:absolute;left:1806.5px;top:555.5px;width:1px;height:21px;background:#dcdcdc"></div><svg style="position:absolute;left:1811px;top:559.0px" width="13" height="13"><rect x="0.500" y="0.500" width="12" height="12" rx="1.500" fill="#fff" stroke="#9a9a9a"/><path d="M3.500 6.5H9.5M6.5 3.500V9.5" stroke="#555" stroke-width="1"/></svg><span style="position:absolute;left:1830px;top:558.5px;line-height:16px;font-size:12px;color:#2b2b2b;white-space:nowrap;letter-spacing:0.120px">基础上方无相接构件（共11条）</span><svg style="position:absolute;left:2089px;top:558px" width="15" height="15"><path d="M6 11.700H3.400A1.500 1.500 0 0 1 1.900 10.200V2.800A1.500 1.500 0 0 1 3.400 1.300H9L12.300 4.600V6.500M9 1.300V4.600H12.300" stroke="#1a6be0" stroke-width="1.400" fill="none" stroke-linejoin="round"/><circle cx="10.200" cy="9.900" r="4" fill="#1a6be0"/><path d="M7.700 9.900H12.700" stroke="#fff" stroke-width="1.300"/></svg><div style="position:absolute;left:1800px;top:577.0px;width:306px;height:20.5px;background:#e9e7e3"></div><div style="position:absolute;left:1800px;top:597.0px;width:306px;height:1px;background:#d6d6d6"></div><div style="position:absolute;left:1806.5px;top:576.5px;width:1px;height:21px;background:#dcdcdc"></div><svg style="position:absolute;left:1811px;top:580.0px" width="13" height="13"><rect x="0.500" y="0.500" width="12" height="12" rx="1.500" fill="#fff" stroke="#9a9a9a"/><path d="M3.500 6.5H9.5M6.5 3.500V9.5" stroke="#555" stroke-width="1"/></svg><span style="position:absolute;left:1830px;top:579.5px;line-height:16px;font-size:12px;color:#2b2b2b;white-space:nowrap;letter-spacing:0.120px">剪力墙底无支撑构件（共1条）</span><svg style="position:absolute;left:2089px;top:579px" width="15" height="15"><path d="M6 11.700H3.400A1.500 1.500 0 0 1 1.900 10.200V2.800A1.500 1.500 0 0 1 3.400 1.300H9L12.300 4.600V6.500M9 1.300V4.600H12.300" stroke="#1a6be0" stroke-width="1.400" fill="none" stroke-linejoin="round"/><circle cx="10.200" cy="9.900" r="4" fill="#1a6be0"/><path d="M7.700 9.900H12.700" stroke="#fff" stroke-width="1.300"/></svg><div style="position:absolute;left:1800px;top:618.0px;width:306px;height:1px;background:#d6d6d6"></div><div style="position:absolute;left:1806.5px;top:597.5px;width:1px;height:21px;background:#dcdcdc"></div><svg style="position:absolute;left:1811px;top:601.0px" width="13" height="13"><rect x="0.500" y="0.500" width="12" height="12" rx="1.500" fill="#fff" stroke="#9a9a9a"/><path d="M3.500 6.5H9.5M6.5 3.500V9.5" stroke="#555" stroke-width="1"/></svg><span style="position:absolute;left:1830px;top:600.5px;line-height:16px;font-size:12px;color:#2b2b2b;white-space:nowrap;letter-spacing:0.120px">柱底无支撑构件（共12条）</span><svg style="position:absolute;left:2089px;top:600px" width="15" height="15"><path d="M6 11.700H3.400A1.500 1.500 0 0 1 1.900 10.200V2.800A1.500 1.500 0 0 1 3.400 1.300H9L12.300 4.600V6.500M9 1.300V4.600H12.300" stroke="#1a6be0" stroke-width="1.400" fill="none" stroke-linejoin="round"/><circle cx="10.200" cy="9.900" r="4" fill="#1a6be0"/><path d="M7.700 9.900H12.700" stroke="#fff" stroke-width="1.300"/></svg><div style="position:absolute;left:1800px;top:619.0px;width:306px;height:20.5px;background:#e9e7e3"></div><div style="position:absolute;left:1800px;top:639.0px;width:306px;height:1px;background:#d6d6d6"></div><svg style="position:absolute;left:1801px;top:622.0px" width="13" height="13"><rect x="0.500" y="0.500" width="12" height="12" rx="1.500" fill="#fff" stroke="#9a9a9a"/><path d="M3.500 6.5H9.5" stroke="#555" stroke-width="1"/></svg><span style="position:absolute;left:1820px;top:621.5px;line-height:16px;font-size:12px;color:#2b2b2b;white-space:nowrap;letter-spacing:0.120px">疑似错误:<span style="display:inline-block;width:8.700px"></span>5类</span><svg style="position:absolute;left:2089px;top:621px" width="15" height="15"><path d="M6 11.700H3.400A1.500 1.500 0 0 1 1.900 10.200V2.800A1.500 1.500 0 0 1 3.400 1.300H9L12.300 4.600V6.500M9 1.300V4.600H12.300" stroke="#1a6be0" stroke-width="1.400" fill="none" stroke-linejoin="round"/><circle cx="10.200" cy="9.900" r="4" fill="#1a6be0"/><path d="M7.700 9.900H12.700" stroke="#fff" stroke-width="1.300"/></svg><div style="position:absolute;left:1800px;top:660.0px;width:306px;height:1px;background:#d6d6d6"></div><div style="position:absolute;left:1806.5px;top:639.5px;width:1px;height:21px;background:#dcdcdc"></div><svg style="position:absolute;left:1811px;top:643.0px" width="13" height="13"><rect x="0.500" y="0.500" width="12" height="12" rx="1.500" fill="#fff" stroke="#9a9a9a"/><path d="M3.500 6.5H9.5M6.5 3.500V9.5" stroke="#555" stroke-width="1"/></svg><span style="position:absolute;left:1830px;top:642.5px;line-height:16px;font-size:12px;color:#2b2b2b;white-space:nowrap;letter-spacing:0.120px">板受力筋布置重复（共2条）</span><svg style="position:absolute;left:2089px;top:642px" width="15" height="15"><path d="M6 11.700H3.400A1.500 1.500 0 0 1 1.900 10.200V2.800A1.500 1.500 0 0 1 3.400 1.300H9L12.300 4.600V6.500M9 1.300V4.600H12.300" stroke="#1a6be0" stroke-width="1.400" fill="none" stroke-linejoin="round"/><circle cx="10.200" cy="9.900" r="4" fill="#1a6be0"/><path d="M7.700 9.900H12.700" stroke="#fff" stroke-width="1.300"/></svg><div style="position:absolute;left:1800px;top:661.0px;width:306px;height:20.5px;background:#e9e7e3"></div><div style="position:absolute;left:1800px;top:681.0px;width:306px;height:1px;background:#d6d6d6"></div><div style="position:absolute;left:1806.5px;top:660.5px;width:1px;height:21px;background:#dcdcdc"></div><svg style="position:absolute;left:1811px;top:664.0px" width="13" height="13"><rect x="0.500" y="0.500" width="12" height="12" rx="1.500" fill="#fff" stroke="#9a9a9a"/><path d="M3.500 6.5H9.5M6.5 3.500V9.5" stroke="#555" stroke-width="1"/></svg><span style="position:absolute;left:1830px;top:663.5px;line-height:16px;font-size:12px;color:#2b2b2b;white-space:nowrap;letter-spacing:0.120px">负筋布置重复（共5条）</span><svg style="position:absolute;left:2089px;top:663px" width="15" height="15"><path d="M6 11.700H3.400A1.500 1.500 0 0 1 1.900 10.200V2.800A1.500 1.500 0 0 1 3.400 1.300H9L12.300 4.600V6.500M9 1.300V4.600H12.300" stroke="#1a6be0" stroke-width="1.400" fill="none" stroke-linejoin="round"/><circle cx="10.200" cy="9.900" r="4" fill="#1a6be0"/><path d="M7.700 9.900H12.700" stroke="#fff" stroke-width="1.300"/></svg><div style="position:absolute;left:1800px;top:702.0px;width:306px;height:1px;background:#d6d6d6"></div><div style="position:absolute;left:1806.5px;top:681.5px;width:1px;height:21px;background:#dcdcdc"></div><svg style="position:absolute;left:1811px;top:685.0px" width="13" height="13"><rect x="0.500" y="0.500" width="12" height="12" rx="1.500" fill="#fff" stroke="#9a9a9a"/><path d="M3.500 6.5H9.5M6.5 3.500V9.5" stroke="#555" stroke-width="1"/></svg><span style="position:absolute;left:1830px;top:684.5px;line-height:16px;font-size:12px;color:#2b2b2b;white-space:nowrap;letter-spacing:0.120px">内外墙标志错误（共27条）</span><svg style="position:absolute;left:2089px;top:684px" width="15" height="15"><path d="M6 11.700H3.400A1.500 1.500 0 0 1 1.900 10.200V2.800A1.500 1.500 0 0 1 3.400 1.300H9L12.300 4.600V6.500M9 1.300V4.600H12.300" stroke="#1a6be0" stroke-width="1.400" fill="none" stroke-linejoin="round"/><circle cx="10.200" cy="9.900" r="4" fill="#1a6be0"/><path d="M7.700 9.900H12.700" stroke="#fff" stroke-width="1.300"/></svg><div style="position:absolute;left:1800px;top:703.0px;width:306px;height:20.5px;background:#e9e7e3"></div><div style="position:absolute;left:1800px;top:723.0px;width:306px;height:1px;background:#d6d6d6"></div><div style="position:absolute;left:1806.5px;top:702.5px;width:1px;height:21px;background:#dcdcdc"></div><svg style="position:absolute;left:1811px;top:706.0px" width="13" height="13"><rect x="0.500" y="0.500" width="12" height="12" rx="1.500" fill="#fff" stroke="#9a9a9a"/><path d="M3.500 6.5H9.5M6.5 3.500V9.5" stroke="#555" stroke-width="1"/></svg><span style="position:absolute;left:1830px;top:705.5px;line-height:16px;font-size:12px;color:#2b2b2b;white-space:nowrap;letter-spacing:0.120px">层间墙截面错位（共4条）</span><svg style="position:absolute;left:2089px;top:705px" width="15" height="15"><path d="M6 11.700H3.400A1.500 1.500 0 0 1 1.900 10.200V2.800A1.500 1.500 0 0 1 3.400 1.300H9L12.300 4.600V6.500M9 1.300V4.600H12.300" stroke="#1a6be0" stroke-width="1.400" fill="none" stroke-linejoin="round"/><circle cx="10.200" cy="9.900" r="4" fill="#1a6be0"/><path d="M7.700 9.900H12.700" stroke="#fff" stroke-width="1.300"/></svg><div style="position:absolute;left:1800px;top:744.0px;width:306px;height:1px;background:#d6d6d6"></div><div style="position:absolute;left:1806.5px;top:723.5px;width:1px;height:21px;background:#dcdcdc"></div><svg style="position:absolute;left:1811px;top:727.0px" width="13" height="13"><rect x="0.500" y="0.500" width="12" height="12" rx="1.500" fill="#fff" stroke="#9a9a9a"/><path d="M3.500 6.5H9.5M6.5 3.500V9.5" stroke="#555" stroke-width="1"/></svg><span style="position:absolute;left:1830px;top:726.5px;line-height:16px;font-size:12px;color:#2b2b2b;white-space:nowrap;letter-spacing:0.120px">马凳筋遗漏（共1条）</span><svg style="position:absolute;left:2089px;top:726px" width="15" height="15"><path d="M6 11.700H3.400A1.500 1.500 0 0 1 1.900 10.200V2.800A1.500 1.500 0 0 1 3.400 1.300H9L12.300 4.600V6.500M9 1.300V4.600H12.300" stroke="#1a6be0" stroke-width="1.400" fill="none" stroke-linejoin="round"/><circle cx="10.200" cy="9.900" r="4" fill="#1a6be0"/><path d="M7.700 9.900H12.700" stroke="#fff" stroke-width="1.300"/></svg><div style="position:absolute;left:1800px;top:745.0px;width:306px;height:20.5px;background:#e9e7e3"></div><div style="position:absolute;left:1800px;top:765.0px;width:306px;height:1px;background:#d6d6d6"></div><svg style="position:absolute;left:1801px;top:748.0px" width="13" height="13"><rect x="0.500" y="0.500" width="12" height="12" rx="1.500" fill="#fff" stroke="#9a9a9a"/><path d="M3.500 6.5H9.5" stroke="#555" stroke-width="1"/></svg><span style="position:absolute;left:1820px;top:747.5px;line-height:16px;font-size:12px;color:#2b2b2b;white-space:nowrap;letter-spacing:0.120px">提醒:<span style="display:inline-block;width:8.700px"></span>4类</span><svg style="position:absolute;left:2089px;top:747px" width="15" height="15"><path d="M6 11.700H3.400A1.500 1.500 0 0 1 1.900 10.200V2.800A1.500 1.500 0 0 1 3.400 1.300H9L12.300 4.600V6.500M9 1.300V4.600H12.300" stroke="#1a6be0" stroke-width="1.400" fill="none" stroke-linejoin="round"/><circle cx="10.200" cy="9.900" r="4" fill="#1a6be0"/><path d="M7.700 9.900H12.700" stroke="#fff" stroke-width="1.300"/></svg><div style="position:absolute;left:1800px;top:786.0px;width:306px;height:1px;background:#d6d6d6"></div><div style="position:absolute;left:1806.5px;top:765.5px;width:1px;height:21px;background:#dcdcdc"></div><svg style="position:absolute;left:1811px;top:769.0px" width="13" height="13"><rect x="0.500" y="0.500" width="12" height="12" rx="1.500" fill="#fff" stroke="#9a9a9a"/><path d="M3.500 6.5H9.5M6.5 3.500V9.5" stroke="#555" stroke-width="1"/></svg><span style="position:absolute;left:1830px;top:768.5px;line-height:16px;font-size:12px;color:#2b2b2b;white-space:nowrap;letter-spacing:0.120px">梁图元跨数与属性不符（共8条）</span><svg style="position:absolute;left:2089px;top:768px" width="15" height="15"><path d="M6 11.700H3.400A1.500 1.500 0 0 1 1.900 10.200V2.800A1.500 1.500 0 0 1 3.400 1.300H9L12.300 4.600V6.500M9 1.300V4.600H12.300" stroke="#1a6be0" stroke-width="1.400" fill="none" stroke-linejoin="round"/><circle cx="10.200" cy="9.900" r="4" fill="#1a6be0"/><path d="M7.700 9.900H12.700" stroke="#fff" stroke-width="1.300"/></svg><div style="position:absolute;left:1800px;top:787.0px;width:306px;height:20.5px;background:#e9e7e3"></div><div style="position:absolute;left:1800px;top:807.0px;width:306px;height:1px;background:#d6d6d6"></div><div style="position:absolute;left:1806.5px;top:786.5px;width:1px;height:21px;background:#dcdcdc"></div><svg style="position:absolute;left:1811px;top:790.0px" width="13" height="13"><rect x="0.500" y="0.500" width="12" height="12" rx="1.500" fill="#fff" stroke="#9a9a9a"/><path d="M3.500 6.5H9.5M6.5 3.500V9.5" stroke="#555" stroke-width="1"/></svg><span style="position:absolute;left:1830px;top:789.5px;line-height:16px;font-size:12px;color:#2b2b2b;white-space:nowrap;letter-spacing:0.120px">构件未套做法（共145条）</span><svg style="position:absolute;left:2089px;top:789px" width="15" height="15"><path d="M6 11.700H3.400A1.500 1.500 0 0 1 1.900 10.200V2.800A1.500 1.500 0 0 1 3.400 1.300H9L12.300 4.600V6.500M9 1.300V4.600H12.300" stroke="#1a6be0" stroke-width="1.400" fill="none" stroke-linejoin="round"/><circle cx="10.200" cy="9.900" r="4" fill="#1a6be0"/><path d="M7.700 9.900H12.700" stroke="#fff" stroke-width="1.300"/></svg><div style="position:absolute;left:1800px;top:828.0px;width:306px;height:1px;background:#d6d6d6"></div><div style="position:absolute;left:1806.5px;top:807.5px;width:1px;height:21px;background:#dcdcdc"></div><svg style="position:absolute;left:1811px;top:811.0px" width="13" height="13"><rect x="0.500" y="0.500" width="12" height="12" rx="1.500" fill="#fff" stroke="#9a9a9a"/><path d="M3.500 6.5H9.5M6.5 3.500V9.5" stroke="#555" stroke-width="1"/></svg><span style="position:absolute;left:1830px;top:810.5px;line-height:16px;font-size:12px;color:#2b2b2b;white-space:nowrap;letter-spacing:0.120px">构件名称与构件类型不符（共6条）</span><svg style="position:absolute;left:2089px;top:810px" width="15" height="15"><path d="M6 11.700H3.400A1.500 1.500 0 0 1 1.900 10.200V2.800A1.500 1.500 0 0 1 3.400 1.300H9L12.300 4.600V6.500M9 1.300V4.600H12.300" stroke="#1a6be0" stroke-width="1.400" fill="none" stroke-linejoin="round"/><circle cx="10.200" cy="9.900" r="4" fill="#1a6be0"/><path d="M7.700 9.900H12.700" stroke="#fff" stroke-width="1.300"/></svg><div style="position:absolute;left:1800px;top:829.0px;width:306px;height:20.5px;background:#e9e7e3"></div><div style="position:absolute;left:1800px;top:849.0px;width:306px;height:1px;background:#d6d6d6"></div><div style="position:absolute;left:1806.5px;top:828.5px;width:1px;height:21px;background:#dcdcdc"></div><svg style="position:absolute;left:1811px;top:832.0px" width="13" height="13"><rect x="0.500" y="0.500" width="12" height="12" rx="1.500" fill="#fff" stroke="#9a9a9a"/><path d="M3.500 6.5H9.5M6.5 3.500V9.5" stroke="#555" stroke-width="1"/></svg><span style="position:absolute;left:1830px;top:831.5px;line-height:16px;font-size:12px;color:#2b2b2b;white-space:nowrap;letter-spacing:0.120px">装修构件遗漏（共1条）</span><svg style="position:absolute;left:2089px;top:831px" width="15" height="15"><path d="M6 11.700H3.400A1.500 1.500 0 0 1 1.900 10.200V2.800A1.500 1.500 0 0 1 3.400 1.300H9L12.300 4.600V6.500M9 1.300V4.600H12.300" stroke="#1a6be0" stroke-width="1.400" fill="none" stroke-linejoin="round"/><circle cx="10.200" cy="9.900" r="4" fill="#1a6be0"/><path d="M7.700 9.900H12.700" stroke="#fff" stroke-width="1.300"/></svg><div style="position:absolute;left:2049px;top:93.5px;width:1px;height:756px;background:#d6d6d6"></div><div style="position:absolute;left:2068px;top:93.5px;width:1px;height:756px;background:#d6d6d6"></div><div style="position:absolute;left:2087px;top:93.5px;width:1px;height:756px;background:#d6d6d6"></div><div style="position:absolute;left:2049px;top:471.0px;width:20px;height:22px;border:2px solid #7a7a7a;box-sizing:border-box"></div><svg style="position:absolute;left:2070px;top:769.0px" width="15" height="14" fill="none" stroke="#2b6fe0" stroke-width="1.800" stroke-linecap="round"><path d="M5.500 3L13 12"/><path d="M2 5L6.500 1.500" stroke-width="2.400"/></svg></body></html>
